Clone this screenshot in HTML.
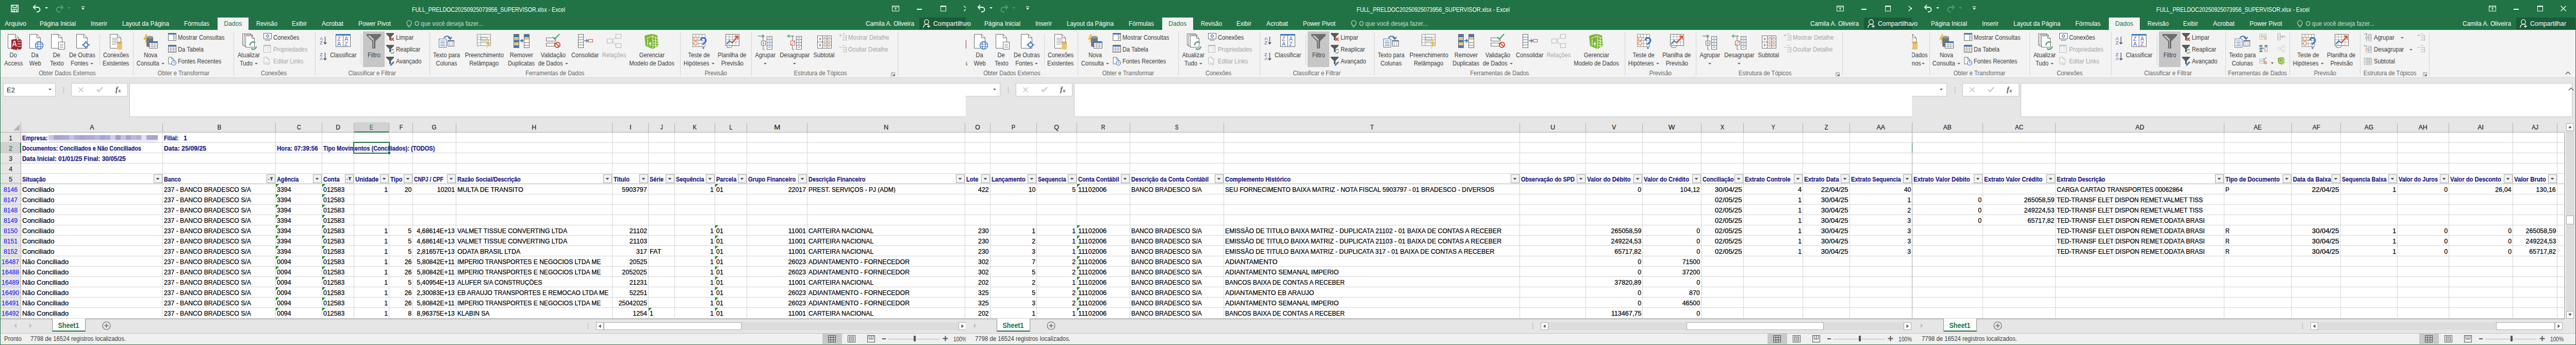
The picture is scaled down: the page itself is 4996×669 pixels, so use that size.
<!DOCTYPE html><html><head><meta charset="utf-8"><title>Excel</title><style>html,body{margin:0;padding:0}
body{width:4996px;height:669px;overflow:hidden;position:relative;background:#e6e6e6;font-family:"Liberation Sans",sans-serif}
.t{position:absolute;white-space:nowrap;line-height:1}
.t span{display:inline-block}
.g span{-webkit-text-stroke:0.25px currentColor}
.r{position:absolute}
.s{position:absolute;overflow:visible}
.clip{position:absolute;overflow:hidden}
</style></head><body><div class="r" style="left:0px;top:237px;width:4974px;height:19px;background:#e6e6e6;"></div><div class="r" style="left:41px;top:257px;width:4933px;height:360px;background:#ffffff;"></div><div class="r" style="left:0px;top:257px;width:40px;height:360px;background:#e6e6e6;"></div><div class="r" style="left:0px;top:277px;width:40px;height:19px;background:#d2d2d2;"></div><div class="r" style="left:687px;top:237px;width:67px;height:19px;background:#d2d2d2;"></div><div class="r" style="left:41px;top:276px;width:4933px;height:1px;background:#d4d4d4;"></div><div class="r" style="left:0px;top:276px;width:40px;height:1px;background:#c6c6c6;"></div><div class="r" style="left:41px;top:296px;width:4933px;height:1px;background:#d4d4d4;"></div><div class="r" style="left:0px;top:296px;width:40px;height:1px;background:#c6c6c6;"></div><div class="r" style="left:41px;top:316px;width:4933px;height:1px;background:#d4d4d4;"></div><div class="r" style="left:0px;top:316px;width:40px;height:1px;background:#c6c6c6;"></div><div class="r" style="left:41px;top:336px;width:4933px;height:1px;background:#d4d4d4;"></div><div class="r" style="left:0px;top:336px;width:40px;height:1px;background:#c6c6c6;"></div><div class="r" style="left:41px;top:356px;width:4933px;height:1px;background:#d4d4d4;"></div><div class="r" style="left:0px;top:356px;width:40px;height:1px;background:#c6c6c6;"></div><div class="r" style="left:41px;top:376px;width:4933px;height:1px;background:#d4d4d4;"></div><div class="r" style="left:0px;top:376px;width:40px;height:1px;background:#c6c6c6;"></div><div class="r" style="left:41px;top:396px;width:4933px;height:1px;background:#d4d4d4;"></div><div class="r" style="left:0px;top:396px;width:40px;height:1px;background:#c6c6c6;"></div><div class="r" style="left:41px;top:416px;width:4933px;height:1px;background:#d4d4d4;"></div><div class="r" style="left:0px;top:416px;width:40px;height:1px;background:#c6c6c6;"></div><div class="r" style="left:41px;top:436px;width:4933px;height:1px;background:#d4d4d4;"></div><div class="r" style="left:0px;top:436px;width:40px;height:1px;background:#c6c6c6;"></div><div class="r" style="left:41px;top:456px;width:4933px;height:1px;background:#d4d4d4;"></div><div class="r" style="left:0px;top:456px;width:40px;height:1px;background:#c6c6c6;"></div><div class="r" style="left:41px;top:476px;width:4933px;height:1px;background:#d4d4d4;"></div><div class="r" style="left:0px;top:476px;width:40px;height:1px;background:#c6c6c6;"></div><div class="r" style="left:41px;top:496px;width:4933px;height:1px;background:#d4d4d4;"></div><div class="r" style="left:0px;top:496px;width:40px;height:1px;background:#c6c6c6;"></div><div class="r" style="left:41px;top:516px;width:4933px;height:1px;background:#d4d4d4;"></div><div class="r" style="left:0px;top:516px;width:40px;height:1px;background:#c6c6c6;"></div><div class="r" style="left:41px;top:536px;width:4933px;height:1px;background:#d4d4d4;"></div><div class="r" style="left:0px;top:536px;width:40px;height:1px;background:#c6c6c6;"></div><div class="r" style="left:41px;top:556px;width:4933px;height:1px;background:#d4d4d4;"></div><div class="r" style="left:0px;top:556px;width:40px;height:1px;background:#c6c6c6;"></div><div class="r" style="left:41px;top:576px;width:4933px;height:1px;background:#d4d4d4;"></div><div class="r" style="left:0px;top:576px;width:40px;height:1px;background:#c6c6c6;"></div><div class="r" style="left:41px;top:596px;width:4933px;height:1px;background:#d4d4d4;"></div><div class="r" style="left:0px;top:596px;width:40px;height:1px;background:#c6c6c6;"></div><div class="r" style="left:0px;top:356px;width:4974px;height:1px;background:#b4b4b4;"></div><div class="r" style="left:0px;top:354px;width:40px;height:1px;background:#c6c6c6;"></div><div class="r" style="left:315px;top:257px;width:1px;height:360px;background:#d4d4d4;"></div><div class="r" style="left:534px;top:257px;width:1px;height:360px;background:#d4d4d4;"></div><div class="r" style="left:624px;top:257px;width:1px;height:360px;background:#d4d4d4;"></div><div class="r" style="left:686px;top:257px;width:1px;height:360px;background:#d4d4d4;"></div><div class="r" style="left:754px;top:257px;width:1px;height:360px;background:#d4d4d4;"></div><div class="r" style="left:800px;top:257px;width:1px;height:360px;background:#d4d4d4;"></div><div class="r" style="left:884px;top:257px;width:1px;height:360px;background:#d4d4d4;"></div><div class="r" style="left:1187px;top:257px;width:1px;height:360px;background:#d4d4d4;"></div><div class="r" style="left:1257px;top:257px;width:1px;height:360px;background:#d4d4d4;"></div><div class="r" style="left:1308px;top:257px;width:1px;height:360px;background:#d4d4d4;"></div><div class="r" style="left:1386px;top:257px;width:1px;height:360px;background:#d4d4d4;"></div><div class="r" style="left:1448px;top:257px;width:1px;height:360px;background:#d4d4d4;"></div><div class="r" style="left:1565px;top:257px;width:1px;height:360px;background:#d4d4d4;"></div><div class="r" style="left:1871px;top:257px;width:1px;height:360px;background:#d4d4d4;"></div><div class="r" style="left:1920px;top:257px;width:1px;height:360px;background:#d4d4d4;"></div><div class="r" style="left:2010px;top:257px;width:1px;height:360px;background:#d4d4d4;"></div><div class="r" style="left:2088px;top:257px;width:1px;height:360px;background:#d4d4d4;"></div><div class="r" style="left:2191px;top:257px;width:1px;height:360px;background:#d4d4d4;"></div><div class="r" style="left:2373px;top:257px;width:1px;height:360px;background:#d4d4d4;"></div><div class="r" style="left:2947px;top:257px;width:1px;height:360px;background:#d4d4d4;"></div><div class="r" style="left:3075px;top:257px;width:1px;height:360px;background:#d4d4d4;"></div><div class="r" style="left:3185px;top:257px;width:1px;height:360px;background:#d4d4d4;"></div><div class="r" style="left:3299px;top:257px;width:1px;height:360px;background:#d4d4d4;"></div><div class="r" style="left:3381px;top:257px;width:1px;height:360px;background:#d4d4d4;"></div><div class="r" style="left:3496px;top:257px;width:1px;height:360px;background:#d4d4d4;"></div><div class="r" style="left:3587px;top:257px;width:1px;height:360px;background:#d4d4d4;"></div><div class="r" style="left:3708px;top:257px;width:1px;height:360px;background:#d4d4d4;"></div><div class="r" style="left:3845px;top:257px;width:1px;height:360px;background:#d4d4d4;"></div><div class="r" style="left:3986px;top:257px;width:1px;height:360px;background:#d4d4d4;"></div><div class="r" style="left:4313px;top:257px;width:1px;height:360px;background:#d4d4d4;"></div><div class="r" style="left:4444px;top:257px;width:1px;height:360px;background:#d4d4d4;"></div><div class="r" style="left:4539px;top:257px;width:1px;height:360px;background:#d4d4d4;"></div><div class="r" style="left:4649px;top:257px;width:1px;height:360px;background:#d4d4d4;"></div><div class="r" style="left:4749px;top:257px;width:1px;height:360px;background:#d4d4d4;"></div><div class="r" style="left:4873px;top:257px;width:1px;height:360px;background:#d4d4d4;"></div><div class="r" style="left:4959px;top:257px;width:1px;height:360px;background:#d4d4d4;"></div><div class="r" style="left:315px;top:239px;width:1px;height:17px;background:#ababab;"></div><div class="r" style="left:534px;top:239px;width:1px;height:17px;background:#ababab;"></div><div class="r" style="left:624px;top:239px;width:1px;height:17px;background:#ababab;"></div><div class="r" style="left:686px;top:239px;width:1px;height:17px;background:#ababab;"></div><div class="r" style="left:754px;top:239px;width:1px;height:17px;background:#ababab;"></div><div class="r" style="left:800px;top:239px;width:1px;height:17px;background:#ababab;"></div><div class="r" style="left:884px;top:239px;width:1px;height:17px;background:#ababab;"></div><div class="r" style="left:1187px;top:239px;width:1px;height:17px;background:#ababab;"></div><div class="r" style="left:1257px;top:239px;width:1px;height:17px;background:#ababab;"></div><div class="r" style="left:1308px;top:239px;width:1px;height:17px;background:#ababab;"></div><div class="r" style="left:1386px;top:239px;width:1px;height:17px;background:#ababab;"></div><div class="r" style="left:1448px;top:239px;width:1px;height:17px;background:#ababab;"></div><div class="r" style="left:1565px;top:239px;width:1px;height:17px;background:#ababab;"></div><div class="r" style="left:1871px;top:239px;width:1px;height:17px;background:#ababab;"></div><div class="r" style="left:1920px;top:239px;width:1px;height:17px;background:#ababab;"></div><div class="r" style="left:2010px;top:239px;width:1px;height:17px;background:#ababab;"></div><div class="r" style="left:2088px;top:239px;width:1px;height:17px;background:#ababab;"></div><div class="r" style="left:2191px;top:239px;width:1px;height:17px;background:#ababab;"></div><div class="r" style="left:2373px;top:239px;width:1px;height:17px;background:#ababab;"></div><div class="r" style="left:2947px;top:239px;width:1px;height:17px;background:#ababab;"></div><div class="r" style="left:3075px;top:239px;width:1px;height:17px;background:#ababab;"></div><div class="r" style="left:3185px;top:239px;width:1px;height:17px;background:#ababab;"></div><div class="r" style="left:3299px;top:239px;width:1px;height:17px;background:#ababab;"></div><div class="r" style="left:3381px;top:239px;width:1px;height:17px;background:#ababab;"></div><div class="r" style="left:3496px;top:239px;width:1px;height:17px;background:#ababab;"></div><div class="r" style="left:3587px;top:239px;width:1px;height:17px;background:#ababab;"></div><div class="r" style="left:3708px;top:239px;width:1px;height:17px;background:#ababab;"></div><div class="r" style="left:3845px;top:239px;width:1px;height:17px;background:#ababab;"></div><div class="r" style="left:3986px;top:239px;width:1px;height:17px;background:#ababab;"></div><div class="r" style="left:4313px;top:239px;width:1px;height:17px;background:#ababab;"></div><div class="r" style="left:4444px;top:239px;width:1px;height:17px;background:#ababab;"></div><div class="r" style="left:4539px;top:239px;width:1px;height:17px;background:#ababab;"></div><div class="r" style="left:4649px;top:239px;width:1px;height:17px;background:#ababab;"></div><div class="r" style="left:4749px;top:239px;width:1px;height:17px;background:#ababab;"></div><div class="r" style="left:4873px;top:239px;width:1px;height:17px;background:#ababab;"></div><div class="r" style="left:4959px;top:239px;width:1px;height:17px;background:#ababab;"></div><div class="r" style="left:0px;top:256px;width:4974px;height:1px;background:#ababab;"></div><div class="r" style="left:40px;top:237px;width:1px;height:380px;background:#ababab;"></div><div class="r" style="left:0px;top:617px;width:4974px;height:1px;background:#d4d4d4;"></div><div class="r" style="left:0px;top:618px;width:4974px;height:1px;background:#a0a0a0;"></div><svg class="s" style="left:26px;top:240px;" width="13" height="14" viewBox="0 0 13 14"><path d="M12 1 L12 13 L0 13 Z" fill="#b4b4b4"/></svg><div class="t g" style="left:-422.0px;width:1200px;text-align:center;top:240.0px;font-size:13px;color:#262626;"><span style="transform:scaleX(0.9509);transform-origin:50% 0">A</span></div><div class="t g" style="left:-175.0px;width:1200px;text-align:center;top:240.0px;font-size:13px;color:#262626;"><span style="transform:scaleX(0.8939);transform-origin:50% 0">B</span></div><div class="t g" style="left:-20.5px;width:1200px;text-align:center;top:240.0px;font-size:13px;color:#262626;"><span style="transform:scaleX(0.8093);transform-origin:50% 0">C</span></div><div class="t g" style="left:55.5px;width:1200px;text-align:center;top:240.0px;font-size:13px;color:#262626;"><span style="transform:scaleX(0.9338);transform-origin:50% 0">D</span></div><div class="t g" style="left:120.5px;width:1200px;text-align:center;top:240.0px;font-size:13px;color:#217346;"><span style="transform:scaleX(0.8024);transform-origin:50% 0">E</span></div><div class="t g" style="left:177.5px;width:1200px;text-align:center;top:240.0px;font-size:13px;color:#262626;"><span style="transform:scaleX(0.8245);transform-origin:50% 0">F</span></div><div class="t g" style="left:242.5px;width:1200px;text-align:center;top:240.0px;font-size:13px;color:#262626;"><span style="transform:scaleX(0.8891);transform-origin:50% 0">G</span></div><div class="t g" style="left:436.0px;width:1200px;text-align:center;top:240.0px;font-size:13px;color:#262626;"><span style="transform:scaleX(0.9457);transform-origin:50% 0">H</span></div><div class="t g" style="left:622.5px;width:1200px;text-align:center;top:240.0px;font-size:13px;color:#262626;"><span style="transform:scaleX(0.9941);transform-origin:50% 0">I</span></div><div class="t g" style="left:683.0px;width:1200px;text-align:center;top:240.0px;font-size:13px;color:#262626;"><span style="transform:scaleX(0.6990);transform-origin:50% 0">J</span></div><div class="t g" style="left:747.5px;width:1200px;text-align:center;top:240.0px;font-size:13px;color:#262626;"><span style="transform:scaleX(0.8538);transform-origin:50% 0">K</span></div><div class="t g" style="left:817.5px;width:1200px;text-align:center;top:240.0px;font-size:13px;color:#262626;"><span style="transform:scaleX(0.8286);transform-origin:50% 0">L</span></div><div class="t g" style="left:907.0px;width:1200px;text-align:center;top:240.0px;font-size:13px;color:#262626;"><span style="transform:scaleX(1.1250);transform-origin:50% 0">M</span></div><div class="t g" style="left:1118.5px;width:1200px;text-align:center;top:240.0px;font-size:13px;color:#262626;"><span style="transform:scaleX(0.9798);transform-origin:50% 0">N</span></div><div class="t g" style="left:1296.0px;width:1200px;text-align:center;top:240.0px;font-size:13px;color:#262626;"><span style="transform:scaleX(0.9331);transform-origin:50% 0">O</span></div><div class="t g" style="left:1365.5px;width:1200px;text-align:center;top:240.0px;font-size:13px;color:#262626;"><span style="transform:scaleX(0.8489);transform-origin:50% 0">P</span></div><div class="t g" style="left:1449.5px;width:1200px;text-align:center;top:240.0px;font-size:13px;color:#262626;"><span style="transform:scaleX(0.9482);transform-origin:50% 0">Q</span></div><div class="t g" style="left:1540.0px;width:1200px;text-align:center;top:240.0px;font-size:13px;color:#262626;"><span style="transform:scaleX(0.8241);transform-origin:50% 0">R</span></div><div class="t g" style="left:1682.5px;width:1200px;text-align:center;top:240.0px;font-size:13px;color:#262626;"><span style="transform:scaleX(0.7551);transform-origin:50% 0">S</span></div><div class="t g" style="left:2060.5px;width:1200px;text-align:center;top:240.0px;font-size:13px;color:#262626;"><span style="transform:scaleX(0.8744);transform-origin:50% 0">T</span></div><div class="t g" style="left:2411.5px;width:1200px;text-align:center;top:240.0px;font-size:13px;color:#262626;"><span style="transform:scaleX(0.9738);transform-origin:50% 0">U</span></div><div class="t g" style="left:2530.5px;width:1200px;text-align:center;top:240.0px;font-size:13px;color:#262626;"><span style="transform:scaleX(0.9324);transform-origin:50% 0">V</span></div><div class="t g" style="left:2642.5px;width:1200px;text-align:center;top:240.0px;font-size:13px;color:#262626;"><span style="transform:scaleX(1.0332);transform-origin:50% 0">W</span></div><div class="t g" style="left:2740.5px;width:1200px;text-align:center;top:240.0px;font-size:13px;color:#262626;"><span style="transform:scaleX(0.8530);transform-origin:50% 0">X</span></div><div class="t g" style="left:2839.0px;width:1200px;text-align:center;top:240.0px;font-size:13px;color:#262626;"><span style="transform:scaleX(0.8008);transform-origin:50% 0">Y</span></div><div class="t g" style="left:2942.0px;width:1200px;text-align:center;top:240.0px;font-size:13px;color:#262626;"><span style="transform:scaleX(0.8403);transform-origin:50% 0">Z</span></div><div class="t g" style="left:3048.0px;width:1200px;text-align:center;top:240.0px;font-size:13px;color:#262626;"><span style="transform:scaleX(0.9509);transform-origin:50% 0">AA</span></div><div class="t g" style="left:3177.0px;width:1200px;text-align:center;top:240.0px;font-size:13px;color:#262626;"><span style="transform:scaleX(0.9224);transform-origin:50% 0">AB</span></div><div class="t g" style="left:3316.0px;width:1200px;text-align:center;top:240.0px;font-size:13px;color:#262626;"><span style="transform:scaleX(0.8773);transform-origin:50% 0">AC</span></div><div class="t g" style="left:3550.0px;width:1200px;text-align:center;top:240.0px;font-size:13px;color:#262626;"><span style="transform:scaleX(0.9420);transform-origin:50% 0">AD</span></div><div class="t g" style="left:3779.0px;width:1200px;text-align:center;top:240.0px;font-size:13px;color:#262626;"><span style="transform:scaleX(0.8766);transform-origin:50% 0">AE</span></div><div class="t g" style="left:3892.0px;width:1200px;text-align:center;top:240.0px;font-size:13px;color:#262626;"><span style="transform:scaleX(0.8905);transform-origin:50% 0">AF</span></div><div class="t g" style="left:3994.5px;width:1200px;text-align:center;top:240.0px;font-size:13px;color:#262626;"><span style="transform:scaleX(0.9176);transform-origin:50% 0">AG</span></div><div class="t g" style="left:4099.5px;width:1200px;text-align:center;top:240.0px;font-size:13px;color:#262626;"><span style="transform:scaleX(0.9482);transform-origin:50% 0">AH</span></div><div class="t g" style="left:4211.5px;width:1200px;text-align:center;top:240.0px;font-size:13px;color:#262626;"><span style="transform:scaleX(0.9636);transform-origin:50% 0">AI</span></div><div class="t g" style="left:4316.5px;width:1200px;text-align:center;top:240.0px;font-size:13px;color:#262626;"><span style="transform:scaleX(0.8430);transform-origin:50% 0">AJ</span></div><div class="r" style="left:3708px;top:237px;width:1px;height:382px;background:#a6a6a6;"></div><div class="r" style="left:3708px;top:277px;width:1px;height:19px;background:#217346;"></div><div class="r" style="left:687px;top:255px;width:67px;height:2px;background:#217346;"></div><div class="t g" style="left:-579.5px;width:1200px;text-align:center;top:261.0px;font-size:13px;color:#262626;"><span style="transform:scaleX(0.9391);transform-origin:50% 0">1</span></div><div class="t g" style="left:-579.5px;width:1200px;text-align:center;top:281.0px;font-size:13px;color:#217346;"><span style="transform:scaleX(0.9391);transform-origin:50% 0">2</span></div><div class="t g" style="left:-579.5px;width:1200px;text-align:center;top:301.0px;font-size:13px;color:#262626;"><span style="transform:scaleX(0.9391);transform-origin:50% 0">3</span></div><div class="t g" style="left:-579.5px;width:1200px;text-align:center;top:321.0px;font-size:13px;color:#262626;"><span style="transform:scaleX(0.9391);transform-origin:50% 0">4</span></div><div class="t g" style="left:-579.5px;width:1200px;text-align:center;top:341.0px;font-size:13px;color:#262626;"><span style="transform:scaleX(0.9391);transform-origin:50% 0">5</span></div><div class="t g" style="left:-579.5px;width:1200px;text-align:center;top:361.0px;font-size:13px;color:#2a2af5;"><span style="transform:scaleX(0.9391);transform-origin:50% 0">8146</span></div><div class="t g" style="left:-579.5px;width:1200px;text-align:center;top:381.0px;font-size:13px;color:#2a2af5;"><span style="transform:scaleX(0.9391);transform-origin:50% 0">8147</span></div><div class="t g" style="left:-579.5px;width:1200px;text-align:center;top:401.0px;font-size:13px;color:#2a2af5;"><span style="transform:scaleX(0.9391);transform-origin:50% 0">8148</span></div><div class="t g" style="left:-579.5px;width:1200px;text-align:center;top:421.0px;font-size:13px;color:#2a2af5;"><span style="transform:scaleX(0.9391);transform-origin:50% 0">8149</span></div><div class="t g" style="left:-579.5px;width:1200px;text-align:center;top:441.0px;font-size:13px;color:#2a2af5;"><span style="transform:scaleX(0.9391);transform-origin:50% 0">8150</span></div><div class="t g" style="left:-579.5px;width:1200px;text-align:center;top:461.0px;font-size:13px;color:#2a2af5;"><span style="transform:scaleX(0.9391);transform-origin:50% 0">8151</span></div><div class="t g" style="left:-579.5px;width:1200px;text-align:center;top:481.0px;font-size:13px;color:#2a2af5;"><span style="transform:scaleX(0.9391);transform-origin:50% 0">8152</span></div><div class="t g" style="left:-579.5px;width:1200px;text-align:center;top:501.0px;font-size:13px;color:#2a2af5;"><span style="transform:scaleX(0.9391);transform-origin:50% 0">16487</span></div><div class="t g" style="left:-579.5px;width:1200px;text-align:center;top:521.0px;font-size:13px;color:#2a2af5;"><span style="transform:scaleX(0.9391);transform-origin:50% 0">16488</span></div><div class="t g" style="left:-579.5px;width:1200px;text-align:center;top:541.0px;font-size:13px;color:#2a2af5;"><span style="transform:scaleX(0.9391);transform-origin:50% 0">16489</span></div><div class="t g" style="left:-579.5px;width:1200px;text-align:center;top:561.0px;font-size:13px;color:#2a2af5;"><span style="transform:scaleX(0.9391);transform-origin:50% 0">16490</span></div><div class="t g" style="left:-579.5px;width:1200px;text-align:center;top:581.0px;font-size:13px;color:#2a2af5;"><span style="transform:scaleX(0.9391);transform-origin:50% 0">16491</span></div><div class="t g" style="left:-579.5px;width:1200px;text-align:center;top:601.0px;font-size:13px;color:#2a2af5;"><span style="transform:scaleX(0.9391);transform-origin:50% 0">16492</span></div><div class="r" style="left:39px;top:277px;width:2px;height:19px;background:#217346;"></div><div class="t g" style="left:43px;top:261.84px;font-size:12px;color:#1f1f8a;font-weight:bold;"><span style="transform:scaleX(0.9020);transform-origin:0 0">Empresa:</span></div><div class="t g" style="left:318px;top:261.84px;font-size:12px;color:#1f1f8a;font-weight:bold;"><span style="transform:scaleX(0.9037);transform-origin:0 0">Filial:</span></div><div class="t g" style="left:356px;top:261.84px;font-size:12px;color:#1f1f8a;font-weight:bold;"><span style="transform:scaleX(1.0069);transform-origin:0 0">1</span></div><div class="t g" style="left:43px;top:281.84px;font-size:12px;color:#1f1f8a;font-weight:bold;"><span style="transform:scaleX(0.9038);transform-origin:0 0">Documentos: Conciliados e Não Conciliados</span></div><div class="t g" style="left:318px;top:281.84px;font-size:12px;color:#1f1f8a;font-weight:bold;"><span style="transform:scaleX(1.0223);transform-origin:0 0">Data: 25/09/25</span></div><div class="t g" style="left:537px;top:281.84px;font-size:12px;color:#1f1f8a;font-weight:bold;"><span style="transform:scaleX(0.9631);transform-origin:0 0">Hora: 07:39:56</span></div><div class="t g" style="left:627px;top:281.84px;font-size:12px;color:#1f1f8a;font-weight:bold;"><span style="transform:scaleX(0.9183);transform-origin:0 0">Tipo Movimentos (Conciliados): (TODOS)</span></div><div class="t g" style="left:43px;top:301.84px;font-size:12px;color:#1f1f8a;font-weight:bold;"><span style="transform:scaleX(0.9908);transform-origin:0 0">Data Inicial: 01/01/25 Final: 30/05/25</span></div><div class="r" style="left:94px;top:262px;width:10px;height:9px;background:#c9c6e4;"></div><div class="r" style="left:94px;top:271px;width:10px;height:5px;background:#ecebf3;"></div><div class="r" style="left:104px;top:262px;width:10px;height:9px;background:#a7a4d0;"></div><div class="r" style="left:104px;top:271px;width:10px;height:5px;background:#ecebf3;"></div><div class="r" style="left:114px;top:262px;width:10px;height:9px;background:#a9a6d1;"></div><div class="r" style="left:114px;top:271px;width:10px;height:5px;background:#ecebf3;"></div><div class="r" style="left:124px;top:262px;width:10px;height:9px;background:#a8abd9;"></div><div class="r" style="left:124px;top:271px;width:10px;height:5px;background:#ecebf3;"></div><div class="r" style="left:134px;top:262px;width:10px;height:9px;background:#c4c2e2;"></div><div class="r" style="left:134px;top:271px;width:10px;height:5px;background:#ecebf3;"></div><div class="r" style="left:144px;top:262px;width:10px;height:9px;background:#b0acd6;"></div><div class="r" style="left:144px;top:271px;width:10px;height:5px;background:#ecebf3;"></div><div class="r" style="left:154px;top:262px;width:10px;height:9px;background:#a6a3cf;"></div><div class="r" style="left:154px;top:271px;width:10px;height:5px;background:#ecebf3;"></div><div class="r" style="left:164px;top:262px;width:10px;height:9px;background:#aeaad4;"></div><div class="r" style="left:164px;top:271px;width:10px;height:5px;background:#ecebf3;"></div><div class="r" style="left:174px;top:262px;width:10px;height:9px;background:#afabd3;"></div><div class="r" style="left:174px;top:271px;width:10px;height:5px;background:#ecebf3;"></div><div class="r" style="left:184px;top:262px;width:10px;height:9px;background:#bcb8da;"></div><div class="r" style="left:184px;top:271px;width:10px;height:5px;background:#ecebf3;"></div><div class="r" style="left:194px;top:262px;width:10px;height:9px;background:#9fa7d6;"></div><div class="r" style="left:194px;top:271px;width:10px;height:5px;background:#ecebf3;"></div><div class="r" style="left:204px;top:262px;width:10px;height:9px;background:#aeaad5;"></div><div class="r" style="left:204px;top:271px;width:10px;height:5px;background:#ecebf3;"></div><div class="r" style="left:214px;top:262px;width:10px;height:9px;background:#cfcfe8;"></div><div class="r" style="left:214px;top:271px;width:10px;height:5px;background:#ecebf3;"></div><div class="r" style="left:224px;top:262px;width:10px;height:9px;background:#a19dcc;"></div><div class="r" style="left:224px;top:271px;width:10px;height:5px;background:#ecebf3;"></div><div class="r" style="left:234px;top:262px;width:10px;height:9px;background:#c3c2e2;"></div><div class="r" style="left:234px;top:271px;width:10px;height:5px;background:#ecebf3;"></div><div class="r" style="left:244px;top:262px;width:10px;height:9px;background:#a7a3d0;"></div><div class="r" style="left:244px;top:271px;width:10px;height:5px;background:#ecebf3;"></div><div class="r" style="left:254px;top:262px;width:10px;height:9px;background:#bbb8dc;"></div><div class="r" style="left:254px;top:271px;width:10px;height:5px;background:#ecebf3;"></div><div class="r" style="left:264px;top:262px;width:10px;height:9px;background:#b2aed6;"></div><div class="r" style="left:264px;top:271px;width:10px;height:5px;background:#ecebf3;"></div><div class="r" style="left:274px;top:262px;width:10px;height:9px;background:#e3e2f0;"></div><div class="r" style="left:274px;top:271px;width:10px;height:5px;background:#ecebf3;"></div><div class="r" style="left:284px;top:262px;width:10px;height:9px;background:#aba8d4;"></div><div class="r" style="left:284px;top:271px;width:10px;height:5px;background:#ecebf3;"></div><div class="r" style="left:294px;top:262px;width:12px;height:9px;background:#a7a3d2;"></div><div class="r" style="left:294px;top:271px;width:12px;height:5px;background:#ecebf3;"></div><div class="t g" style="left:43px;top:341.84px;font-size:12px;color:#1f1f8a;font-weight:bold;"><span style="transform:scaleX(0.9136);transform-origin:0 0">Situação</span></div><svg class="s" style="left:298px;top:338px;" width="17" height="17" viewBox="0 0 17 17"><rect x="0.5" y="0.5" width="16" height="16" fill="#f3f4f6" stroke="#a6a6a6"/><path d="M4.5 7 L11.5 7 L8 11 Z" fill="#555"/></svg><div class="t g" style="left:318px;top:341.84px;font-size:12px;color:#1f1f8a;font-weight:bold;"><span style="transform:scaleX(0.8959);transform-origin:0 0">Banco</span></div><svg class="s" style="left:517px;top:338px;" width="17" height="17" viewBox="0 0 17 17"><rect x="0.5" y="0.5" width="16" height="16" fill="#f3f4f6" stroke="#a6a6a6"/><path d="M6 5.5 L13 5.5 L10.5 8.5 L10.5 12 L8.5 12 L8.5 8.5 Z" fill="#444"/><path d="M2.5 9 L6 9 L4.25 11 Z" fill="#444"/></svg><div class="t g" style="left:537px;top:341.84px;font-size:12px;color:#1f1f8a;font-weight:bold;"><span style="transform:scaleX(0.9068);transform-origin:0 0">Agência</span></div><svg class="s" style="left:607px;top:338px;" width="17" height="17" viewBox="0 0 17 17"><rect x="0.5" y="0.5" width="16" height="16" fill="#f3f4f6" stroke="#a6a6a6"/><path d="M4.5 7 L11.5 7 L8 11 Z" fill="#555"/></svg><div class="t g" style="left:627px;top:341.84px;font-size:12px;color:#1f1f8a;font-weight:bold;"><span style="transform:scaleX(0.9289);transform-origin:0 0">Conta</span></div><svg class="s" style="left:669px;top:338px;" width="17" height="17" viewBox="0 0 17 17"><rect x="0.5" y="0.5" width="16" height="16" fill="#f3f4f6" stroke="#a6a6a6"/><path d="M6 5.5 L13 5.5 L10.5 8.5 L10.5 12 L8.5 12 L8.5 8.5 Z" fill="#444"/><path d="M2.5 9 L6 9 L4.25 11 Z" fill="#444"/></svg><div class="t g" style="left:689px;top:341.84px;font-size:12px;color:#1f1f8a;font-weight:bold;"><span style="transform:scaleX(0.9532);transform-origin:0 0">Unidade</span></div><svg class="s" style="left:737px;top:338px;" width="17" height="17" viewBox="0 0 17 17"><rect x="0.5" y="0.5" width="16" height="16" fill="#f3f4f6" stroke="#a6a6a6"/><path d="M4.5 7 L11.5 7 L8 11 Z" fill="#555"/></svg><div class="t g" style="left:757px;top:341.84px;font-size:12px;color:#1f1f8a;font-weight:bold;"><span style="transform:scaleX(0.9311);transform-origin:0 0">Tipo</span></div><svg class="s" style="left:783px;top:338px;" width="17" height="17" viewBox="0 0 17 17"><rect x="0.5" y="0.5" width="16" height="16" fill="#f3f4f6" stroke="#a6a6a6"/><path d="M4.5 7 L11.5 7 L8 11 Z" fill="#555"/></svg><div class="t g" style="left:803px;top:341.84px;font-size:12px;color:#1f1f8a;font-weight:bold;"><span style="transform:scaleX(0.8605);transform-origin:0 0">CNPJ / CPF</span></div><svg class="s" style="left:867px;top:338px;" width="17" height="17" viewBox="0 0 17 17"><rect x="0.5" y="0.5" width="16" height="16" fill="#f3f4f6" stroke="#a6a6a6"/><path d="M4.5 7 L11.5 7 L8 11 Z" fill="#555"/></svg><div class="t g" style="left:887px;top:341.84px;font-size:12px;color:#1f1f8a;font-weight:bold;"><span style="transform:scaleX(0.9113);transform-origin:0 0">Razão Social/Descrição</span></div><svg class="s" style="left:1170px;top:338px;" width="17" height="17" viewBox="0 0 17 17"><rect x="0.5" y="0.5" width="16" height="16" fill="#f3f4f6" stroke="#a6a6a6"/><path d="M4.5 7 L11.5 7 L8 11 Z" fill="#555"/></svg><div class="t g" style="left:1190px;top:341.84px;font-size:12px;color:#1f1f8a;font-weight:bold;"><span style="transform:scaleX(0.9580);transform-origin:0 0">Titulo</span></div><svg class="s" style="left:1240px;top:338px;" width="17" height="17" viewBox="0 0 17 17"><rect x="0.5" y="0.5" width="16" height="16" fill="#f3f4f6" stroke="#a6a6a6"/><path d="M4.5 7 L11.5 7 L8 11 Z" fill="#555"/></svg><div class="t g" style="left:1260px;top:341.84px;font-size:12px;color:#1f1f8a;font-weight:bold;"><span style="transform:scaleX(0.9125);transform-origin:0 0">Série</span></div><svg class="s" style="left:1291px;top:338px;" width="17" height="17" viewBox="0 0 17 17"><rect x="0.5" y="0.5" width="16" height="16" fill="#f3f4f6" stroke="#a6a6a6"/><path d="M4.5 7 L11.5 7 L8 11 Z" fill="#555"/></svg><div class="t g" style="left:1311px;top:341.84px;font-size:12px;color:#1f1f8a;font-weight:bold;"><span style="transform:scaleX(0.9106);transform-origin:0 0">Sequência</span></div><svg class="s" style="left:1369px;top:338px;" width="17" height="17" viewBox="0 0 17 17"><rect x="0.5" y="0.5" width="16" height="16" fill="#f3f4f6" stroke="#a6a6a6"/><path d="M4.5 7 L11.5 7 L8 11 Z" fill="#555"/></svg><div class="t g" style="left:1389px;top:341.84px;font-size:12px;color:#1f1f8a;font-weight:bold;"><span style="transform:scaleX(0.9203);transform-origin:0 0">Parcela</span></div><svg class="s" style="left:1431px;top:338px;" width="17" height="17" viewBox="0 0 17 17"><rect x="0.5" y="0.5" width="16" height="16" fill="#f3f4f6" stroke="#a6a6a6"/><path d="M4.5 7 L11.5 7 L8 11 Z" fill="#555"/></svg><div class="t g" style="left:1451px;top:341.84px;font-size:12px;color:#1f1f8a;font-weight:bold;"><span style="transform:scaleX(0.9231);transform-origin:0 0">Grupo Financeiro</span></div><svg class="s" style="left:1548px;top:338px;" width="17" height="17" viewBox="0 0 17 17"><rect x="0.5" y="0.5" width="16" height="16" fill="#f3f4f6" stroke="#a6a6a6"/><path d="M4.5 7 L11.5 7 L8 11 Z" fill="#555"/></svg><div class="t g" style="left:1568px;top:341.84px;font-size:12px;color:#1f1f8a;font-weight:bold;"><span style="transform:scaleX(0.9104);transform-origin:0 0">Descrição Financeiro</span></div><svg class="s" style="left:1854px;top:338px;" width="17" height="17" viewBox="0 0 17 17"><rect x="0.5" y="0.5" width="16" height="16" fill="#f3f4f6" stroke="#a6a6a6"/><path d="M4.5 7 L11.5 7 L8 11 Z" fill="#555"/></svg><div class="t g" style="left:1874px;top:341.84px;font-size:12px;color:#1f1f8a;font-weight:bold;"><span style="transform:scaleX(0.9227);transform-origin:0 0">Lote</span></div><svg class="s" style="left:1903px;top:338px;" width="17" height="17" viewBox="0 0 17 17"><rect x="0.5" y="0.5" width="16" height="16" fill="#f3f4f6" stroke="#a6a6a6"/><path d="M4.5 7 L11.5 7 L8 11 Z" fill="#555"/></svg><div class="t g" style="left:1923px;top:341.84px;font-size:12px;color:#1f1f8a;font-weight:bold;"><span style="transform:scaleX(0.9305);transform-origin:0 0">Lançamento</span></div><svg class="s" style="left:1993px;top:338px;" width="17" height="17" viewBox="0 0 17 17"><rect x="0.5" y="0.5" width="16" height="16" fill="#f3f4f6" stroke="#a6a6a6"/><path d="M4.5 7 L11.5 7 L8 11 Z" fill="#555"/></svg><div class="t g" style="left:2013px;top:341.84px;font-size:12px;color:#1f1f8a;font-weight:bold;"><span style="transform:scaleX(0.9106);transform-origin:0 0">Sequencia</span></div><svg class="s" style="left:2071px;top:338px;" width="17" height="17" viewBox="0 0 17 17"><rect x="0.5" y="0.5" width="16" height="16" fill="#f3f4f6" stroke="#a6a6a6"/><path d="M4.5 7 L11.5 7 L8 11 Z" fill="#555"/></svg><div class="t g" style="left:2091px;top:341.84px;font-size:12px;color:#1f1f8a;font-weight:bold;"><span style="transform:scaleX(0.9296);transform-origin:0 0">Conta Contábil</span></div><svg class="s" style="left:2174px;top:338px;" width="17" height="17" viewBox="0 0 17 17"><rect x="0.5" y="0.5" width="16" height="16" fill="#f3f4f6" stroke="#a6a6a6"/><path d="M4.5 7 L11.5 7 L8 11 Z" fill="#555"/></svg><div class="t g" style="left:2194px;top:341.84px;font-size:12px;color:#1f1f8a;font-weight:bold;"><span style="transform:scaleX(0.9190);transform-origin:0 0">Descrição da Conta Contábil</span></div><svg class="s" style="left:2356px;top:338px;" width="17" height="17" viewBox="0 0 17 17"><rect x="0.5" y="0.5" width="16" height="16" fill="#f3f4f6" stroke="#a6a6a6"/><path d="M4.5 7 L11.5 7 L8 11 Z" fill="#555"/></svg><div class="t g" style="left:2376px;top:341.84px;font-size:12px;color:#1f1f8a;font-weight:bold;"><span style="transform:scaleX(0.9387);transform-origin:0 0">Complemento Histórico</span></div><svg class="s" style="left:2930px;top:338px;" width="17" height="17" viewBox="0 0 17 17"><rect x="0.5" y="0.5" width="16" height="16" fill="#f3f4f6" stroke="#a6a6a6"/><path d="M4.5 7 L11.5 7 L8 11 Z" fill="#555"/></svg><div class="t g" style="left:2950px;top:341.84px;font-size:12px;color:#1f1f8a;font-weight:bold;"><span style="transform:scaleX(0.9049);transform-origin:0 0">Observação do SPD</span></div><svg class="s" style="left:3058px;top:338px;" width="17" height="17" viewBox="0 0 17 17"><rect x="0.5" y="0.5" width="16" height="16" fill="#f3f4f6" stroke="#a6a6a6"/><path d="M4.5 7 L11.5 7 L8 11 Z" fill="#555"/></svg><div class="t g" style="left:3078px;top:341.84px;font-size:12px;color:#1f1f8a;font-weight:bold;"><span style="transform:scaleX(0.9607);transform-origin:0 0">Valor do Débito</span></div><svg class="s" style="left:3168px;top:338px;" width="17" height="17" viewBox="0 0 17 17"><rect x="0.5" y="0.5" width="16" height="16" fill="#f3f4f6" stroke="#a6a6a6"/><path d="M4.5 7 L11.5 7 L8 11 Z" fill="#555"/></svg><div class="t g" style="left:3188px;top:341.84px;font-size:12px;color:#1f1f8a;font-weight:bold;"><span style="transform:scaleX(0.9479);transform-origin:0 0">Valor do Crédito</span></div><svg class="s" style="left:3282px;top:338px;" width="17" height="17" viewBox="0 0 17 17"><rect x="0.5" y="0.5" width="16" height="16" fill="#f3f4f6" stroke="#a6a6a6"/><path d="M4.5 7 L11.5 7 L8 11 Z" fill="#555"/></svg><div class="t g" style="left:3302px;top:341.84px;font-size:12px;color:#1f1f8a;font-weight:bold;"><span style="transform:scaleX(0.9015);transform-origin:0 0">Conciliação</span></div><svg class="s" style="left:3364px;top:338px;" width="17" height="17" viewBox="0 0 17 17"><rect x="0.5" y="0.5" width="16" height="16" fill="#f3f4f6" stroke="#a6a6a6"/><path d="M4.5 7 L11.5 7 L8 11 Z" fill="#555"/></svg><div class="t g" style="left:3384px;top:341.84px;font-size:12px;color:#1f1f8a;font-weight:bold;"><span style="transform:scaleX(0.9411);transform-origin:0 0">Extrato Controle</span></div><svg class="s" style="left:3479px;top:338px;" width="17" height="17" viewBox="0 0 17 17"><rect x="0.5" y="0.5" width="16" height="16" fill="#f3f4f6" stroke="#a6a6a6"/><path d="M4.5 7 L11.5 7 L8 11 Z" fill="#555"/></svg><div class="t g" style="left:3499px;top:341.84px;font-size:12px;color:#1f1f8a;font-weight:bold;"><span style="transform:scaleX(0.9549);transform-origin:0 0">Extrato Data</span></div><svg class="s" style="left:3570px;top:338px;" width="17" height="17" viewBox="0 0 17 17"><rect x="0.5" y="0.5" width="16" height="16" fill="#f3f4f6" stroke="#a6a6a6"/><path d="M4.5 7 L11.5 7 L8 11 Z" fill="#555"/></svg><div class="t g" style="left:3590px;top:341.84px;font-size:12px;color:#1f1f8a;font-weight:bold;"><span style="transform:scaleX(0.9238);transform-origin:0 0">Extrato Sequencia</span></div><svg class="s" style="left:3691px;top:338px;" width="17" height="17" viewBox="0 0 17 17"><rect x="0.5" y="0.5" width="16" height="16" fill="#f3f4f6" stroke="#a6a6a6"/><path d="M4.5 7 L11.5 7 L8 11 Z" fill="#555"/></svg><div class="t g" style="left:3711px;top:341.84px;font-size:12px;color:#1f1f8a;font-weight:bold;"><span style="transform:scaleX(0.9580);transform-origin:0 0">Extrato Valor Débito</span></div><svg class="s" style="left:3828px;top:338px;" width="17" height="17" viewBox="0 0 17 17"><rect x="0.5" y="0.5" width="16" height="16" fill="#f3f4f6" stroke="#a6a6a6"/><path d="M4.5 7 L11.5 7 L8 11 Z" fill="#555"/></svg><div class="t g" style="left:3848px;top:341.84px;font-size:12px;color:#1f1f8a;font-weight:bold;"><span style="transform:scaleX(0.9481);transform-origin:0 0">Extrato Valor Crédito</span></div><svg class="s" style="left:3969px;top:338px;" width="17" height="17" viewBox="0 0 17 17"><rect x="0.5" y="0.5" width="16" height="16" fill="#f3f4f6" stroke="#a6a6a6"/><path d="M4.5 7 L11.5 7 L8 11 Z" fill="#555"/></svg><div class="t g" style="left:3989px;top:341.84px;font-size:12px;color:#1f1f8a;font-weight:bold;"><span style="transform:scaleX(0.9188);transform-origin:0 0">Extrato Descrição</span></div><svg class="s" style="left:4296px;top:338px;" width="17" height="17" viewBox="0 0 17 17"><rect x="0.5" y="0.5" width="16" height="16" fill="#f3f4f6" stroke="#a6a6a6"/><path d="M4.5 7 L11.5 7 L8 11 Z" fill="#555"/></svg><div class="t g" style="left:4316px;top:341.84px;font-size:12px;color:#1f1f8a;font-weight:bold;"><span style="transform:scaleX(0.9420);transform-origin:0 0">Tipo de Documento</span></div><svg class="s" style="left:4427px;top:338px;" width="17" height="17" viewBox="0 0 17 17"><rect x="0.5" y="0.5" width="16" height="16" fill="#f3f4f6" stroke="#a6a6a6"/><path d="M4.5 7 L11.5 7 L8 11 Z" fill="#555"/></svg><div class="t g" style="left:4447px;top:341.84px;font-size:12px;color:#1f1f8a;font-weight:bold;"><span style="transform:scaleX(0.9356);transform-origin:0 0">Data da Baixa</span></div><svg class="s" style="left:4522px;top:338px;" width="17" height="17" viewBox="0 0 17 17"><rect x="0.5" y="0.5" width="16" height="16" fill="#f3f4f6" stroke="#a6a6a6"/><path d="M4.5 7 L11.5 7 L8 11 Z" fill="#555"/></svg><div class="t g" style="left:4542px;top:341.84px;font-size:12px;color:#1f1f8a;font-weight:bold;"><span style="transform:scaleX(0.9086);transform-origin:0 0">Sequencia Baixa</span></div><svg class="s" style="left:4632px;top:338px;" width="17" height="17" viewBox="0 0 17 17"><rect x="0.5" y="0.5" width="16" height="16" fill="#f3f4f6" stroke="#a6a6a6"/><path d="M4.5 7 L11.5 7 L8 11 Z" fill="#555"/></svg><div class="t g" style="left:4652px;top:341.84px;font-size:12px;color:#1f1f8a;font-weight:bold;"><span style="transform:scaleX(0.9134);transform-origin:0 0">Valor do Juros</span></div><svg class="s" style="left:4732px;top:338px;" width="17" height="17" viewBox="0 0 17 17"><rect x="0.5" y="0.5" width="16" height="16" fill="#f3f4f6" stroke="#a6a6a6"/><path d="M4.5 7 L11.5 7 L8 11 Z" fill="#555"/></svg><div class="t g" style="left:4752px;top:341.84px;font-size:12px;color:#1f1f8a;font-weight:bold;"><span style="transform:scaleX(0.9383);transform-origin:0 0">Valor do Desconto</span></div><svg class="s" style="left:4856px;top:338px;" width="17" height="17" viewBox="0 0 17 17"><rect x="0.5" y="0.5" width="16" height="16" fill="#f3f4f6" stroke="#a6a6a6"/><path d="M4.5 7 L11.5 7 L8 11 Z" fill="#555"/></svg><div class="t g" style="left:4876px;top:341.84px;font-size:12px;color:#1f1f8a;font-weight:bold;"><span style="transform:scaleX(0.9556);transform-origin:0 0">Valor Bruto</span></div><svg class="s" style="left:4942px;top:338px;" width="17" height="17" viewBox="0 0 17 17"><rect x="0.5" y="0.5" width="16" height="16" fill="#f3f4f6" stroke="#a6a6a6"/><path d="M4.5 7 L11.5 7 L8 11 Z" fill="#555"/></svg><div class="t g" style="left:43px;top:361.0px;font-size:13px;color:#000;width:272px;overflow:hidden;"><span style="transform:scaleX(1.0293);transform-origin:0 0">Conciliado</span></div><div class="t g" style="left:318px;top:361.0px;font-size:13px;color:#000;width:216px;overflow:hidden;"><span style="transform:scaleX(0.9344);transform-origin:0 0">237 - BANCO BRADESCO S/A</span></div><div class="t g" style="left:537px;top:361.0px;font-size:13px;color:#000;width:87px;overflow:hidden;"><span style="transform:scaleX(0.9536);transform-origin:0 0">3394</span></div><svg class="s" style="left:535px;top:357px;" width="6" height="6" viewBox="0 0 6 6"><path d="M0 0 L6 0 L0 6 Z" fill="#1f8a1f"/></svg><div class="t g" style="left:627px;top:361.0px;font-size:13px;color:#000;width:59px;overflow:hidden;"><span style="transform:scaleX(0.9536);transform-origin:0 0">012583</span></div><svg class="s" style="left:625px;top:357px;" width="6" height="6" viewBox="0 0 6 6"><path d="M0 0 L6 0 L0 6 Z" fill="#1f8a1f"/></svg><div class="t g" style="left:-448px;width:1200px;text-align:right;top:361.0px;font-size:13px;color:#000;"><span style="transform:scaleX(0.9536);transform-origin:100% 0">1</span></div><div class="t g" style="left:-402px;width:1200px;text-align:right;top:361.0px;font-size:13px;color:#000;"><span style="transform:scaleX(0.9536);transform-origin:100% 0">20</span></div><div class="t g" style="left:-318px;width:1200px;text-align:right;top:361.0px;font-size:13px;color:#000;"><span style="transform:scaleX(0.9536);transform-origin:100% 0">10201</span></div><div class="t g" style="left:887px;top:361.0px;font-size:13px;color:#000;width:300px;overflow:hidden;"><span style="transform:scaleX(0.9690);transform-origin:0 0">MULTA DE TRANSITO</span></div><div class="t g" style="left:55px;width:1200px;text-align:right;top:361.0px;font-size:13px;color:#000;"><span style="transform:scaleX(0.9536);transform-origin:100% 0">5903797</span></div><div class="t g" style="left:184px;width:1200px;text-align:right;top:361.0px;font-size:13px;color:#000;"><span style="transform:scaleX(0.9536);transform-origin:100% 0">1</span></div><div class="t g" style="left:1389px;top:361.0px;font-size:13px;color:#000;width:59px;overflow:hidden;"><span style="transform:scaleX(0.9536);transform-origin:0 0">01</span></div><svg class="s" style="left:1387px;top:357px;" width="6" height="6" viewBox="0 0 6 6"><path d="M0 0 L6 0 L0 6 Z" fill="#1f8a1f"/></svg><div class="t g" style="left:363px;width:1200px;text-align:right;top:361.0px;font-size:13px;color:#000;"><span style="transform:scaleX(0.9536);transform-origin:100% 0">22017</span></div><div class="t g" style="left:1568px;top:361.0px;font-size:13px;color:#000;width:303px;overflow:hidden;"><span style="transform:scaleX(0.9167);transform-origin:0 0">PREST. SERVIÇOS - PJ (ADM)</span></div><div class="t g" style="left:718px;width:1200px;text-align:right;top:361.0px;font-size:13px;color:#000;"><span style="transform:scaleX(0.9536);transform-origin:100% 0">422</span></div><div class="t g" style="left:808px;width:1200px;text-align:right;top:361.0px;font-size:13px;color:#000;"><span style="transform:scaleX(0.9536);transform-origin:100% 0">10</span></div><div class="t g" style="left:886px;width:1200px;text-align:right;top:361.0px;font-size:13px;color:#000;"><span style="transform:scaleX(0.9536);transform-origin:100% 0">5</span></div><div class="t g" style="left:2091px;top:361.0px;font-size:13px;color:#000;width:100px;overflow:hidden;"><span style="transform:scaleX(0.9865);transform-origin:0 0">11102006</span></div><svg class="s" style="left:2089px;top:357px;" width="6" height="6" viewBox="0 0 6 6"><path d="M0 0 L6 0 L0 6 Z" fill="#1f8a1f"/></svg><div class="t g" style="left:2194px;top:361.0px;font-size:13px;color:#000;width:179px;overflow:hidden;"><span style="transform:scaleX(0.9288);transform-origin:0 0">BANCO BRADESCO S/A</span></div><div class="t g" style="left:2376px;top:361.0px;font-size:13px;color:#000;"><span style="transform:scaleX(0.9360);transform-origin:0 0">SEU FORNECIMENTO BAIXA MATRIZ - NOTA FISCAL 5903797 - 01 BRADESCO - DIVERSOS</span></div><div class="t g" style="left:1983px;width:1200px;text-align:right;top:361.0px;font-size:13px;color:#000;"><span style="transform:scaleX(0.9536);transform-origin:100% 0">0</span></div><div class="t g" style="left:2097px;width:1200px;text-align:right;top:361.0px;font-size:13px;color:#000;"><span style="transform:scaleX(0.9597);transform-origin:100% 0">104,12</span></div><div class="t g" style="left:2179px;width:1200px;text-align:right;top:361.0px;font-size:13px;color:#000;"><span style="transform:scaleX(1.0433);transform-origin:100% 0">30/04/25</span></div><div class="t g" style="left:2294px;width:1200px;text-align:right;top:361.0px;font-size:13px;color:#000;"><span style="transform:scaleX(0.9536);transform-origin:100% 0">4</span></div><div class="t g" style="left:2385px;width:1200px;text-align:right;top:361.0px;font-size:13px;color:#000;"><span style="transform:scaleX(1.0433);transform-origin:100% 0">22/04/25</span></div><div class="t g" style="left:2506px;width:1200px;text-align:right;top:361.0px;font-size:13px;color:#000;"><span style="transform:scaleX(0.9536);transform-origin:100% 0">40</span></div><div class="t g" style="left:3989px;top:361.0px;font-size:13px;color:#000;width:324px;overflow:hidden;"><span style="transform:scaleX(0.9243);transform-origin:0 0">CARGA CARTAO TRANSPORTES 00062864</span></div><div class="t g" style="left:4316px;top:361.0px;font-size:13px;color:#000;width:128px;overflow:hidden;"><span style="transform:scaleX(0.8802);transform-origin:0 0">P</span></div><div class="t g" style="left:3337px;width:1200px;text-align:right;top:361.0px;font-size:13px;color:#000;"><span style="transform:scaleX(1.0433);transform-origin:100% 0">22/04/25</span></div><div class="t g" style="left:3447px;width:1200px;text-align:right;top:361.0px;font-size:13px;color:#000;"><span style="transform:scaleX(0.9536);transform-origin:100% 0">1</span></div><div class="t g" style="left:3547px;width:1200px;text-align:right;top:361.0px;font-size:13px;color:#000;"><span style="transform:scaleX(0.9536);transform-origin:100% 0">0</span></div><div class="t g" style="left:3671px;width:1200px;text-align:right;top:361.0px;font-size:13px;color:#000;"><span style="transform:scaleX(0.9611);transform-origin:100% 0">26,04</span></div><div class="t g" style="left:3757px;width:1200px;text-align:right;top:361.0px;font-size:13px;color:#000;"><span style="transform:scaleX(0.9597);transform-origin:100% 0">130,16</span></div><div class="t g" style="left:43px;top:381.0px;font-size:13px;color:#000;width:272px;overflow:hidden;"><span style="transform:scaleX(1.0293);transform-origin:0 0">Conciliado</span></div><div class="t g" style="left:318px;top:381.0px;font-size:13px;color:#000;width:216px;overflow:hidden;"><span style="transform:scaleX(0.9344);transform-origin:0 0">237 - BANCO BRADESCO S/A</span></div><div class="t g" style="left:537px;top:381.0px;font-size:13px;color:#000;width:87px;overflow:hidden;"><span style="transform:scaleX(0.9536);transform-origin:0 0">3394</span></div><svg class="s" style="left:535px;top:377px;" width="6" height="6" viewBox="0 0 6 6"><path d="M0 0 L6 0 L0 6 Z" fill="#1f8a1f"/></svg><div class="t g" style="left:627px;top:381.0px;font-size:13px;color:#000;"><span style="transform:scaleX(0.9536);transform-origin:0 0">012583</span></div><svg class="s" style="left:625px;top:377px;" width="6" height="6" viewBox="0 0 6 6"><path d="M0 0 L6 0 L0 6 Z" fill="#1f8a1f"/></svg><div class="t g" style="left:2179px;width:1200px;text-align:right;top:381.0px;font-size:13px;color:#000;"><span style="transform:scaleX(1.0433);transform-origin:100% 0">02/05/25</span></div><div class="t g" style="left:2294px;width:1200px;text-align:right;top:381.0px;font-size:13px;color:#000;"><span style="transform:scaleX(0.9536);transform-origin:100% 0">1</span></div><div class="t g" style="left:2385px;width:1200px;text-align:right;top:381.0px;font-size:13px;color:#000;"><span style="transform:scaleX(1.0433);transform-origin:100% 0">30/04/25</span></div><div class="t g" style="left:2506px;width:1200px;text-align:right;top:381.0px;font-size:13px;color:#000;"><span style="transform:scaleX(0.9536);transform-origin:100% 0">1</span></div><div class="t g" style="left:2643px;width:1200px;text-align:right;top:381.0px;font-size:13px;color:#000;"><span style="transform:scaleX(0.9536);transform-origin:100% 0">0</span></div><div class="t g" style="left:2784px;width:1200px;text-align:right;top:381.0px;font-size:13px;color:#000;"><span style="transform:scaleX(0.9576);transform-origin:100% 0">265058,59</span></div><div class="t g" style="left:3989px;top:381.0px;font-size:13px;color:#000;"><span style="transform:scaleX(0.9259);transform-origin:0 0">TED-TRANSF ELET DISPON REMET.VALMET TISS</span></div><div class="t g" style="left:43px;top:401.0px;font-size:13px;color:#000;width:272px;overflow:hidden;"><span style="transform:scaleX(1.0293);transform-origin:0 0">Conciliado</span></div><div class="t g" style="left:318px;top:401.0px;font-size:13px;color:#000;width:216px;overflow:hidden;"><span style="transform:scaleX(0.9344);transform-origin:0 0">237 - BANCO BRADESCO S/A</span></div><div class="t g" style="left:537px;top:401.0px;font-size:13px;color:#000;width:87px;overflow:hidden;"><span style="transform:scaleX(0.9536);transform-origin:0 0">3394</span></div><svg class="s" style="left:535px;top:397px;" width="6" height="6" viewBox="0 0 6 6"><path d="M0 0 L6 0 L0 6 Z" fill="#1f8a1f"/></svg><div class="t g" style="left:627px;top:401.0px;font-size:13px;color:#000;"><span style="transform:scaleX(0.9536);transform-origin:0 0">012583</span></div><svg class="s" style="left:625px;top:397px;" width="6" height="6" viewBox="0 0 6 6"><path d="M0 0 L6 0 L0 6 Z" fill="#1f8a1f"/></svg><div class="t g" style="left:2179px;width:1200px;text-align:right;top:401.0px;font-size:13px;color:#000;"><span style="transform:scaleX(1.0433);transform-origin:100% 0">02/05/25</span></div><div class="t g" style="left:2294px;width:1200px;text-align:right;top:401.0px;font-size:13px;color:#000;"><span style="transform:scaleX(0.9536);transform-origin:100% 0">1</span></div><div class="t g" style="left:2385px;width:1200px;text-align:right;top:401.0px;font-size:13px;color:#000;"><span style="transform:scaleX(1.0433);transform-origin:100% 0">30/04/25</span></div><div class="t g" style="left:2506px;width:1200px;text-align:right;top:401.0px;font-size:13px;color:#000;"><span style="transform:scaleX(0.9536);transform-origin:100% 0">2</span></div><div class="t g" style="left:2643px;width:1200px;text-align:right;top:401.0px;font-size:13px;color:#000;"><span style="transform:scaleX(0.9536);transform-origin:100% 0">0</span></div><div class="t g" style="left:2784px;width:1200px;text-align:right;top:401.0px;font-size:13px;color:#000;"><span style="transform:scaleX(0.9576);transform-origin:100% 0">249224,53</span></div><div class="t g" style="left:3989px;top:401.0px;font-size:13px;color:#000;"><span style="transform:scaleX(0.9259);transform-origin:0 0">TED-TRANSF ELET DISPON REMET.VALMET TISS</span></div><div class="t g" style="left:43px;top:421.0px;font-size:13px;color:#000;width:272px;overflow:hidden;"><span style="transform:scaleX(1.0293);transform-origin:0 0">Conciliado</span></div><div class="t g" style="left:318px;top:421.0px;font-size:13px;color:#000;width:216px;overflow:hidden;"><span style="transform:scaleX(0.9344);transform-origin:0 0">237 - BANCO BRADESCO S/A</span></div><div class="t g" style="left:537px;top:421.0px;font-size:13px;color:#000;width:87px;overflow:hidden;"><span style="transform:scaleX(0.9536);transform-origin:0 0">3394</span></div><svg class="s" style="left:535px;top:417px;" width="6" height="6" viewBox="0 0 6 6"><path d="M0 0 L6 0 L0 6 Z" fill="#1f8a1f"/></svg><div class="t g" style="left:627px;top:421.0px;font-size:13px;color:#000;"><span style="transform:scaleX(0.9536);transform-origin:0 0">012583</span></div><svg class="s" style="left:625px;top:417px;" width="6" height="6" viewBox="0 0 6 6"><path d="M0 0 L6 0 L0 6 Z" fill="#1f8a1f"/></svg><div class="t g" style="left:2179px;width:1200px;text-align:right;top:421.0px;font-size:13px;color:#000;"><span style="transform:scaleX(1.0433);transform-origin:100% 0">02/05/25</span></div><div class="t g" style="left:2294px;width:1200px;text-align:right;top:421.0px;font-size:13px;color:#000;"><span style="transform:scaleX(0.9536);transform-origin:100% 0">1</span></div><div class="t g" style="left:2385px;width:1200px;text-align:right;top:421.0px;font-size:13px;color:#000;"><span style="transform:scaleX(1.0433);transform-origin:100% 0">30/04/25</span></div><div class="t g" style="left:2506px;width:1200px;text-align:right;top:421.0px;font-size:13px;color:#000;"><span style="transform:scaleX(0.9536);transform-origin:100% 0">3</span></div><div class="t g" style="left:2643px;width:1200px;text-align:right;top:421.0px;font-size:13px;color:#000;"><span style="transform:scaleX(0.9536);transform-origin:100% 0">0</span></div><div class="t g" style="left:2784px;width:1200px;text-align:right;top:421.0px;font-size:13px;color:#000;"><span style="transform:scaleX(0.9581);transform-origin:100% 0">65717,82</span></div><div class="t g" style="left:3989px;top:421.0px;font-size:13px;color:#000;"><span style="transform:scaleX(0.9326);transform-origin:0 0">TED-TRANSF ELET DISPON REMET.ODATA BRASI</span></div><div class="t g" style="left:43px;top:441.0px;font-size:13px;color:#000;width:272px;overflow:hidden;"><span style="transform:scaleX(1.0293);transform-origin:0 0">Conciliado</span></div><div class="t g" style="left:318px;top:441.0px;font-size:13px;color:#000;width:216px;overflow:hidden;"><span style="transform:scaleX(0.9344);transform-origin:0 0">237 - BANCO BRADESCO S/A</span></div><div class="t g" style="left:537px;top:441.0px;font-size:13px;color:#000;width:87px;overflow:hidden;"><span style="transform:scaleX(0.9536);transform-origin:0 0">3394</span></div><svg class="s" style="left:535px;top:437px;" width="6" height="6" viewBox="0 0 6 6"><path d="M0 0 L6 0 L0 6 Z" fill="#1f8a1f"/></svg><div class="t g" style="left:627px;top:441.0px;font-size:13px;color:#000;width:59px;overflow:hidden;"><span style="transform:scaleX(0.9536);transform-origin:0 0">012583</span></div><svg class="s" style="left:625px;top:437px;" width="6" height="6" viewBox="0 0 6 6"><path d="M0 0 L6 0 L0 6 Z" fill="#1f8a1f"/></svg><div class="t g" style="left:-448px;width:1200px;text-align:right;top:441.0px;font-size:13px;color:#000;"><span style="transform:scaleX(0.9536);transform-origin:100% 0">1</span></div><div class="t g" style="left:-402px;width:1200px;text-align:right;top:441.0px;font-size:13px;color:#000;"><span style="transform:scaleX(0.9536);transform-origin:100% 0">5</span></div><div class="t g" style="left:-318px;width:1200px;text-align:right;top:441.0px;font-size:13px;color:#000;"><span style="transform:scaleX(0.9442);transform-origin:100% 0">4,68614E+13</span></div><div class="t g" style="left:887px;top:441.0px;font-size:13px;color:#000;width:300px;overflow:hidden;"><span style="transform:scaleX(0.9383);transform-origin:0 0">VALMET TISSUE CONVERTING LTDA</span></div><div class="t g" style="left:55px;width:1200px;text-align:right;top:441.0px;font-size:13px;color:#000;"><span style="transform:scaleX(0.9798);transform-origin:100% 0">21102</span></div><div class="t g" style="left:184px;width:1200px;text-align:right;top:441.0px;font-size:13px;color:#000;"><span style="transform:scaleX(0.9536);transform-origin:100% 0">1</span></div><div class="t g" style="left:1389px;top:441.0px;font-size:13px;color:#000;width:59px;overflow:hidden;"><span style="transform:scaleX(0.9536);transform-origin:0 0">01</span></div><svg class="s" style="left:1387px;top:437px;" width="6" height="6" viewBox="0 0 6 6"><path d="M0 0 L6 0 L0 6 Z" fill="#1f8a1f"/></svg><div class="t g" style="left:363px;width:1200px;text-align:right;top:441.0px;font-size:13px;color:#000;"><span style="transform:scaleX(0.9798);transform-origin:100% 0">11001</span></div><div class="t g" style="left:1568px;top:441.0px;font-size:13px;color:#000;width:303px;overflow:hidden;"><span style="transform:scaleX(0.9363);transform-origin:0 0">CARTEIRA NACIONAL</span></div><div class="t g" style="left:718px;width:1200px;text-align:right;top:441.0px;font-size:13px;color:#000;"><span style="transform:scaleX(0.9536);transform-origin:100% 0">230</span></div><div class="t g" style="left:808px;width:1200px;text-align:right;top:441.0px;font-size:13px;color:#000;"><span style="transform:scaleX(0.9536);transform-origin:100% 0">1</span></div><div class="t g" style="left:886px;width:1200px;text-align:right;top:441.0px;font-size:13px;color:#000;"><span style="transform:scaleX(0.9536);transform-origin:100% 0">1</span></div><div class="t g" style="left:2091px;top:441.0px;font-size:13px;color:#000;width:100px;overflow:hidden;"><span style="transform:scaleX(0.9865);transform-origin:0 0">11102006</span></div><svg class="s" style="left:2089px;top:437px;" width="6" height="6" viewBox="0 0 6 6"><path d="M0 0 L6 0 L0 6 Z" fill="#1f8a1f"/></svg><div class="t g" style="left:2194px;top:441.0px;font-size:13px;color:#000;width:179px;overflow:hidden;"><span style="transform:scaleX(0.9288);transform-origin:0 0">BANCO BRADESCO S/A</span></div><div class="t g" style="left:2376px;top:441.0px;font-size:13px;color:#000;"><span style="transform:scaleX(0.9464);transform-origin:0 0">EMISSÃO DE TITULO BAIXA MATRIZ - DUPLICATA 21102 - 01 BAIXA DE CONTAS A RECEBER</span></div><div class="t g" style="left:1983px;width:1200px;text-align:right;top:441.0px;font-size:13px;color:#000;"><span style="transform:scaleX(0.9576);transform-origin:100% 0">265058,59</span></div><div class="t g" style="left:2097px;width:1200px;text-align:right;top:441.0px;font-size:13px;color:#000;"><span style="transform:scaleX(0.9536);transform-origin:100% 0">0</span></div><div class="t g" style="left:2179px;width:1200px;text-align:right;top:441.0px;font-size:13px;color:#000;"><span style="transform:scaleX(1.0433);transform-origin:100% 0">02/05/25</span></div><div class="t g" style="left:2294px;width:1200px;text-align:right;top:441.0px;font-size:13px;color:#000;"><span style="transform:scaleX(0.9536);transform-origin:100% 0">1</span></div><div class="t g" style="left:2385px;width:1200px;text-align:right;top:441.0px;font-size:13px;color:#000;"><span style="transform:scaleX(1.0433);transform-origin:100% 0">30/04/25</span></div><div class="t g" style="left:2506px;width:1200px;text-align:right;top:441.0px;font-size:13px;color:#000;"><span style="transform:scaleX(0.9536);transform-origin:100% 0">3</span></div><div class="t g" style="left:3989px;top:441.0px;font-size:13px;color:#000;width:324px;overflow:hidden;"><span style="transform:scaleX(0.9326);transform-origin:0 0">TED-TRANSF ELET DISPON REMET.ODATA BRASI</span></div><div class="t g" style="left:4316px;top:441.0px;font-size:13px;color:#000;width:128px;overflow:hidden;"><span style="transform:scaleX(0.8545);transform-origin:0 0">R</span></div><div class="t g" style="left:3337px;width:1200px;text-align:right;top:441.0px;font-size:13px;color:#000;"><span style="transform:scaleX(1.0433);transform-origin:100% 0">30/04/25</span></div><div class="t g" style="left:3447px;width:1200px;text-align:right;top:441.0px;font-size:13px;color:#000;"><span style="transform:scaleX(0.9536);transform-origin:100% 0">1</span></div><div class="t g" style="left:3547px;width:1200px;text-align:right;top:441.0px;font-size:13px;color:#000;"><span style="transform:scaleX(0.9536);transform-origin:100% 0">0</span></div><div class="t g" style="left:3671px;width:1200px;text-align:right;top:441.0px;font-size:13px;color:#000;"><span style="transform:scaleX(0.9536);transform-origin:100% 0">0</span></div><div class="t g" style="left:3757px;width:1200px;text-align:right;top:441.0px;font-size:13px;color:#000;"><span style="transform:scaleX(0.9576);transform-origin:100% 0">265058,59</span></div><div class="t g" style="left:43px;top:461.0px;font-size:13px;color:#000;width:272px;overflow:hidden;"><span style="transform:scaleX(1.0293);transform-origin:0 0">Conciliado</span></div><div class="t g" style="left:318px;top:461.0px;font-size:13px;color:#000;width:216px;overflow:hidden;"><span style="transform:scaleX(0.9344);transform-origin:0 0">237 - BANCO BRADESCO S/A</span></div><div class="t g" style="left:537px;top:461.0px;font-size:13px;color:#000;width:87px;overflow:hidden;"><span style="transform:scaleX(0.9536);transform-origin:0 0">3394</span></div><svg class="s" style="left:535px;top:457px;" width="6" height="6" viewBox="0 0 6 6"><path d="M0 0 L6 0 L0 6 Z" fill="#1f8a1f"/></svg><div class="t g" style="left:627px;top:461.0px;font-size:13px;color:#000;width:59px;overflow:hidden;"><span style="transform:scaleX(0.9536);transform-origin:0 0">012583</span></div><svg class="s" style="left:625px;top:457px;" width="6" height="6" viewBox="0 0 6 6"><path d="M0 0 L6 0 L0 6 Z" fill="#1f8a1f"/></svg><div class="t g" style="left:-448px;width:1200px;text-align:right;top:461.0px;font-size:13px;color:#000;"><span style="transform:scaleX(0.9536);transform-origin:100% 0">1</span></div><div class="t g" style="left:-402px;width:1200px;text-align:right;top:461.0px;font-size:13px;color:#000;"><span style="transform:scaleX(0.9536);transform-origin:100% 0">5</span></div><div class="t g" style="left:-318px;width:1200px;text-align:right;top:461.0px;font-size:13px;color:#000;"><span style="transform:scaleX(0.9442);transform-origin:100% 0">4,68614E+13</span></div><div class="t g" style="left:887px;top:461.0px;font-size:13px;color:#000;width:300px;overflow:hidden;"><span style="transform:scaleX(0.9383);transform-origin:0 0">VALMET TISSUE CONVERTING LTDA</span></div><div class="t g" style="left:55px;width:1200px;text-align:right;top:461.0px;font-size:13px;color:#000;"><span style="transform:scaleX(0.9798);transform-origin:100% 0">21103</span></div><div class="t g" style="left:184px;width:1200px;text-align:right;top:461.0px;font-size:13px;color:#000;"><span style="transform:scaleX(0.9536);transform-origin:100% 0">1</span></div><div class="t g" style="left:1389px;top:461.0px;font-size:13px;color:#000;width:59px;overflow:hidden;"><span style="transform:scaleX(0.9536);transform-origin:0 0">01</span></div><svg class="s" style="left:1387px;top:457px;" width="6" height="6" viewBox="0 0 6 6"><path d="M0 0 L6 0 L0 6 Z" fill="#1f8a1f"/></svg><div class="t g" style="left:363px;width:1200px;text-align:right;top:461.0px;font-size:13px;color:#000;"><span style="transform:scaleX(0.9798);transform-origin:100% 0">11001</span></div><div class="t g" style="left:1568px;top:461.0px;font-size:13px;color:#000;width:303px;overflow:hidden;"><span style="transform:scaleX(0.9363);transform-origin:0 0">CARTEIRA NACIONAL</span></div><div class="t g" style="left:718px;width:1200px;text-align:right;top:461.0px;font-size:13px;color:#000;"><span style="transform:scaleX(0.9536);transform-origin:100% 0">230</span></div><div class="t g" style="left:808px;width:1200px;text-align:right;top:461.0px;font-size:13px;color:#000;"><span style="transform:scaleX(0.9536);transform-origin:100% 0">2</span></div><div class="t g" style="left:886px;width:1200px;text-align:right;top:461.0px;font-size:13px;color:#000;"><span style="transform:scaleX(0.9536);transform-origin:100% 0">1</span></div><div class="t g" style="left:2091px;top:461.0px;font-size:13px;color:#000;width:100px;overflow:hidden;"><span style="transform:scaleX(0.9865);transform-origin:0 0">11102006</span></div><svg class="s" style="left:2089px;top:457px;" width="6" height="6" viewBox="0 0 6 6"><path d="M0 0 L6 0 L0 6 Z" fill="#1f8a1f"/></svg><div class="t g" style="left:2194px;top:461.0px;font-size:13px;color:#000;width:179px;overflow:hidden;"><span style="transform:scaleX(0.9288);transform-origin:0 0">BANCO BRADESCO S/A</span></div><div class="t g" style="left:2376px;top:461.0px;font-size:13px;color:#000;"><span style="transform:scaleX(0.9464);transform-origin:0 0">EMISSÃO DE TITULO BAIXA MATRIZ - DUPLICATA 21103 - 01 BAIXA DE CONTAS A RECEBER</span></div><div class="t g" style="left:1983px;width:1200px;text-align:right;top:461.0px;font-size:13px;color:#000;"><span style="transform:scaleX(0.9576);transform-origin:100% 0">249224,53</span></div><div class="t g" style="left:2097px;width:1200px;text-align:right;top:461.0px;font-size:13px;color:#000;"><span style="transform:scaleX(0.9536);transform-origin:100% 0">0</span></div><div class="t g" style="left:2179px;width:1200px;text-align:right;top:461.0px;font-size:13px;color:#000;"><span style="transform:scaleX(1.0433);transform-origin:100% 0">02/05/25</span></div><div class="t g" style="left:2294px;width:1200px;text-align:right;top:461.0px;font-size:13px;color:#000;"><span style="transform:scaleX(0.9536);transform-origin:100% 0">1</span></div><div class="t g" style="left:2385px;width:1200px;text-align:right;top:461.0px;font-size:13px;color:#000;"><span style="transform:scaleX(1.0433);transform-origin:100% 0">30/04/25</span></div><div class="t g" style="left:2506px;width:1200px;text-align:right;top:461.0px;font-size:13px;color:#000;"><span style="transform:scaleX(0.9536);transform-origin:100% 0">3</span></div><div class="t g" style="left:3989px;top:461.0px;font-size:13px;color:#000;width:324px;overflow:hidden;"><span style="transform:scaleX(0.9326);transform-origin:0 0">TED-TRANSF ELET DISPON REMET.ODATA BRASI</span></div><div class="t g" style="left:4316px;top:461.0px;font-size:13px;color:#000;width:128px;overflow:hidden;"><span style="transform:scaleX(0.8545);transform-origin:0 0">R</span></div><div class="t g" style="left:3337px;width:1200px;text-align:right;top:461.0px;font-size:13px;color:#000;"><span style="transform:scaleX(1.0433);transform-origin:100% 0">30/04/25</span></div><div class="t g" style="left:3447px;width:1200px;text-align:right;top:461.0px;font-size:13px;color:#000;"><span style="transform:scaleX(0.9536);transform-origin:100% 0">1</span></div><div class="t g" style="left:3547px;width:1200px;text-align:right;top:461.0px;font-size:13px;color:#000;"><span style="transform:scaleX(0.9536);transform-origin:100% 0">0</span></div><div class="t g" style="left:3671px;width:1200px;text-align:right;top:461.0px;font-size:13px;color:#000;"><span style="transform:scaleX(0.9536);transform-origin:100% 0">0</span></div><div class="t g" style="left:3757px;width:1200px;text-align:right;top:461.0px;font-size:13px;color:#000;"><span style="transform:scaleX(0.9576);transform-origin:100% 0">249224,53</span></div><div class="t g" style="left:43px;top:481.0px;font-size:13px;color:#000;width:272px;overflow:hidden;"><span style="transform:scaleX(1.0293);transform-origin:0 0">Conciliado</span></div><div class="t g" style="left:318px;top:481.0px;font-size:13px;color:#000;width:216px;overflow:hidden;"><span style="transform:scaleX(0.9344);transform-origin:0 0">237 - BANCO BRADESCO S/A</span></div><div class="t g" style="left:537px;top:481.0px;font-size:13px;color:#000;width:87px;overflow:hidden;"><span style="transform:scaleX(0.9536);transform-origin:0 0">3394</span></div><svg class="s" style="left:535px;top:477px;" width="6" height="6" viewBox="0 0 6 6"><path d="M0 0 L6 0 L0 6 Z" fill="#1f8a1f"/></svg><div class="t g" style="left:627px;top:481.0px;font-size:13px;color:#000;width:59px;overflow:hidden;"><span style="transform:scaleX(0.9536);transform-origin:0 0">012583</span></div><svg class="s" style="left:625px;top:477px;" width="6" height="6" viewBox="0 0 6 6"><path d="M0 0 L6 0 L0 6 Z" fill="#1f8a1f"/></svg><div class="t g" style="left:-448px;width:1200px;text-align:right;top:481.0px;font-size:13px;color:#000;"><span style="transform:scaleX(0.9536);transform-origin:100% 0">1</span></div><div class="t g" style="left:-402px;width:1200px;text-align:right;top:481.0px;font-size:13px;color:#000;"><span style="transform:scaleX(0.9536);transform-origin:100% 0">5</span></div><div class="t g" style="left:-318px;width:1200px;text-align:right;top:481.0px;font-size:13px;color:#000;"><span style="transform:scaleX(0.9442);transform-origin:100% 0">2,81657E+13</span></div><div class="t g" style="left:887px;top:481.0px;font-size:13px;color:#000;width:300px;overflow:hidden;"><span style="transform:scaleX(0.9595);transform-origin:0 0">ODATA BRASIL LTDA</span></div><div class="t g" style="left:55px;width:1200px;text-align:right;top:481.0px;font-size:13px;color:#000;"><span style="transform:scaleX(0.9536);transform-origin:100% 0">317</span></div><div class="t g" style="left:1260px;top:481.0px;font-size:13px;color:#000;width:48px;overflow:hidden;"><span style="transform:scaleX(0.9854);transform-origin:0 0">FAT</span></div><div class="t g" style="left:184px;width:1200px;text-align:right;top:481.0px;font-size:13px;color:#000;"><span style="transform:scaleX(0.9536);transform-origin:100% 0">1</span></div><div class="t g" style="left:1389px;top:481.0px;font-size:13px;color:#000;width:59px;overflow:hidden;"><span style="transform:scaleX(0.9536);transform-origin:0 0">01</span></div><svg class="s" style="left:1387px;top:477px;" width="6" height="6" viewBox="0 0 6 6"><path d="M0 0 L6 0 L0 6 Z" fill="#1f8a1f"/></svg><div class="t g" style="left:363px;width:1200px;text-align:right;top:481.0px;font-size:13px;color:#000;"><span style="transform:scaleX(0.9798);transform-origin:100% 0">11001</span></div><div class="t g" style="left:1568px;top:481.0px;font-size:13px;color:#000;width:303px;overflow:hidden;"><span style="transform:scaleX(0.9363);transform-origin:0 0">CARTEIRA NACIONAL</span></div><div class="t g" style="left:718px;width:1200px;text-align:right;top:481.0px;font-size:13px;color:#000;"><span style="transform:scaleX(0.9536);transform-origin:100% 0">230</span></div><div class="t g" style="left:808px;width:1200px;text-align:right;top:481.0px;font-size:13px;color:#000;"><span style="transform:scaleX(0.9536);transform-origin:100% 0">3</span></div><div class="t g" style="left:886px;width:1200px;text-align:right;top:481.0px;font-size:13px;color:#000;"><span style="transform:scaleX(0.9536);transform-origin:100% 0">1</span></div><div class="t g" style="left:2091px;top:481.0px;font-size:13px;color:#000;width:100px;overflow:hidden;"><span style="transform:scaleX(0.9865);transform-origin:0 0">11102006</span></div><svg class="s" style="left:2089px;top:477px;" width="6" height="6" viewBox="0 0 6 6"><path d="M0 0 L6 0 L0 6 Z" fill="#1f8a1f"/></svg><div class="t g" style="left:2194px;top:481.0px;font-size:13px;color:#000;width:179px;overflow:hidden;"><span style="transform:scaleX(0.9288);transform-origin:0 0">BANCO BRADESCO S/A</span></div><div class="t g" style="left:2376px;top:481.0px;font-size:13px;color:#000;"><span style="transform:scaleX(0.9446);transform-origin:0 0">EMISSÃO DE TITULO BAIXA MATRIZ - DUPLICATA 317 - 01 BAIXA DE CONTAS A RECEBER</span></div><div class="t g" style="left:1983px;width:1200px;text-align:right;top:481.0px;font-size:13px;color:#000;"><span style="transform:scaleX(0.9581);transform-origin:100% 0">65717,82</span></div><div class="t g" style="left:2097px;width:1200px;text-align:right;top:481.0px;font-size:13px;color:#000;"><span style="transform:scaleX(0.9536);transform-origin:100% 0">0</span></div><div class="t g" style="left:2179px;width:1200px;text-align:right;top:481.0px;font-size:13px;color:#000;"><span style="transform:scaleX(1.0433);transform-origin:100% 0">02/05/25</span></div><div class="t g" style="left:2294px;width:1200px;text-align:right;top:481.0px;font-size:13px;color:#000;"><span style="transform:scaleX(0.9536);transform-origin:100% 0">1</span></div><div class="t g" style="left:2385px;width:1200px;text-align:right;top:481.0px;font-size:13px;color:#000;"><span style="transform:scaleX(1.0433);transform-origin:100% 0">30/04/25</span></div><div class="t g" style="left:2506px;width:1200px;text-align:right;top:481.0px;font-size:13px;color:#000;"><span style="transform:scaleX(0.9536);transform-origin:100% 0">3</span></div><div class="t g" style="left:3989px;top:481.0px;font-size:13px;color:#000;width:324px;overflow:hidden;"><span style="transform:scaleX(0.9326);transform-origin:0 0">TED-TRANSF ELET DISPON REMET.ODATA BRASI</span></div><div class="t g" style="left:4316px;top:481.0px;font-size:13px;color:#000;width:128px;overflow:hidden;"><span style="transform:scaleX(0.8545);transform-origin:0 0">R</span></div><div class="t g" style="left:3337px;width:1200px;text-align:right;top:481.0px;font-size:13px;color:#000;"><span style="transform:scaleX(1.0433);transform-origin:100% 0">30/04/25</span></div><div class="t g" style="left:3447px;width:1200px;text-align:right;top:481.0px;font-size:13px;color:#000;"><span style="transform:scaleX(0.9536);transform-origin:100% 0">1</span></div><div class="t g" style="left:3547px;width:1200px;text-align:right;top:481.0px;font-size:13px;color:#000;"><span style="transform:scaleX(0.9536);transform-origin:100% 0">0</span></div><div class="t g" style="left:3671px;width:1200px;text-align:right;top:481.0px;font-size:13px;color:#000;"><span style="transform:scaleX(0.9536);transform-origin:100% 0">0</span></div><div class="t g" style="left:3757px;width:1200px;text-align:right;top:481.0px;font-size:13px;color:#000;"><span style="transform:scaleX(0.9581);transform-origin:100% 0">65717,82</span></div><div class="t g" style="left:43px;top:501.0px;font-size:13px;color:#000;width:272px;overflow:hidden;"><span style="transform:scaleX(1.0234);transform-origin:0 0">Não Conciliado</span></div><div class="t g" style="left:318px;top:501.0px;font-size:13px;color:#000;width:216px;overflow:hidden;"><span style="transform:scaleX(0.9344);transform-origin:0 0">237 - BANCO BRADESCO S/A</span></div><div class="t g" style="left:537px;top:501.0px;font-size:13px;color:#000;width:87px;overflow:hidden;"><span style="transform:scaleX(0.9536);transform-origin:0 0">0094</span></div><svg class="s" style="left:535px;top:497px;" width="6" height="6" viewBox="0 0 6 6"><path d="M0 0 L6 0 L0 6 Z" fill="#1f8a1f"/></svg><div class="t g" style="left:627px;top:501.0px;font-size:13px;color:#000;width:59px;overflow:hidden;"><span style="transform:scaleX(0.9536);transform-origin:0 0">012583</span></div><svg class="s" style="left:625px;top:497px;" width="6" height="6" viewBox="0 0 6 6"><path d="M0 0 L6 0 L0 6 Z" fill="#1f8a1f"/></svg><div class="t g" style="left:-448px;width:1200px;text-align:right;top:501.0px;font-size:13px;color:#000;"><span style="transform:scaleX(0.9536);transform-origin:100% 0">1</span></div><div class="t g" style="left:-402px;width:1200px;text-align:right;top:501.0px;font-size:13px;color:#000;"><span style="transform:scaleX(0.9536);transform-origin:100% 0">26</span></div><div class="t g" style="left:-318px;width:1200px;text-align:right;top:501.0px;font-size:13px;color:#000;"><span style="transform:scaleX(0.9560);transform-origin:100% 0">5,80842E+11</span></div><div class="t g" style="left:887px;top:501.0px;font-size:13px;color:#000;width:300px;overflow:hidden;"><span style="transform:scaleX(0.9283);transform-origin:0 0">IMPERIO TRANSPORTES E NEGOCIOS LTDA ME</span></div><div class="t g" style="left:55px;width:1200px;text-align:right;top:501.0px;font-size:13px;color:#000;"><span style="transform:scaleX(0.9536);transform-origin:100% 0">20525</span></div><div class="t g" style="left:184px;width:1200px;text-align:right;top:501.0px;font-size:13px;color:#000;"><span style="transform:scaleX(0.9536);transform-origin:100% 0">1</span></div><div class="t g" style="left:1389px;top:501.0px;font-size:13px;color:#000;width:59px;overflow:hidden;"><span style="transform:scaleX(0.9536);transform-origin:0 0">01</span></div><svg class="s" style="left:1387px;top:497px;" width="6" height="6" viewBox="0 0 6 6"><path d="M0 0 L6 0 L0 6 Z" fill="#1f8a1f"/></svg><div class="t g" style="left:363px;width:1200px;text-align:right;top:501.0px;font-size:13px;color:#000;"><span style="transform:scaleX(0.9536);transform-origin:100% 0">26023</span></div><div class="t g" style="left:1568px;top:501.0px;font-size:13px;color:#000;width:303px;overflow:hidden;"><span style="transform:scaleX(0.9515);transform-origin:0 0">ADIANTAMENTO - FORNECEDOR</span></div><div class="t g" style="left:718px;width:1200px;text-align:right;top:501.0px;font-size:13px;color:#000;"><span style="transform:scaleX(0.9536);transform-origin:100% 0">302</span></div><div class="t g" style="left:808px;width:1200px;text-align:right;top:501.0px;font-size:13px;color:#000;"><span style="transform:scaleX(0.9536);transform-origin:100% 0">7</span></div><div class="t g" style="left:886px;width:1200px;text-align:right;top:501.0px;font-size:13px;color:#000;"><span style="transform:scaleX(0.9536);transform-origin:100% 0">2</span></div><div class="t g" style="left:2091px;top:501.0px;font-size:13px;color:#000;width:100px;overflow:hidden;"><span style="transform:scaleX(0.9865);transform-origin:0 0">11102006</span></div><svg class="s" style="left:2089px;top:497px;" width="6" height="6" viewBox="0 0 6 6"><path d="M0 0 L6 0 L0 6 Z" fill="#1f8a1f"/></svg><div class="t g" style="left:2194px;top:501.0px;font-size:13px;color:#000;width:179px;overflow:hidden;"><span style="transform:scaleX(0.9288);transform-origin:0 0">BANCO BRADESCO S/A</span></div><div class="t g" style="left:2376px;top:501.0px;font-size:13px;color:#000;"><span style="transform:scaleX(0.9949);transform-origin:0 0">ADIANTAMENTO</span></div><div class="t g" style="left:1983px;width:1200px;text-align:right;top:501.0px;font-size:13px;color:#000;"><span style="transform:scaleX(0.9536);transform-origin:100% 0">0</span></div><div class="t g" style="left:2097px;width:1200px;text-align:right;top:501.0px;font-size:13px;color:#000;"><span style="transform:scaleX(0.9536);transform-origin:100% 0">71500</span></div><div class="t g" style="left:43px;top:521.0px;font-size:13px;color:#000;width:272px;overflow:hidden;"><span style="transform:scaleX(1.0234);transform-origin:0 0">Não Conciliado</span></div><div class="t g" style="left:318px;top:521.0px;font-size:13px;color:#000;width:216px;overflow:hidden;"><span style="transform:scaleX(0.9344);transform-origin:0 0">237 - BANCO BRADESCO S/A</span></div><div class="t g" style="left:537px;top:521.0px;font-size:13px;color:#000;width:87px;overflow:hidden;"><span style="transform:scaleX(0.9536);transform-origin:0 0">0094</span></div><svg class="s" style="left:535px;top:517px;" width="6" height="6" viewBox="0 0 6 6"><path d="M0 0 L6 0 L0 6 Z" fill="#1f8a1f"/></svg><div class="t g" style="left:627px;top:521.0px;font-size:13px;color:#000;width:59px;overflow:hidden;"><span style="transform:scaleX(0.9536);transform-origin:0 0">012583</span></div><svg class="s" style="left:625px;top:517px;" width="6" height="6" viewBox="0 0 6 6"><path d="M0 0 L6 0 L0 6 Z" fill="#1f8a1f"/></svg><div class="t g" style="left:-448px;width:1200px;text-align:right;top:521.0px;font-size:13px;color:#000;"><span style="transform:scaleX(0.9536);transform-origin:100% 0">1</span></div><div class="t g" style="left:-402px;width:1200px;text-align:right;top:521.0px;font-size:13px;color:#000;"><span style="transform:scaleX(0.9536);transform-origin:100% 0">26</span></div><div class="t g" style="left:-318px;width:1200px;text-align:right;top:521.0px;font-size:13px;color:#000;"><span style="transform:scaleX(0.9560);transform-origin:100% 0">5,80842E+11</span></div><div class="t g" style="left:887px;top:521.0px;font-size:13px;color:#000;width:300px;overflow:hidden;"><span style="transform:scaleX(0.9283);transform-origin:0 0">IMPERIO TRANSPORTES E NEGOCIOS LTDA ME</span></div><div class="t g" style="left:55px;width:1200px;text-align:right;top:521.0px;font-size:13px;color:#000;"><span style="transform:scaleX(0.9536);transform-origin:100% 0">2052025</span></div><div class="t g" style="left:184px;width:1200px;text-align:right;top:521.0px;font-size:13px;color:#000;"><span style="transform:scaleX(0.9536);transform-origin:100% 0">1</span></div><div class="t g" style="left:1389px;top:521.0px;font-size:13px;color:#000;width:59px;overflow:hidden;"><span style="transform:scaleX(0.9536);transform-origin:0 0">01</span></div><svg class="s" style="left:1387px;top:517px;" width="6" height="6" viewBox="0 0 6 6"><path d="M0 0 L6 0 L0 6 Z" fill="#1f8a1f"/></svg><div class="t g" style="left:363px;width:1200px;text-align:right;top:521.0px;font-size:13px;color:#000;"><span style="transform:scaleX(0.9536);transform-origin:100% 0">26023</span></div><div class="t g" style="left:1568px;top:521.0px;font-size:13px;color:#000;width:303px;overflow:hidden;"><span style="transform:scaleX(0.9515);transform-origin:0 0">ADIANTAMENTO - FORNECEDOR</span></div><div class="t g" style="left:718px;width:1200px;text-align:right;top:521.0px;font-size:13px;color:#000;"><span style="transform:scaleX(0.9536);transform-origin:100% 0">302</span></div><div class="t g" style="left:808px;width:1200px;text-align:right;top:521.0px;font-size:13px;color:#000;"><span style="transform:scaleX(0.9536);transform-origin:100% 0">5</span></div><div class="t g" style="left:886px;width:1200px;text-align:right;top:521.0px;font-size:13px;color:#000;"><span style="transform:scaleX(0.9536);transform-origin:100% 0">2</span></div><div class="t g" style="left:2091px;top:521.0px;font-size:13px;color:#000;width:100px;overflow:hidden;"><span style="transform:scaleX(0.9865);transform-origin:0 0">11102006</span></div><svg class="s" style="left:2089px;top:517px;" width="6" height="6" viewBox="0 0 6 6"><path d="M0 0 L6 0 L0 6 Z" fill="#1f8a1f"/></svg><div class="t g" style="left:2194px;top:521.0px;font-size:13px;color:#000;width:179px;overflow:hidden;"><span style="transform:scaleX(0.9288);transform-origin:0 0">BANCO BRADESCO S/A</span></div><div class="t g" style="left:2376px;top:521.0px;font-size:13px;color:#000;"><span style="transform:scaleX(0.9761);transform-origin:0 0">ADIANTAMENTO SEMANAL IMPERIO</span></div><div class="t g" style="left:1983px;width:1200px;text-align:right;top:521.0px;font-size:13px;color:#000;"><span style="transform:scaleX(0.9536);transform-origin:100% 0">0</span></div><div class="t g" style="left:2097px;width:1200px;text-align:right;top:521.0px;font-size:13px;color:#000;"><span style="transform:scaleX(0.9536);transform-origin:100% 0">37200</span></div><div class="t g" style="left:43px;top:541.0px;font-size:13px;color:#000;width:272px;overflow:hidden;"><span style="transform:scaleX(1.0234);transform-origin:0 0">Não Conciliado</span></div><div class="t g" style="left:318px;top:541.0px;font-size:13px;color:#000;width:216px;overflow:hidden;"><span style="transform:scaleX(0.9344);transform-origin:0 0">237 - BANCO BRADESCO S/A</span></div><div class="t g" style="left:537px;top:541.0px;font-size:13px;color:#000;width:87px;overflow:hidden;"><span style="transform:scaleX(0.9536);transform-origin:0 0">0094</span></div><svg class="s" style="left:535px;top:537px;" width="6" height="6" viewBox="0 0 6 6"><path d="M0 0 L6 0 L0 6 Z" fill="#1f8a1f"/></svg><div class="t g" style="left:627px;top:541.0px;font-size:13px;color:#000;width:59px;overflow:hidden;"><span style="transform:scaleX(0.9536);transform-origin:0 0">012583</span></div><svg class="s" style="left:625px;top:537px;" width="6" height="6" viewBox="0 0 6 6"><path d="M0 0 L6 0 L0 6 Z" fill="#1f8a1f"/></svg><div class="t g" style="left:-448px;width:1200px;text-align:right;top:541.0px;font-size:13px;color:#000;"><span style="transform:scaleX(0.9536);transform-origin:100% 0">1</span></div><div class="t g" style="left:-402px;width:1200px;text-align:right;top:541.0px;font-size:13px;color:#000;"><span style="transform:scaleX(0.9536);transform-origin:100% 0">5</span></div><div class="t g" style="left:-318px;width:1200px;text-align:right;top:541.0px;font-size:13px;color:#000;"><span style="transform:scaleX(0.9442);transform-origin:100% 0">5,40954E+13</span></div><div class="t g" style="left:887px;top:541.0px;font-size:13px;color:#000;width:300px;overflow:hidden;"><span style="transform:scaleX(0.9137);transform-origin:0 0">ALUFER S/A CONSTRUÇÕES</span></div><div class="t g" style="left:55px;width:1200px;text-align:right;top:541.0px;font-size:13px;color:#000;"><span style="transform:scaleX(0.9536);transform-origin:100% 0">21231</span></div><div class="t g" style="left:184px;width:1200px;text-align:right;top:541.0px;font-size:13px;color:#000;"><span style="transform:scaleX(0.9536);transform-origin:100% 0">1</span></div><div class="t g" style="left:1389px;top:541.0px;font-size:13px;color:#000;width:59px;overflow:hidden;"><span style="transform:scaleX(0.9536);transform-origin:0 0">01</span></div><svg class="s" style="left:1387px;top:537px;" width="6" height="6" viewBox="0 0 6 6"><path d="M0 0 L6 0 L0 6 Z" fill="#1f8a1f"/></svg><div class="t g" style="left:363px;width:1200px;text-align:right;top:541.0px;font-size:13px;color:#000;"><span style="transform:scaleX(0.9798);transform-origin:100% 0">11001</span></div><div class="t g" style="left:1568px;top:541.0px;font-size:13px;color:#000;width:303px;overflow:hidden;"><span style="transform:scaleX(0.9363);transform-origin:0 0">CARTEIRA NACIONAL</span></div><div class="t g" style="left:718px;width:1200px;text-align:right;top:541.0px;font-size:13px;color:#000;"><span style="transform:scaleX(0.9536);transform-origin:100% 0">202</span></div><div class="t g" style="left:808px;width:1200px;text-align:right;top:541.0px;font-size:13px;color:#000;"><span style="transform:scaleX(0.9536);transform-origin:100% 0">2</span></div><div class="t g" style="left:886px;width:1200px;text-align:right;top:541.0px;font-size:13px;color:#000;"><span style="transform:scaleX(0.9536);transform-origin:100% 0">1</span></div><div class="t g" style="left:2091px;top:541.0px;font-size:13px;color:#000;width:100px;overflow:hidden;"><span style="transform:scaleX(0.9865);transform-origin:0 0">11102006</span></div><svg class="s" style="left:2089px;top:537px;" width="6" height="6" viewBox="0 0 6 6"><path d="M0 0 L6 0 L0 6 Z" fill="#1f8a1f"/></svg><div class="t g" style="left:2194px;top:541.0px;font-size:13px;color:#000;width:179px;overflow:hidden;"><span style="transform:scaleX(0.9288);transform-origin:0 0">BANCO BRADESCO S/A</span></div><div class="t g" style="left:2376px;top:541.0px;font-size:13px;color:#000;"><span style="transform:scaleX(0.9210);transform-origin:0 0">BANCOS BAIXA DE CONTAS A RECEBER</span></div><div class="t g" style="left:1983px;width:1200px;text-align:right;top:541.0px;font-size:13px;color:#000;"><span style="transform:scaleX(0.9581);transform-origin:100% 0">37820,89</span></div><div class="t g" style="left:2097px;width:1200px;text-align:right;top:541.0px;font-size:13px;color:#000;"><span style="transform:scaleX(0.9536);transform-origin:100% 0">0</span></div><div class="t g" style="left:43px;top:561.0px;font-size:13px;color:#000;width:272px;overflow:hidden;"><span style="transform:scaleX(1.0234);transform-origin:0 0">Não Conciliado</span></div><div class="t g" style="left:318px;top:561.0px;font-size:13px;color:#000;width:216px;overflow:hidden;"><span style="transform:scaleX(0.9344);transform-origin:0 0">237 - BANCO BRADESCO S/A</span></div><div class="t g" style="left:537px;top:561.0px;font-size:13px;color:#000;width:87px;overflow:hidden;"><span style="transform:scaleX(0.9536);transform-origin:0 0">0094</span></div><svg class="s" style="left:535px;top:557px;" width="6" height="6" viewBox="0 0 6 6"><path d="M0 0 L6 0 L0 6 Z" fill="#1f8a1f"/></svg><div class="t g" style="left:627px;top:561.0px;font-size:13px;color:#000;width:59px;overflow:hidden;"><span style="transform:scaleX(0.9536);transform-origin:0 0">012583</span></div><svg class="s" style="left:625px;top:557px;" width="6" height="6" viewBox="0 0 6 6"><path d="M0 0 L6 0 L0 6 Z" fill="#1f8a1f"/></svg><div class="t g" style="left:-448px;width:1200px;text-align:right;top:561.0px;font-size:13px;color:#000;"><span style="transform:scaleX(0.9536);transform-origin:100% 0">1</span></div><div class="t g" style="left:-402px;width:1200px;text-align:right;top:561.0px;font-size:13px;color:#000;"><span style="transform:scaleX(0.9536);transform-origin:100% 0">26</span></div><div class="t g" style="left:-318px;width:1200px;text-align:right;top:561.0px;font-size:13px;color:#000;"><span style="transform:scaleX(0.9442);transform-origin:100% 0">2,30083E+13</span></div><div class="t g" style="left:887px;top:561.0px;font-size:13px;color:#000;width:300px;overflow:hidden;"><span style="transform:scaleX(0.9306);transform-origin:0 0">EB ARAUJO TRANSPORTES E REMOCAO LTDA ME</span></div><div class="t g" style="left:55px;width:1200px;text-align:right;top:561.0px;font-size:13px;color:#000;"><span style="transform:scaleX(0.9536);transform-origin:100% 0">52251</span></div><div class="t g" style="left:184px;width:1200px;text-align:right;top:561.0px;font-size:13px;color:#000;"><span style="transform:scaleX(0.9536);transform-origin:100% 0">1</span></div><div class="t g" style="left:1389px;top:561.0px;font-size:13px;color:#000;width:59px;overflow:hidden;"><span style="transform:scaleX(0.9536);transform-origin:0 0">01</span></div><svg class="s" style="left:1387px;top:557px;" width="6" height="6" viewBox="0 0 6 6"><path d="M0 0 L6 0 L0 6 Z" fill="#1f8a1f"/></svg><div class="t g" style="left:363px;width:1200px;text-align:right;top:561.0px;font-size:13px;color:#000;"><span style="transform:scaleX(0.9536);transform-origin:100% 0">26023</span></div><div class="t g" style="left:1568px;top:561.0px;font-size:13px;color:#000;width:303px;overflow:hidden;"><span style="transform:scaleX(0.9515);transform-origin:0 0">ADIANTAMENTO - FORNECEDOR</span></div><div class="t g" style="left:718px;width:1200px;text-align:right;top:561.0px;font-size:13px;color:#000;"><span style="transform:scaleX(0.9536);transform-origin:100% 0">325</span></div><div class="t g" style="left:808px;width:1200px;text-align:right;top:561.0px;font-size:13px;color:#000;"><span style="transform:scaleX(0.9536);transform-origin:100% 0">5</span></div><div class="t g" style="left:886px;width:1200px;text-align:right;top:561.0px;font-size:13px;color:#000;"><span style="transform:scaleX(0.9536);transform-origin:100% 0">2</span></div><div class="t g" style="left:2091px;top:561.0px;font-size:13px;color:#000;width:100px;overflow:hidden;"><span style="transform:scaleX(0.9865);transform-origin:0 0">11102006</span></div><svg class="s" style="left:2089px;top:557px;" width="6" height="6" viewBox="0 0 6 6"><path d="M0 0 L6 0 L0 6 Z" fill="#1f8a1f"/></svg><div class="t g" style="left:2194px;top:561.0px;font-size:13px;color:#000;width:179px;overflow:hidden;"><span style="transform:scaleX(0.9288);transform-origin:0 0">BANCO BRADESCO S/A</span></div><div class="t g" style="left:2376px;top:561.0px;font-size:13px;color:#000;"><span style="transform:scaleX(0.9660);transform-origin:0 0">ADIANTAMENTO EB ARAUJO</span></div><div class="t g" style="left:1983px;width:1200px;text-align:right;top:561.0px;font-size:13px;color:#000;"><span style="transform:scaleX(0.9536);transform-origin:100% 0">0</span></div><div class="t g" style="left:2097px;width:1200px;text-align:right;top:561.0px;font-size:13px;color:#000;"><span style="transform:scaleX(0.9536);transform-origin:100% 0">870</span></div><div class="t g" style="left:43px;top:581.0px;font-size:13px;color:#000;width:272px;overflow:hidden;"><span style="transform:scaleX(1.0234);transform-origin:0 0">Não Conciliado</span></div><div class="t g" style="left:318px;top:581.0px;font-size:13px;color:#000;width:216px;overflow:hidden;"><span style="transform:scaleX(0.9344);transform-origin:0 0">237 - BANCO BRADESCO S/A</span></div><div class="t g" style="left:537px;top:581.0px;font-size:13px;color:#000;width:87px;overflow:hidden;"><span style="transform:scaleX(0.9536);transform-origin:0 0">0094</span></div><svg class="s" style="left:535px;top:577px;" width="6" height="6" viewBox="0 0 6 6"><path d="M0 0 L6 0 L0 6 Z" fill="#1f8a1f"/></svg><div class="t g" style="left:627px;top:581.0px;font-size:13px;color:#000;width:59px;overflow:hidden;"><span style="transform:scaleX(0.9536);transform-origin:0 0">012583</span></div><svg class="s" style="left:625px;top:577px;" width="6" height="6" viewBox="0 0 6 6"><path d="M0 0 L6 0 L0 6 Z" fill="#1f8a1f"/></svg><div class="t g" style="left:-448px;width:1200px;text-align:right;top:581.0px;font-size:13px;color:#000;"><span style="transform:scaleX(0.9536);transform-origin:100% 0">1</span></div><div class="t g" style="left:-402px;width:1200px;text-align:right;top:581.0px;font-size:13px;color:#000;"><span style="transform:scaleX(0.9536);transform-origin:100% 0">26</span></div><div class="t g" style="left:-318px;width:1200px;text-align:right;top:581.0px;font-size:13px;color:#000;"><span style="transform:scaleX(0.9560);transform-origin:100% 0">5,80842E+11</span></div><div class="t g" style="left:887px;top:581.0px;font-size:13px;color:#000;width:300px;overflow:hidden;"><span style="transform:scaleX(0.9283);transform-origin:0 0">IMPERIO TRANSPORTES E NEGOCIOS LTDA ME</span></div><div class="t g" style="left:55px;width:1200px;text-align:right;top:581.0px;font-size:13px;color:#000;"><span style="transform:scaleX(0.9536);transform-origin:100% 0">25042025</span></div><div class="t g" style="left:184px;width:1200px;text-align:right;top:581.0px;font-size:13px;color:#000;"><span style="transform:scaleX(0.9536);transform-origin:100% 0">1</span></div><div class="t g" style="left:1389px;top:581.0px;font-size:13px;color:#000;width:59px;overflow:hidden;"><span style="transform:scaleX(0.9536);transform-origin:0 0">01</span></div><svg class="s" style="left:1387px;top:577px;" width="6" height="6" viewBox="0 0 6 6"><path d="M0 0 L6 0 L0 6 Z" fill="#1f8a1f"/></svg><div class="t g" style="left:363px;width:1200px;text-align:right;top:581.0px;font-size:13px;color:#000;"><span style="transform:scaleX(0.9536);transform-origin:100% 0">26023</span></div><div class="t g" style="left:1568px;top:581.0px;font-size:13px;color:#000;width:303px;overflow:hidden;"><span style="transform:scaleX(0.9515);transform-origin:0 0">ADIANTAMENTO - FORNECEDOR</span></div><div class="t g" style="left:718px;width:1200px;text-align:right;top:581.0px;font-size:13px;color:#000;"><span style="transform:scaleX(0.9536);transform-origin:100% 0">325</span></div><div class="t g" style="left:808px;width:1200px;text-align:right;top:581.0px;font-size:13px;color:#000;"><span style="transform:scaleX(0.9536);transform-origin:100% 0">3</span></div><div class="t g" style="left:886px;width:1200px;text-align:right;top:581.0px;font-size:13px;color:#000;"><span style="transform:scaleX(0.9536);transform-origin:100% 0">2</span></div><div class="t g" style="left:2091px;top:581.0px;font-size:13px;color:#000;width:100px;overflow:hidden;"><span style="transform:scaleX(0.9865);transform-origin:0 0">11102006</span></div><svg class="s" style="left:2089px;top:577px;" width="6" height="6" viewBox="0 0 6 6"><path d="M0 0 L6 0 L0 6 Z" fill="#1f8a1f"/></svg><div class="t g" style="left:2194px;top:581.0px;font-size:13px;color:#000;width:179px;overflow:hidden;"><span style="transform:scaleX(0.9288);transform-origin:0 0">BANCO BRADESCO S/A</span></div><div class="t g" style="left:2376px;top:581.0px;font-size:13px;color:#000;"><span style="transform:scaleX(0.9761);transform-origin:0 0">ADIANTAMENTO SEMANAL IMPERIO</span></div><div class="t g" style="left:1983px;width:1200px;text-align:right;top:581.0px;font-size:13px;color:#000;"><span style="transform:scaleX(0.9536);transform-origin:100% 0">0</span></div><div class="t g" style="left:2097px;width:1200px;text-align:right;top:581.0px;font-size:13px;color:#000;"><span style="transform:scaleX(0.9536);transform-origin:100% 0">46500</span></div><div class="t g" style="left:43px;top:601.0px;font-size:13px;color:#000;width:272px;overflow:hidden;"><span style="transform:scaleX(1.0234);transform-origin:0 0">Não Conciliado</span></div><div class="t g" style="left:318px;top:601.0px;font-size:13px;color:#000;width:216px;overflow:hidden;"><span style="transform:scaleX(0.9344);transform-origin:0 0">237 - BANCO BRADESCO S/A</span></div><div class="t g" style="left:537px;top:601.0px;font-size:13px;color:#000;width:87px;overflow:hidden;"><span style="transform:scaleX(0.9536);transform-origin:0 0">0094</span></div><svg class="s" style="left:535px;top:597px;" width="6" height="6" viewBox="0 0 6 6"><path d="M0 0 L6 0 L0 6 Z" fill="#1f8a1f"/></svg><div class="t g" style="left:627px;top:601.0px;font-size:13px;color:#000;width:59px;overflow:hidden;"><span style="transform:scaleX(0.9536);transform-origin:0 0">012583</span></div><svg class="s" style="left:625px;top:597px;" width="6" height="6" viewBox="0 0 6 6"><path d="M0 0 L6 0 L0 6 Z" fill="#1f8a1f"/></svg><div class="t g" style="left:-448px;width:1200px;text-align:right;top:601.0px;font-size:13px;color:#000;"><span style="transform:scaleX(0.9536);transform-origin:100% 0">1</span></div><div class="t g" style="left:-402px;width:1200px;text-align:right;top:601.0px;font-size:13px;color:#000;"><span style="transform:scaleX(0.9536);transform-origin:100% 0">8</span></div><div class="t g" style="left:-318px;width:1200px;text-align:right;top:601.0px;font-size:13px;color:#000;"><span style="transform:scaleX(0.9442);transform-origin:100% 0">8,96375E+13</span></div><div class="t g" style="left:887px;top:601.0px;font-size:13px;color:#000;width:300px;overflow:hidden;"><span style="transform:scaleX(0.9288);transform-origin:0 0">KLABIN SA</span></div><div class="t g" style="left:55px;width:1200px;text-align:right;top:601.0px;font-size:13px;color:#000;"><span style="transform:scaleX(0.9536);transform-origin:100% 0">1254</span></div><div class="t g" style="left:1260px;top:601.0px;font-size:13px;color:#000;width:48px;overflow:hidden;"><span style="transform:scaleX(0.9536);transform-origin:0 0">1</span></div><svg class="s" style="left:1258px;top:597px;" width="6" height="6" viewBox="0 0 6 6"><path d="M0 0 L6 0 L0 6 Z" fill="#1f8a1f"/></svg><div class="t g" style="left:184px;width:1200px;text-align:right;top:601.0px;font-size:13px;color:#000;"><span style="transform:scaleX(0.9536);transform-origin:100% 0">1</span></div><div class="t g" style="left:1389px;top:601.0px;font-size:13px;color:#000;width:59px;overflow:hidden;"><span style="transform:scaleX(0.9536);transform-origin:0 0">01</span></div><svg class="s" style="left:1387px;top:597px;" width="6" height="6" viewBox="0 0 6 6"><path d="M0 0 L6 0 L0 6 Z" fill="#1f8a1f"/></svg><div class="t g" style="left:363px;width:1200px;text-align:right;top:601.0px;font-size:13px;color:#000;"><span style="transform:scaleX(0.9798);transform-origin:100% 0">11001</span></div><div class="t g" style="left:1568px;top:601.0px;font-size:13px;color:#000;width:303px;overflow:hidden;"><span style="transform:scaleX(0.9363);transform-origin:0 0">CARTEIRA NACIONAL</span></div><div class="t g" style="left:718px;width:1200px;text-align:right;top:601.0px;font-size:13px;color:#000;"><span style="transform:scaleX(0.9536);transform-origin:100% 0">202</span></div><div class="t g" style="left:808px;width:1200px;text-align:right;top:601.0px;font-size:13px;color:#000;"><span style="transform:scaleX(0.9536);transform-origin:100% 0">1</span></div><div class="t g" style="left:886px;width:1200px;text-align:right;top:601.0px;font-size:13px;color:#000;"><span style="transform:scaleX(0.9536);transform-origin:100% 0">1</span></div><div class="t g" style="left:2091px;top:601.0px;font-size:13px;color:#000;width:100px;overflow:hidden;"><span style="transform:scaleX(0.9865);transform-origin:0 0">11102006</span></div><svg class="s" style="left:2089px;top:597px;" width="6" height="6" viewBox="0 0 6 6"><path d="M0 0 L6 0 L0 6 Z" fill="#1f8a1f"/></svg><div class="t g" style="left:2194px;top:601.0px;font-size:13px;color:#000;width:179px;overflow:hidden;"><span style="transform:scaleX(0.9288);transform-origin:0 0">BANCO BRADESCO S/A</span></div><div class="t g" style="left:2376px;top:601.0px;font-size:13px;color:#000;"><span style="transform:scaleX(0.9210);transform-origin:0 0">BANCOS BAIXA DE CONTAS A RECEBER</span></div><div class="t g" style="left:1983px;width:1200px;text-align:right;top:601.0px;font-size:13px;color:#000;"><span style="transform:scaleX(0.9729);transform-origin:100% 0">113467,75</span></div><div class="t g" style="left:2097px;width:1200px;text-align:right;top:601.0px;font-size:13px;color:#000;"><span style="transform:scaleX(0.9536);transform-origin:100% 0">0</span></div><div class="r" style="left:685px;top:275px;width:71px;height:23px;background:transparent;box-sizing:border-box;border:2px solid #217346"></div><div class="r" style="left:751px;top:293px;width:5px;height:5px;background:#217346;border:1px solid #fff"></div><div class="clip" style="left:0px;top:0;width:1873px;height:669px"><div style="position:absolute;left:0px;top:0"><div style="position:absolute;left:0px;top:0;width:0;height:0"><div class="r" style="left:0px;top:0px;width:1920px;height:58px;background:#217346;"></div><svg class="s" style="left:21px;top:9px;" width="15" height="15" viewBox="0 0 15 15"><path d="M1 1 H14 V14 H1 Z" fill="none" stroke="#fff" stroke-width="1.6"/><path d="M4 1.5 V5.5 H11 V1.5" fill="none" stroke="#fff" stroke-width="1.4"/><path d="M4 14 V9 H11 V14" fill="none" stroke="#fff" stroke-width="1.4"/><rect x="6" y="11" width="2" height="3" fill="#fff"/></svg><svg class="s" style="left:63px;top:8px;" width="17" height="16" viewBox="0 0 17 16"><path d="M2 6 H10 a4.5 4.5 0 0 1 0 9 H8" fill="none" stroke="#fff" stroke-width="1.8"/><path d="M6 1.5 L1.8 6 L6 10.5" fill="none" stroke="#fff" stroke-width="1.8"/></svg><svg class="s" style="left:87px;top:14px;" width="6" height="4" viewBox="0 0 6 4"><path d="M0 0 L6 0 L3 3 Z" fill="#fff"/></svg><svg class="s" style="left:107px;top:8px;" width="17" height="16" viewBox="0 0 17 16"><path d="M15 6 H7 a4.5 4.5 0 0 0 0 9 H9" fill="none" stroke="#5a9e78" stroke-width="1.8"/><path d="M11 1.5 L15.2 6 L11 10.5" fill="none" stroke="#5a9e78" stroke-width="1.8"/></svg><svg class="s" style="left:131px;top:14px;" width="6" height="4" viewBox="0 0 6 4"><path d="M0 0 L6 0 L3 3 Z" fill="#5a9e78"/></svg><svg class="s" style="left:157px;top:12px;" width="8" height="9" viewBox="0 0 8 9"><path d="M1 1 H7" stroke="#fff" stroke-width="1.2"/><path d="M1 3.5 H7 L4 7 Z" fill="#fff"/></svg><div class="t" style="left:799px;top:12.84px;font-size:12px;color:#fff;"><span style="transform:scaleX(0.8823);transform-origin:0 0">FULL_PRELDOC20250925073956_SUPERVISOR.xlsx - Excel</span></div><svg class="s" style="left:1730px;top:11px;" width="14" height="11" viewBox="0 0 14 11"><rect x="0.5" y="0.5" width="13" height="10" fill="none" stroke="#fff"/><path d="M0.5 2.5 H13.5" stroke="#fff"/><path d="M7 9 V4.5 M4.8 6.5 L7 4.2 L9.2 6.5" stroke="#fff" fill="none"/></svg><div class="r" style="left:1778px;top:17px;width:10px;height:2px;background:#fff;"></div><svg class="s" style="left:1824px;top:11px;" width="11" height="11" viewBox="0 0 11 11"><rect x="0.5" y="0.5" width="10" height="10" fill="none" stroke="#fff"/><path d="M0.5 1.5 H10.5" stroke="#fff" stroke-width="1.5"/></svg><svg class="s" style="left:1869px;top:11px;" width="11" height="11" viewBox="0 0 11 11"><path d="M0.5 0.5 L10.5 10.5 M10.5 0.5 L0.5 10.5" stroke="#fff" stroke-width="1.3"/></svg><div class="t" style="left:9px;top:39.0px;font-size:13px;color:#ffffff;"><span style="transform:scaleX(0.9528);transform-origin:0 0">Arquivo</span></div><div class="t" style="left:77px;top:39.0px;font-size:13px;color:#ffffff;"><span style="transform:scaleX(0.9052);transform-origin:0 0">Página Inicial</span></div><div class="t" style="left:176px;top:39.0px;font-size:13px;color:#ffffff;"><span style="transform:scaleX(0.8859);transform-origin:0 0">Inserir</span></div><div class="t" style="left:237px;top:39.0px;font-size:13px;color:#ffffff;"><span style="transform:scaleX(0.8992);transform-origin:0 0">Layout da Página</span></div><div class="t" style="left:357px;top:39.0px;font-size:13px;color:#ffffff;"><span style="transform:scaleX(0.9044);transform-origin:0 0">Fórmulas</span></div><div class="t" style="left:497px;top:39.0px;font-size:13px;color:#ffffff;"><span style="transform:scaleX(0.8729);transform-origin:0 0">Revisão</span></div><div class="t" style="left:566px;top:39.0px;font-size:13px;color:#ffffff;"><span style="transform:scaleX(0.8921);transform-origin:0 0">Exibir</span></div><div class="t" style="left:624px;top:39.0px;font-size:13px;color:#ffffff;"><span style="transform:scaleX(0.9374);transform-origin:0 0">Acrobat</span></div><div class="t" style="left:695px;top:39.0px;font-size:13px;color:#ffffff;"><span style="transform:scaleX(0.9083);transform-origin:0 0">Power Pivot</span></div><div class="r" style="left:422px;top:34px;width:60px;height:24px;background:#f3f3f3;"></div><div class="t" style="left:-148.0px;width:1200px;text-align:center;top:39.0px;font-size:13px;color:#217346;"><span style="transform:scaleX(0.9314);transform-origin:50% 0">Dados</span></div><svg class="s" style="left:788px;top:39px;" width="11" height="15" viewBox="0 0 11 15"><path d="M5.5 1 a4.5 4.5 0 0 1 2.5 8.3 V11 H3 V9.3 A4.5 4.5 0 0 1 5.5 1 Z" fill="none" stroke="#c5dccf" stroke-width="1.1"/><path d="M3.5 13 H7.5" stroke="#c5dccf"/></svg><div class="t" style="left:804px;top:39.0px;font-size:13px;color:#c5dccf;"><span style="transform:scaleX(0.8806);transform-origin:0 0">O que você deseja fazer...</span></div><div class="t" style="left:1679px;top:39.0px;font-size:13px;color:#fff;"><span style="transform:scaleX(0.9099);transform-origin:0 0">Camila A. Oliveira</span></div><div class="r" style="left:1783px;top:34px;width:137px;height:23px;background:#1a5c37;"></div><svg class="s" style="left:1790px;top:37px;" width="15" height="18" viewBox="0 0 15 18"><circle cx="7" cy="5.5" r="4.3" fill="none" stroke="#fff" stroke-width="1.3"/><path d="M1 17 a6.5 6.5 0 0 1 10 -6" fill="none" stroke="#fff" stroke-width="1.3"/><path d="M11 11 v6 M8 14 h6" stroke="#fff" stroke-width="1.3"/></svg><div class="t" style="left:1810px;top:39.0px;font-size:13px;color:#fff;"><span style="transform:scaleX(0.9406);transform-origin:0 0">Compartilhar</span></div><div class="r" style="left:0px;top:58px;width:1920px;height:92px;background:#f3f3f3;"></div><div class="r" style="left:0px;top:150px;width:1920px;height:1px;background:#d4d4d4;"></div><svg class="s" style="left:14px;top:66px;" width="32" height="32" viewBox="0 0 32 32"><path d="M1.5 0.5 L15.5 0.5 L22.5 7.5 L22.5 27.5 L1.5 27.5 Z" fill="#fff" stroke="#6d6d6d"/><path d="M15.5 0.5 L15.5 7.5 L22.5 7.5" fill="none" stroke="#6d6d6d"/><path d="M8 11 L19 9 L19 31 L8 29 Z" fill="#a4262c"/><rect x="19" y="10" width="9" height="20" rx="4" fill="#a4262c"/><path d="M20 14 h7 M20 19 h7 M20 24 h7" stroke="#fff" stroke-width="1.2"/><path d="M10.5 24 L13.2 14 L14.8 14 L17.5 24 M11.8 20.5 h4.4" stroke="#fff" stroke-width="1.6" fill="none"/></svg><div class="t" style="left:-574px;width:1200px;text-align:center;top:100.84px;font-size:12px;color:#3c3c3c;"><span style="transform:scaleX(0.9300);transform-origin:50% 0">Do</span></div><div class="t" style="left:-574px;width:1200px;text-align:center;top:116.84px;font-size:12px;color:#3c3c3c;"><span style="transform:scaleX(0.9300);transform-origin:50% 0">Access</span></div><svg class="s" style="left:56px;top:66px;" width="32" height="32" viewBox="0 0 32 32"><path d="M1.5 0.5 L15.5 0.5 L22.5 7.5 L22.5 27.5 L1.5 27.5 Z" fill="#fff" stroke="#6d6d6d"/><path d="M15.5 0.5 L15.5 7.5 L22.5 7.5" fill="none" stroke="#6d6d6d"/><circle cx="20" cy="22" r="7.5" fill="#fff" stroke="#3b77bf" stroke-width="1.4"/><ellipse cx="20" cy="22" rx="3.2" ry="7.5" fill="none" stroke="#3b77bf" stroke-width="1.2"/><path d="M12.5 19.5 h15 M12.5 24.5 h15" stroke="#3b77bf" stroke-width="1.2"/></svg><div class="t" style="left:-532px;width:1200px;text-align:center;top:100.84px;font-size:12px;color:#3c3c3c;"><span style="transform:scaleX(0.9300);transform-origin:50% 0">Da</span></div><div class="t" style="left:-532px;width:1200px;text-align:center;top:116.84px;font-size:12px;color:#3c3c3c;"><span style="transform:scaleX(0.9300);transform-origin:50% 0">Web</span></div><svg class="s" style="left:98px;top:66px;" width="32" height="32" viewBox="0 0 32 32"><path d="M1.5 0.5 L15.5 0.5 L22.5 7.5 L22.5 27.5 L1.5 27.5 Z" fill="#fff" stroke="#6d6d6d"/><path d="M15.5 0.5 L15.5 7.5 L22.5 7.5" fill="none" stroke="#6d6d6d"/><rect x="15.5" y="15.5" width="12" height="14" fill="#fff" stroke="#6d6d6d"/><path d="M18 20 h7 M18 23 h7 M18 26 h7" stroke="#8a8a8a"/></svg><div class="t" style="left:-490px;width:1200px;text-align:center;top:100.84px;font-size:12px;color:#3c3c3c;"><span style="transform:scaleX(0.9300);transform-origin:50% 0">De</span></div><div class="t" style="left:-490px;width:1200px;text-align:center;top:116.84px;font-size:12px;color:#3c3c3c;"><span style="transform:scaleX(0.9300);transform-origin:50% 0">Texto</span></div><svg class="s" style="left:147px;top:66px;" width="32" height="32" viewBox="0 0 32 32"><path d="M1.5 0.5 L15.5 0.5 L22.5 7.5 L22.5 27.5 L1.5 27.5 Z" fill="#fff" stroke="#6d6d6d"/><path d="M15.5 0.5 L15.5 7.5 L22.5 7.5" fill="none" stroke="#6d6d6d"/><circle cx="19.5" cy="21" r="4" fill="#fff" stroke="#3b77bf" stroke-width="2"/><path d="M19.5 13.5 v3 M19.5 25.5 v3 M12 21 h3 M24 21 h3" stroke="#3b77bf" stroke-width="2"/></svg><div class="t" style="left:-441px;width:1200px;text-align:center;top:100.84px;font-size:12px;color:#3c3c3c;"><span style="transform:scaleX(0.9300);transform-origin:50% 0">De Outras</span></div><div class="t" style="left:-446px;width:1200px;text-align:center;top:116.84px;font-size:12px;color:#3c3c3c;"><span style="transform:scaleX(0.9300);transform-origin:50% 0">Fontes</span></div><svg class="s" style="left:175.05910625px;top:122px;" width="6" height="4" viewBox="0 0 6 4"><path d="M0 0 L6 0 L3 3 Z" fill="#666"/></svg><div class="r" style="left:193px;top:66px;width:1px;height:60px;background:#d4d4d4;"></div><svg class="s" style="left:210px;top:66px;" width="32" height="32" viewBox="0 0 32 32"><path d="M3.5 0.5 L17.5 0.5 L24.5 7.5 L24.5 27.5 L3.5 27.5 Z" fill="#fff" stroke="#6d6d6d"/><path d="M17.5 0.5 L17.5 7.5 L24.5 7.5" fill="none" stroke="#6d6d6d"/><path d="M7 8 h10 M7 11 h12 M7 14 h12 M7 17 h10 M7 20 h8" stroke="#8a8a8a"/><rect x="17" y="16" width="10" height="14" rx="2" fill="#e8c27a"/><ellipse cx="22" cy="16.5" rx="5" ry="2" fill="#d4a84e"/></svg><div class="t" style="left:-375px;width:1200px;text-align:center;top:100.84px;font-size:12px;color:#3c3c3c;"><span style="transform:scaleX(0.9300);transform-origin:50% 0">Conexões</span></div><div class="t" style="left:-375px;width:1200px;text-align:center;top:116.84px;font-size:12px;color:#3c3c3c;"><span style="transform:scaleX(0.9300);transform-origin:50% 0">Existentes</span></div><div class="t" style="left:-470px;width:1200px;text-align:center;top:135.84px;font-size:12px;color:#666666;"><span style="transform:scaleX(0.9300);transform-origin:50% 0">Obter Dados Externos</span></div><div class="r" style="left:258px;top:62px;width:1px;height:84px;background:#d4d4d4;"></div><svg class="s" style="left:275px;top:64px;" width="32" height="32" viewBox="0 0 32 32"><path d="M8 2 L3 13 L8 13 L5 22 L13 9 L8 9 L11 2 Z" fill="#f0b54a"/><rect x="9" y="7" width="13" height="20" rx="3" fill="#777"/><ellipse cx="15.5" cy="8" rx="6.5" ry="2.5" fill="#999"/><rect x="14.5" y="16.5" width="16" height="13" fill="#fff" stroke="#6d6d6d"/><rect x="14.5" y="16.5" width="16" height="3" fill="#3b77bf"/><path d="M14.5 23 h16 M14.5 26 h16 M20 19.5 v10 M25 19.5 v10" stroke="#8a8a8a" stroke-width="0.8"/></svg><div class="t" style="left:-308px;width:1200px;text-align:center;top:100.84px;font-size:12px;color:#3c3c3c;"><span style="transform:scaleX(0.9300);transform-origin:50% 0">Nova</span></div><div class="t" style="left:-313px;width:1200px;text-align:center;top:116.84px;font-size:12px;color:#3c3c3c;"><span style="transform:scaleX(0.9300);transform-origin:50% 0">Consulta</span></div><svg class="s" style="left:313.0235625px;top:122px;" width="6" height="4" viewBox="0 0 6 4"><path d="M0 0 L6 0 L3 3 Z" fill="#666"/></svg><svg class="s" style="left:326px;top:64px;" width="16" height="16" viewBox="0 0 16 16"><rect x="0.5" y="0.5" width="15" height="14" fill="#fff" stroke="#6d6d6d"/><rect x="1" y="1" width="14" height="2" fill="#3b77bf"/><path d="M11 3 v11" stroke="#6d6d6d"/><path d="M12.5 6 h1.5 M12.5 8.5 h1.5 M12.5 11 h1.5" stroke="#6d6d6d"/></svg><div class="t" style="left:345px;top:66.84px;font-size:12px;color:#3c3c3c;"><span style="transform:scaleX(0.9300);transform-origin:0 0">Mostrar Consultas</span></div><svg class="s" style="left:326px;top:87px;" width="16" height="16" viewBox="0 0 16 16"><rect x="0.5" y="0.5" width="15" height="14" fill="#fff" stroke="#6d6d6d"/><rect x="1" y="1" width="14" height="2.5" fill="#3b77bf"/><path d="M1 6.5 h14 M1 9.5 h14 M1 12.5 h14 M5.5 3.5 v11 M10.5 3.5 v11" stroke="#8a8a8a" stroke-width="0.8"/></svg><div class="t" style="left:345px;top:89.84px;font-size:12px;color:#3c3c3c;"><span style="transform:scaleX(0.9300);transform-origin:0 0">Da Tabela</span></div><svg class="s" style="left:326px;top:110px;" width="16" height="16" viewBox="0 0 16 16"><path d="M1.0 1.0 L7.0 1.0 L11.0 5.0 L11.0 14.0 L1.0 14.0 Z" fill="#fff" stroke="#6d6d6d"/><path d="M7.0 1.0 L7.0 5.0 L11.0 5.0" fill="none" stroke="#6d6d6d"/><circle cx="11" cy="12" r="4.3" fill="#fff" stroke="#3b77bf" stroke-width="1.2"/><path d="M11 9.5 v2.8 h2" stroke="#3b77bf" fill="none"/></svg><div class="t" style="left:345px;top:112.84px;font-size:12px;color:#3c3c3c;"><span style="transform:scaleX(0.9300);transform-origin:0 0">Fontes Recentes</span></div><div class="t" style="left:-244px;width:1200px;text-align:center;top:135.84px;font-size:12px;color:#666666;"><span style="transform:scaleX(0.9300);transform-origin:50% 0">Obter e Transformar</span></div><div class="r" style="left:453px;top:62px;width:1px;height:84px;background:#d4d4d4;"></div><svg class="s" style="left:468px;top:64px;" width="32" height="32" viewBox="0 0 32 32"><rect x="2.5" y="1.5" width="16" height="22" fill="#fff" stroke="#6d6d6d"/><rect x="5.5" y="3.5" width="16" height="22" fill="#fff" stroke="#6d6d6d"/><path d="M8.5 5.5 L20.5 5.5 L25.5 10.5 L25.5 27.5 L8.5 27.5 Z" fill="#fff" stroke="#6d6d6d"/><path d="M20.5 5.5 L20.5 10.5 L25.5 10.5" fill="none" stroke="#6d6d6d"/><path d="M17 24 a6 6 0 0 1 10 -5" stroke="#5fa37a" stroke-width="2.6" fill="none"/><path d="M29 26 a6 6 0 0 1 -10 4" stroke="#5fa37a" stroke-width="2.6" fill="none"/></svg><div class="t" style="left:-118px;width:1200px;text-align:center;top:100.84px;font-size:12px;color:#3c3c3c;"><span style="transform:scaleX(0.9300);transform-origin:50% 0">Atualizar</span></div><div class="t" style="left:-123px;width:1200px;text-align:center;top:116.84px;font-size:12px;color:#3c3c3c;"><span style="transform:scaleX(0.9300);transform-origin:50% 0">Tudo</span></div><svg class="s" style="left:493.5118421875px;top:122px;" width="6" height="4" viewBox="0 0 6 4"><path d="M0 0 L6 0 L3 3 Z" fill="#666"/></svg><svg class="s" style="left:511px;top:64px;" width="16" height="16" viewBox="0 0 16 16"><rect x="0.5" y="0.5" width="15" height="11" fill="#fff" stroke="#6d6d6d"/><path d="M3 14 h10" stroke="#6d6d6d"/><path d="M8 3 L11 6 L8 9 L5 6 Z" fill="none" stroke="#3b77bf" stroke-width="1.2"/></svg><div class="t" style="left:530px;top:66.84px;font-size:12px;color:#3c3c3c;"><span style="transform:scaleX(0.9300);transform-origin:0 0">Conexões</span></div><svg class="s" style="left:511px;top:87px;" width="16" height="16" viewBox="0 0 16 16"><rect x="0.5" y="0.5" width="13" height="14" fill="#fafafa" stroke="#b5b5b5"/><rect x="1" y="1" width="12" height="2" fill="#c8c8c8"/><path d="M3 6 h2 M3 10 h2 M7 6 h4 M7 10 h4" stroke="#b5b5b5"/></svg><div class="t" style="left:530px;top:89.84px;font-size:12px;color:#a6a6a6;"><span style="transform:scaleX(0.9300);transform-origin:0 0">Propriedades</span></div><svg class="s" style="left:511px;top:110px;" width="16" height="16" viewBox="0 0 16 16"><path d="M1.0 1.0 L7.0 1.0 L11.0 5.0 L11.0 14.0 L1.0 14.0 Z" fill="#fafafa" stroke="#b5b5b5"/><path d="M7.0 1.0 L7.0 5.0 L11.0 5.0" fill="none" stroke="#b5b5b5"/><path d="M4 12 a2 2 0 0 1 4 0 M7 13 a2 2 0 0 0 4 0" stroke="#b5b5b5" fill="none"/></svg><div class="t" style="left:530px;top:112.84px;font-size:12px;color:#a6a6a6;"><span style="transform:scaleX(0.9300);transform-origin:0 0">Editar Links</span></div><div class="t" style="left:-69px;width:1200px;text-align:center;top:135.84px;font-size:12px;color:#666666;"><span style="transform:scaleX(0.9300);transform-origin:50% 0">Conexões</span></div><div class="r" style="left:611px;top:62px;width:1px;height:84px;background:#d4d4d4;"></div><svg class="s" style="left:620px;top:70px;" width="15" height="16" viewBox="0 0 15 16"><text x="0" y="8" font-size="9.5" font-family="Liberation Sans" fill="#3b77bf">A</text><text x="0" y="16" font-size="9.5" font-family="Liberation Sans" fill="#7a4fb5">Z</text><path d="M10.5 1 v14 M7.8 12 L10.5 15.2 L13.2 12" stroke="#444" stroke-width="1.2" fill="none"/></svg><svg class="s" style="left:620px;top:101px;" width="15" height="16" viewBox="0 0 15 16"><text x="0" y="8" font-size="9.5" font-family="Liberation Sans" fill="#7a4fb5">Z</text><text x="0" y="16" font-size="9.5" font-family="Liberation Sans" fill="#3b77bf">A</text><path d="M10.5 1 v14 M7.8 12 L10.5 15.2 L13.2 12" stroke="#444" stroke-width="1.2" fill="none"/></svg><svg class="s" style="left:651px;top:64px;" width="30" height="28" viewBox="0 0 30 28"><rect x="0.5" y="2.5" width="28" height="24" fill="#fff" stroke="#6d6d6d"/><rect x="0" y="2" width="29" height="3" fill="#3b77bf"/><path d="M14.5 5 v21" stroke="#6d6d6d"/><text x="3" y="15" font-size="11" font-family="Liberation Sans" fill="#7a4fb5">Z</text><text x="3" y="25" font-size="11" font-family="Liberation Sans" fill="#3b77bf">A</text><text x="17" y="15" font-size="11" font-family="Liberation Sans" fill="#3b77bf">A</text><text x="17" y="25" font-size="11" font-family="Liberation Sans" fill="#7a4fb5">Z</text></svg><div class="t" style="left:66px;width:1200px;text-align:center;top:100.84px;font-size:12px;color:#3c3c3c;"><span style="transform:scaleX(0.9300);transform-origin:50% 0">Classificar</span></div><div class="r" style="left:700px;top:66px;width:1px;height:60px;background:#d4d4d4;"></div><div class="r" style="left:704px;top:61px;width:42px;height:69px;background:#c6c6c6;"></div><svg class="s" style="left:710px;top:65px;" width="30" height="31" viewBox="0 0 30 31"><path d="M1 1 L29 1 L29 4 L18 15 L18 29 L12 29 L12 15 L1 4 Z" fill="#6d6d6d"/><path d="M3.5 4 L8 4 L15 11 L15 28 L14 28 L14 14 Z" fill="#f0f0f0" opacity="0.7"/></svg><div class="t" style="left:125px;width:1200px;text-align:center;top:100.84px;font-size:12px;color:#3c3c3c;"><span style="transform:scaleX(0.9300);transform-origin:50% 0">Filtro</span></div><svg class="s" style="left:749px;top:64px;" width="16" height="16" viewBox="0 0 16 16"><path d="M0 0 L15 0 L15 2 L9 8 L9 14 L6 14 L6 8 L0 2 Z" fill="#5a5a5a"/><path d="M9 9 L15 15 M15 9 L9 15" stroke="#d24726" stroke-width="1.8"/></svg><div class="t" style="left:768px;top:66.84px;font-size:12px;color:#3c3c3c;"><span style="transform:scaleX(0.9300);transform-origin:0 0">Limpar</span></div><svg class="s" style="left:749px;top:87px;" width="16" height="16" viewBox="0 0 16 16"><path d="M0 0 L15 0 L15 2 L9 8 L9 14 L6 14 L6 8 L0 2 Z" fill="#5a5a5a"/><path d="M9 12 a3.5 3.5 0 0 1 6 -2 M15 13 a3.5 3.5 0 0 1 -6 2" stroke="#3a9e6a" stroke-width="1.5" fill="none"/></svg><div class="t" style="left:768px;top:89.84px;font-size:12px;color:#3c3c3c;"><span style="transform:scaleX(0.9300);transform-origin:0 0">Reaplicar</span></div><svg class="s" style="left:749px;top:110px;" width="16" height="16" viewBox="0 0 16 16"><path d="M0 0 L15 0 L15 2 L9 8 L9 14 L6 14 L6 8 L0 2 Z" fill="#5a5a5a"/><path d="M7 16 L14 9 L16 11 L9 18 Z" fill="#3b77bf"/></svg><div class="t" style="left:768px;top:112.84px;font-size:12px;color:#3c3c3c;"><span style="transform:scaleX(0.9300);transform-origin:0 0">Avançado</span></div><div class="t" style="left:122px;width:1200px;text-align:center;top:135.84px;font-size:12px;color:#666666;"><span style="transform:scaleX(0.9300);transform-origin:50% 0">Classificar e Filtrar</span></div><div class="r" style="left:833px;top:62px;width:1px;height:84px;background:#d4d4d4;"></div><svg class="s" style="left:851px;top:64px;" width="32" height="32" viewBox="0 0 32 32"><path d="M10 10 a6.5 6 0 0 1 12 0" stroke="#3b77bf" stroke-width="2" fill="none"/><path d="M18.5 8 L22 12 L25.5 8" stroke="#3b77bf" stroke-width="2" fill="none"/><rect x="0.5" y="11.5" width="14" height="16" fill="#fff" stroke="#6d6d6d"/><path d="M3 15.5 h9 M3 18.5 h9 M3 21.5 h9 M3 24.5 h9" stroke="#3b77bf"/><rect x="17.5" y="14.5" width="12" height="11" fill="#fff" stroke="#6d6d6d"/><rect x="17.5" y="14.5" width="12" height="2" fill="#6d6d6d"/><path d="M19.5 19.5 h3 M24.5 19.5 h3 M19.5 23 h3 M24.5 23 h3" stroke="#3b77bf"/></svg><div class="t" style="left:266px;width:1200px;text-align:center;top:100.84px;font-size:12px;color:#3c3c3c;"><span style="transform:scaleX(0.9300);transform-origin:50% 0">Texto para</span></div><div class="t" style="left:266px;width:1200px;text-align:center;top:116.84px;font-size:12px;color:#3c3c3c;"><span style="transform:scaleX(0.9300);transform-origin:50% 0">Colunas</span></div><svg class="s" style="left:924px;top:64px;" width="32" height="32" viewBox="0 0 32 32"><rect x="1.5" y="2.5" width="26" height="22" fill="#fff" stroke="#8a8a8a"/><path d="M1.5 8 h26 M1.5 13 h26 M1.5 19 h26 M8 2.5 v22" stroke="#8a8a8a" stroke-width="0.8"/><rect x="9" y="9" width="12" height="4" fill="#fff" stroke="#5fa37a"/><rect x="9" y="14" width="12" height="4" fill="#d9d9d9"/><path d="M24 12 L18 22 L22 22 L19 31 L27 19 L23 19 L26 12 Z" fill="#f0b54a"/></svg><div class="t" style="left:339px;width:1200px;text-align:center;top:100.84px;font-size:12px;color:#3c3c3c;"><span style="transform:scaleX(0.9300);transform-origin:50% 0">Preenchimento</span></div><div class="t" style="left:339px;width:1200px;text-align:center;top:116.84px;font-size:12px;color:#3c3c3c;"><span style="transform:scaleX(0.9300);transform-origin:50% 0">Relâmpago</span></div><svg class="s" style="left:996px;top:65px;" width="32" height="32" viewBox="0 0 32 32"><rect x="0.5" y="1.5" width="10" height="26" fill="#fff" stroke="#6d6d6d"/><rect x="1" y="2.0" width="9" height="5" fill="#3b77bf"/><rect x="1" y="7.2" width="9" height="5" fill="#f0c36a"/><rect x="1" y="12.4" width="9" height="5" fill="#3b77bf"/><rect x="1" y="17.6" width="9" height="5" fill="#f0c36a"/><rect x="1" y="22.8" width="9" height="5" fill="#3b77bf"/><rect x="20.5" y="1.5" width="10" height="26" fill="#fff" stroke="#6d6d6d"/><rect x="21" y="2.0" width="9" height="5" fill="#3b77bf"/><rect x="21" y="7.2" width="9" height="5" fill="#f0c36a"/><path d="M21 17.5 h9 M21 22.5 h9" stroke="#6d6d6d"/><path d="M12 14 h6 M15.5 11 L18.5 14 L15.5 17" stroke="#3b77bf" stroke-width="1.8" fill="none"/></svg><div class="t" style="left:411px;width:1200px;text-align:center;top:100.84px;font-size:12px;color:#3c3c3c;"><span style="transform:scaleX(0.9300);transform-origin:50% 0">Remover</span></div><div class="t" style="left:411px;width:1200px;text-align:center;top:116.84px;font-size:12px;color:#3c3c3c;"><span style="transform:scaleX(0.9300);transform-origin:50% 0">Duplicatas</span></div><svg class="s" style="left:1058px;top:64px;" width="32" height="32" viewBox="0 0 32 32"><rect x="1.5" y="9.5" width="18" height="6" fill="#fff" stroke="#6d6d6d"/><rect x="1.5" y="19.5" width="16" height="6" fill="#fff" stroke="#6d6d6d"/><path d="M14 8 L18 12 L27 2" stroke="#5fa37a" stroke-width="2.4" fill="none"/><circle cx="23" cy="23" r="5" fill="#fff" stroke="#d24726" stroke-width="2"/><path d="M19.5 19.5 L26.5 26.5" stroke="#d24726" stroke-width="2"/></svg><div class="t" style="left:473px;width:1200px;text-align:center;top:100.84px;font-size:12px;color:#3c3c3c;"><span style="transform:scaleX(0.9300);transform-origin:50% 0">Validação</span></div><div class="t" style="left:468px;width:1200px;text-align:center;top:116.84px;font-size:12px;color:#3c3c3c;"><span style="transform:scaleX(0.9300);transform-origin:50% 0">de Dados</span></div><svg class="s" style="left:1095.8871953125px;top:122px;" width="6" height="4" viewBox="0 0 6 4"><path d="M0 0 L6 0 L3 3 Z" fill="#666"/></svg><svg class="s" style="left:1120px;top:65px;" width="32" height="32" viewBox="0 0 32 32"><rect x="1.5" y="1.5" width="10" height="26" fill="#fff" stroke="#6d6d6d"/><path d="M1.5 7 h10 M1.5 12 h10 M1.5 17 h10 M1.5 22 h10" stroke="#6d6d6d"/><path d="M13 14 h7 M17 11 L20 14 L17 17" stroke="#3b77bf" stroke-width="1.6" fill="none"/><rect x="21.5" y="11.5" width="8" height="5" fill="#fff" stroke="#d24726"/></svg><div class="t" style="left:535px;width:1200px;text-align:center;top:100.84px;font-size:12px;color:#3c3c3c;"><span style="transform:scaleX(0.9300);transform-origin:50% 0">Consolidar</span></div><svg class="s" style="left:1176px;top:65px;" width="32" height="32" viewBox="0 0 32 32"><rect x="1.5" y="10.5" width="10" height="8" fill="#f4f4f4" stroke="#b5b5b5"/><rect x="18.5" y="1.5" width="10" height="8" fill="#f4f4f4" stroke="#b5b5b5"/><rect x="18.5" y="19.5" width="10" height="8" fill="#f4f4f4" stroke="#b5b5b5"/><path d="M11.5 14 L18.5 6 M11.5 14 L18.5 23" stroke="#b5b5b5"/></svg><div class="t" style="left:591px;width:1200px;text-align:center;top:100.84px;font-size:12px;color:#a6a6a6;"><span style="transform:scaleX(0.9300);transform-origin:50% 0">Relações</span></div><svg class="s" style="left:1249px;top:64px;" width="32" height="32" viewBox="0 0 32 32"><path d="M1 6 Q14 -1 26 5 L28 25 L17 31 L3 25 Z" fill="#7cb82f"/><path d="M5 10 L17 6 L28 11" stroke="#fff" stroke-width="1" fill="none"/><path d="M17 6 V30" stroke="#fff"/><path d="M18 14 L28 16 M18 19 L28 20.5 M18 24 L28 25 M22.5 9 V28" stroke="#fff" stroke-width="1"/><path d="M7 13 V24 M7 11 V12 M10 22 L12 18 L14 22 M12 18 V26" stroke="#fff" stroke-width="1.2" fill="none"/></svg><div class="t" style="left:664px;width:1200px;text-align:center;top:100.84px;font-size:12px;color:#3c3c3c;"><span style="transform:scaleX(0.9300);transform-origin:50% 0">Gerenciar</span></div><div class="t" style="left:664px;width:1200px;text-align:center;top:116.84px;font-size:12px;color:#3c3c3c;"><span style="transform:scaleX(0.9300);transform-origin:50% 0">Modelo de Dados</span></div><div class="t" style="left:476px;width:1200px;text-align:center;top:135.84px;font-size:12px;color:#666666;"><span style="transform:scaleX(0.9300);transform-origin:50% 0">Ferramentas de Dados</span></div><div class="r" style="left:1319px;top:62px;width:1px;height:84px;background:#d4d4d4;"></div><svg class="s" style="left:1342px;top:65px;" width="32" height="32" viewBox="0 0 32 32"><rect x="1.5" y="1.5" width="24" height="24" fill="#fff" stroke="#8a8a8a"/><path d="M1.5 7.5 h24 M1.5 13.5 h24 M1.5 19.5 h24 M7.5 1.5 v24 M13.5 1.5 v24 M19.5 1.5 v24" stroke="#8a8a8a" stroke-width="0.8"/><rect x="4" y="7" width="6" height="6" fill="#fff" stroke="#e07b39" stroke-width="1.2"/><rect x="4" y="16" width="6" height="6" fill="#fff" stroke="#e07b39" stroke-width="1.2"/><path d="M17 13 a5 5 0 1 1 7 5 q-2 1 -2 4" stroke="#3b77bf" stroke-width="3" fill="none"/><circle cx="22" cy="28" r="1.8" fill="#3b77bf"/></svg><div class="t" style="left:756px;width:1200px;text-align:center;top:100.84px;font-size:12px;color:#3c3c3c;"><span style="transform:scaleX(0.9300);transform-origin:50% 0">Teste de</span></div><div class="t" style="left:751px;width:1200px;text-align:center;top:116.84px;font-size:12px;color:#3c3c3c;"><span style="transform:scaleX(0.9300);transform-origin:50% 0">Hipóteses</span></div><svg class="s" style="left:1379.8135625px;top:122px;" width="6" height="4" viewBox="0 0 6 4"><path d="M0 0 L6 0 L3 3 Z" fill="#666"/></svg><svg class="s" style="left:1406px;top:65px;" width="32" height="32" viewBox="0 0 32 32"><rect x="1.5" y="1.5" width="26" height="22" fill="#fff" stroke="#6d6d6d"/><path d="M1.5 6.5 h26 M1.5 11.5 h26 M1.5 16.5 h26 M8 1.5 v22 M14.5 1.5 v22 M21 1.5 v22" stroke="#9a9a9a" stroke-width="0.8"/><path d="M3 21 L9 14 L14 18 L24 6" stroke="#3b77bf" stroke-width="2" fill="none"/><path d="M14 18 L24 6" stroke="#e0502b" stroke-width="2"/><path d="M19 5 L25 5 L25 11" stroke="#e0502b" stroke-width="2" fill="none"/><path d="M4 24 v3 h8 l2 -3" stroke="#6d6d6d" fill="#fff"/></svg><div class="t" style="left:820px;width:1200px;text-align:center;top:100.84px;font-size:12px;color:#3c3c3c;"><span style="transform:scaleX(0.9300);transform-origin:50% 0">Planilha de</span></div><div class="t" style="left:820px;width:1200px;text-align:center;top:116.84px;font-size:12px;color:#3c3c3c;"><span style="transform:scaleX(0.9300);transform-origin:50% 0">Previsão</span></div><div class="t" style="left:788px;width:1200px;text-align:center;top:135.84px;font-size:12px;color:#666666;"><span style="transform:scaleX(0.9300);transform-origin:50% 0">Previsão</span></div><div class="r" style="left:1457px;top:62px;width:1px;height:84px;background:#d4d4d4;"></div><svg class="s" style="left:1469px;top:66px;" width="32" height="32" viewBox="0 0 32 32"><path d="M1 4 H12 M9 1 L12.5 4 L9 7" stroke="#5fa37a" stroke-width="1.6" fill="none"/><path d="M14 4 h-3 v26 h3" stroke="#6d6d6d" fill="none"/><rect x="7.5" y="13.5" width="8" height="8" fill="#fff" stroke="#6d6d6d"/><path d="M9.5 17.5 h4 M11.5 15.5 v4" stroke="#6d6d6d"/><rect x="18.5" y="4.5" width="10" height="25" fill="#fff" stroke="#6d6d6d"/><path d="M18.5 10.5 h10 M18.5 16.5 h10 M18.5 22.5 h10" stroke="#6d6d6d"/><path d="M21 7.5 h5 M21 13.5 h5 M21 19.5 h5 M21 25.5 h5" stroke="#3b77bf"/></svg><div class="t" style="left:884px;width:1200px;text-align:center;top:100.84px;font-size:12px;color:#3c3c3c;"><span style="transform:scaleX(0.9300);transform-origin:50% 0">Agrupar</span></div><svg class="s" style="left:1481px;top:122px;" width="6" height="4" viewBox="0 0 6 4"><path d="M0 0 L6 0 L3 3 Z" fill="#666"/></svg><svg class="s" style="left:1526px;top:66px;" width="32" height="32" viewBox="0 0 32 32"><path d="M13 4 H2 M5 1 L1.5 4 L5 7" stroke="#5fa37a" stroke-width="1.6" fill="none"/><path d="M14 4 h-3 v26 h3" stroke="#6d6d6d" fill="none"/><rect x="7.5" y="13.5" width="8" height="8" fill="#fff" stroke="#e0502b"/><path d="M8 21 L15 14" stroke="#e0502b"/><rect x="18.5" y="4.5" width="10" height="25" fill="#fff" stroke="#6d6d6d"/><path d="M18.5 10.5 h10 M18.5 16.5 h10 M18.5 22.5 h10" stroke="#6d6d6d"/><path d="M21 7.5 h5 M21 13.5 h5 M21 19.5 h5 M21 25.5 h5" stroke="#3b77bf"/></svg><div class="t" style="left:941px;width:1200px;text-align:center;top:100.84px;font-size:12px;color:#3c3c3c;"><span style="transform:scaleX(0.9300);transform-origin:50% 0">Desagrupar</span></div><svg class="s" style="left:1538px;top:122px;" width="6" height="4" viewBox="0 0 6 4"><path d="M0 0 L6 0 L3 3 Z" fill="#666"/></svg><svg class="s" style="left:1583px;top:65px;" width="32" height="32" viewBox="0 0 32 32"><rect x="2.5" y="4.5" width="10" height="24" fill="#fff" stroke="#6d6d6d"/><path d="M2.5 16.5 h10" stroke="#6d6d6d"/><path d="M5 10.5 h5 M7.5 8 v5 M5 22.5 h5 M7.5 20 v5" stroke="#6d6d6d"/><rect x="12.5" y="4.5" width="17" height="24" fill="#fff" stroke="#6d6d6d"/><path d="M12.5 10.5 h17 M12.5 16.5 h17 M12.5 22.5 h17 M21 4.5 v24" stroke="#6d6d6d"/><path d="M15 7.5 h4 M23 7.5 h4 M15 19.5 h4 M23 19.5 h4" stroke="#3b77bf"/><path d="M15 13.5 h4 M23 13.5 h4 M15 25.5 h4 M23 25.5 h4" stroke="#e07b39"/></svg><div class="t" style="left:998px;width:1200px;text-align:center;top:100.84px;font-size:12px;color:#3c3c3c;"><span style="transform:scaleX(0.9300);transform-origin:50% 0">Subtotal</span></div><svg class="s" style="left:1627px;top:64px;" width="16" height="16" viewBox="0 0 16 16"><path d="M0.5 4.5 h5 M3 2 v5" stroke="#b5b5b5"/><path d="M7 1.5 h5 M7 5.5 h8 M7 9.5 h8 M7 13.5 h8 M14.5 4 v11" stroke="#b5b5b5" fill="none"/></svg><div class="t" style="left:1645px;top:66.84px;font-size:12px;color:#a6a6a6;"><span style="transform:scaleX(0.9300);transform-origin:0 0">Mostrar Detalhe</span></div><svg class="s" style="left:1627px;top:87px;" width="16" height="16" viewBox="0 0 16 16"><path d="M0.5 4.5 h5" stroke="#b5b5b5"/><path d="M7 1.5 h5 M7 5.5 h8 M7 9.5 h8 M7 13.5 h8 M14.5 4 v11" stroke="#b5b5b5" fill="none"/></svg><div class="t" style="left:1645px;top:89.84px;font-size:12px;color:#a6a6a6;"><span style="transform:scaleX(0.9300);transform-origin:0 0">Ocultar Detalhe</span></div><div class="t" style="left:991px;width:1200px;text-align:center;top:135.84px;font-size:12px;color:#666666;"><span style="transform:scaleX(0.9300);transform-origin:50% 0">Estrutura de Tópicos</span></div><svg class="s" style="left:1728px;top:140px;" width="8" height="8" viewBox="0 0 8 8"><path d="M0.5 0.5 H7.5 V7.5 H0.5 Z" fill="none" stroke="#888" stroke-width="0.8"/><path d="M2 2 L6.5 6.5 M6.5 3.5 V6.5 H3.5" stroke="#666" fill="none"/></svg><div class="r" style="left:1741px;top:62px;width:1px;height:84px;background:#d4d4d4;"></div><div class="r" style="left:0px;top:151px;width:1920px;height:86px;background:#e6e6e6;"></div><div class="r" style="left:6px;top:161px;width:102px;height:26px;background:#fff;box-sizing:border-box;border:1px solid #c6c6c6"></div><div class="t" style="left:13px;top:168.0px;font-size:13px;color:#262626;"><span style="transform:scaleX(1.0062);transform-origin:0 0">E2</span></div><svg class="s" style="left:94px;top:172px;" width="6" height="4" viewBox="0 0 6 4"><path d="M0 0 L6 0 L3 3 Z" fill="#555"/></svg><svg class="s" style="left:122px;top:169px;" width="3" height="11" viewBox="0 0 3 11"><circle cx="1.5" cy="1.5" r="1" fill="#a0a0a0"/><circle cx="1.5" cy="5.5" r="1" fill="#a0a0a0"/><circle cx="1.5" cy="9.5" r="1" fill="#a0a0a0"/></svg><div class="r" style="left:138px;top:161px;width:110px;height:26px;background:#fff;box-sizing:border-box;border:1px solid #c6c6c6"></div><svg class="s" style="left:152px;top:169px;" width="10" height="10" viewBox="0 0 10 10"><path d="M0.5 0.5 L9.5 9.5 M9.5 0.5 L0.5 9.5" stroke="#bdbdbd" stroke-width="1.3"/></svg><svg class="s" style="left:187px;top:168px;" width="13" height="11" viewBox="0 0 13 11"><path d="M1 5.5 L4.5 9.5 L12 1" stroke="#c8c8c8" stroke-width="2.4" fill="none"/></svg><div class="t" style="left:224px;top:167.15px;font-size:14px;color:#555;font-weight:bold;font-family:'Liberation Serif';font-style:italic;"><span style="transform-origin:0 0">f</span></div><div class="t" style="left:229px;top:169.69px;font-size:11px;color:#555;font-weight:bold;font-family:'Liberation Serif';font-style:italic;"><span style="transform-origin:0 0">x</span></div><div class="r" style="left:251px;top:161px;width:1669px;height:66px;background:#fff;box-sizing:border-box;border:1px solid #c6c6c6"></div><div class="r" style="left:0px;top:619px;width:1920px;height:27px;background:#e6e6e6;"></div><div class="r" style="left:0px;top:646px;width:1920px;height:1px;background:#c6c6c6;"></div><div class="r" style="left:0px;top:647px;width:1920px;height:21px;background:#f0f0f0;"></div><div class="r" style="left:0px;top:668px;width:1920px;height:1px;background:#217346;"></div><svg class="s" style="left:27px;top:627px;" width="6" height="9" viewBox="0 0 6 9"><path d="M5 0 L0.5 4.5 L5 9 Z" fill="#bdbdbd"/></svg><svg class="s" style="left:56px;top:627px;" width="6" height="9" viewBox="0 0 6 9"><path d="M1 0 L5.5 4.5 L1 9 Z" fill="#bdbdbd"/></svg><div class="r" style="left:101px;top:618px;width:65px;height:25px;background:#fff;"></div><div class="r" style="left:101px;top:641px;width:65px;height:2px;background:#217346;"></div><div class="r" style="left:101px;top:618px;width:1px;height:25px;background:#8f8f8f;"></div><div class="r" style="left:165px;top:618px;width:1px;height:25px;background:#8f8f8f;"></div><div class="t" style="left:-467px;width:1200px;text-align:center;top:624.15px;font-size:14px;color:#217346;font-weight:bold;"><span style="transform:scaleX(0.8930);transform-origin:50% 0">Sheet1</span></div><svg class="s" style="left:198px;top:623px;" width="17" height="17" viewBox="0 0 17 17"><circle cx="8.5" cy="8.5" r="7.5" fill="none" stroke="#6d6d6d" stroke-width="1.2"/><path d="M8.5 4.5 v8 M4.5 8.5 h8" stroke="#6d6d6d" stroke-width="1.6"/></svg><div class="t" style="left:59px;top:650.84px;font-size:12px;color:#3c3c3c;"><span style="transform:scaleX(0.9464);transform-origin:0 0">7798 de 16524 registros localizados.</span></div><svg class="s" style="left:1139px;top:627px;" width="3" height="11" viewBox="0 0 3 11"><circle cx="1.5" cy="1.5" r="1" fill="#a0a0a0"/><circle cx="1.5" cy="5.5" r="1" fill="#a0a0a0"/><circle cx="1.5" cy="9.5" r="1" fill="#a0a0a0"/></svg><div class="r" style="left:1156px;top:625px;width:717px;height:15px;background:#dcdcdc;"></div><div class="r" style="left:1156px;top:625px;width:15px;height:15px;background:#fff;box-sizing:border-box;border:1px solid #ababab"></div><svg class="s" style="left:1161px;top:629px;" width="5" height="7" viewBox="0 0 5 7"><path d="M4.5 0 L0 3.5 L4.5 7 Z" fill="#555"/></svg><div class="r" style="left:1171px;top:625px;width:267px;height:15px;background:#fff;box-sizing:border-box;border:1px solid #ababab"></div><div class="r" style="left:1859px;top:625px;width:15px;height:15px;background:#fff;box-sizing:border-box;border:1px solid #ababab"></div><svg class="s" style="left:1864px;top:629px;" width="5" height="7" viewBox="0 0 5 7"><path d="M0.5 0 L5 3.5 L0.5 7 Z" fill="#555"/></svg><div class="r" style="left:1595px;top:647px;width:38px;height:20px;background:#c8c8c8;"></div><svg class="s" style="left:1606px;top:650px;" width="15" height="14" viewBox="0 0 15 14"><rect x="0.5" y="0.5" width="14" height="13" fill="none" stroke="#555"/><path d="M0.5 4.5 h14 M0.5 9 h14 M5 0.5 v13 M10 0.5 v13" stroke="#555"/></svg><svg class="s" style="left:1644px;top:650px;" width="15" height="14" viewBox="0 0 15 14"><rect x="0.5" y="0.5" width="14" height="13" fill="none" stroke="#555"/><rect x="3.5" y="3" width="8" height="8" fill="none" stroke="#555"/><path d="M5 5.5 h5 M5 8 h5" stroke="#555"/></svg><svg class="s" style="left:1682px;top:650px;" width="15" height="14" viewBox="0 0 15 14"><rect x="0.5" y="0.5" width="14" height="13" fill="none" stroke="#555"/><path d="M7.5 0.5 v7 M3.5 7.5 h8 M3.5 0.5 v7 M11.5 0.5 v7" stroke="#555"/></svg><div class="r" style="left:1711px;top:656px;width:7px;height:2px;background:#555;"></div><div class="r" style="left:1723px;top:657px;width:100px;height:1px;background:#b5b5b5;"></div><div class="r" style="left:1772px;top:651px;width:4px;height:11px;background:#555;"></div><svg class="s" style="left:1828px;top:651px;" width="11" height="11" viewBox="0 0 11 11"><path d="M5.5 0.5 v10 M0.5 5.5 h10" stroke="#555" stroke-width="2"/></svg><div class="t" style="left:1849px;top:651.84px;font-size:12px;color:#3c3c3c;"><span style="transform:scaleX(0.8471);transform-origin:0 0">100%</span></div><div class="t" style="left:8px;top:650.84px;font-size:12px;color:#3c3c3c;"><span style="transform:scaleX(0.9616);transform-origin:0 0">Pronto</span></div><div class="r" style="left:0px;top:0px;width:1px;height:669px;background:#217346;"></div></div></div></div><div class="clip" style="left:1873px;top:0;width:1835px;height:669px"><div style="position:absolute;left:-1873px;top:0"><div style="position:absolute;left:1832px;top:0;width:0;height:0"><div class="r" style="left:0px;top:0px;width:1920px;height:58px;background:#217346;"></div><svg class="s" style="left:21px;top:9px;" width="15" height="15" viewBox="0 0 15 15"><path d="M1 1 H14 V14 H1 Z" fill="none" stroke="#fff" stroke-width="1.6"/><path d="M4 1.5 V5.5 H11 V1.5" fill="none" stroke="#fff" stroke-width="1.4"/><path d="M4 14 V9 H11 V14" fill="none" stroke="#fff" stroke-width="1.4"/><rect x="6" y="11" width="2" height="3" fill="#fff"/></svg><svg class="s" style="left:63px;top:8px;" width="17" height="16" viewBox="0 0 17 16"><path d="M2 6 H10 a4.5 4.5 0 0 1 0 9 H8" fill="none" stroke="#fff" stroke-width="1.8"/><path d="M6 1.5 L1.8 6 L6 10.5" fill="none" stroke="#fff" stroke-width="1.8"/></svg><svg class="s" style="left:87px;top:14px;" width="6" height="4" viewBox="0 0 6 4"><path d="M0 0 L6 0 L3 3 Z" fill="#fff"/></svg><svg class="s" style="left:107px;top:8px;" width="17" height="16" viewBox="0 0 17 16"><path d="M15 6 H7 a4.5 4.5 0 0 0 0 9 H9" fill="none" stroke="#5a9e78" stroke-width="1.8"/><path d="M11 1.5 L15.2 6 L11 10.5" fill="none" stroke="#5a9e78" stroke-width="1.8"/></svg><svg class="s" style="left:131px;top:14px;" width="6" height="4" viewBox="0 0 6 4"><path d="M0 0 L6 0 L3 3 Z" fill="#5a9e78"/></svg><svg class="s" style="left:157px;top:12px;" width="8" height="9" viewBox="0 0 8 9"><path d="M1 1 H7" stroke="#fff" stroke-width="1.2"/><path d="M1 3.5 H7 L4 7 Z" fill="#fff"/></svg><div class="t" style="left:799px;top:12.84px;font-size:12px;color:#fff;"><span style="transform:scaleX(0.8823);transform-origin:0 0">FULL_PRELDOC20250925073956_SUPERVISOR.xlsx - Excel</span></div><svg class="s" style="left:1730px;top:11px;" width="14" height="11" viewBox="0 0 14 11"><rect x="0.5" y="0.5" width="13" height="10" fill="none" stroke="#fff"/><path d="M0.5 2.5 H13.5" stroke="#fff"/><path d="M7 9 V4.5 M4.8 6.5 L7 4.2 L9.2 6.5" stroke="#fff" fill="none"/></svg><div class="r" style="left:1778px;top:17px;width:10px;height:2px;background:#fff;"></div><svg class="s" style="left:1824px;top:11px;" width="11" height="11" viewBox="0 0 11 11"><rect x="0.5" y="0.5" width="10" height="10" fill="none" stroke="#fff"/><path d="M0.5 1.5 H10.5" stroke="#fff" stroke-width="1.5"/></svg><svg class="s" style="left:1869px;top:11px;" width="11" height="11" viewBox="0 0 11 11"><path d="M0.5 0.5 L10.5 10.5 M10.5 0.5 L0.5 10.5" stroke="#fff" stroke-width="1.3"/></svg><div class="t" style="left:9px;top:39.0px;font-size:13px;color:#ffffff;"><span style="transform:scaleX(0.9528);transform-origin:0 0">Arquivo</span></div><div class="t" style="left:77px;top:39.0px;font-size:13px;color:#ffffff;"><span style="transform:scaleX(0.9052);transform-origin:0 0">Página Inicial</span></div><div class="t" style="left:176px;top:39.0px;font-size:13px;color:#ffffff;"><span style="transform:scaleX(0.8859);transform-origin:0 0">Inserir</span></div><div class="t" style="left:237px;top:39.0px;font-size:13px;color:#ffffff;"><span style="transform:scaleX(0.8992);transform-origin:0 0">Layout da Página</span></div><div class="t" style="left:357px;top:39.0px;font-size:13px;color:#ffffff;"><span style="transform:scaleX(0.9044);transform-origin:0 0">Fórmulas</span></div><div class="t" style="left:497px;top:39.0px;font-size:13px;color:#ffffff;"><span style="transform:scaleX(0.8729);transform-origin:0 0">Revisão</span></div><div class="t" style="left:566px;top:39.0px;font-size:13px;color:#ffffff;"><span style="transform:scaleX(0.8921);transform-origin:0 0">Exibir</span></div><div class="t" style="left:624px;top:39.0px;font-size:13px;color:#ffffff;"><span style="transform:scaleX(0.9374);transform-origin:0 0">Acrobat</span></div><div class="t" style="left:695px;top:39.0px;font-size:13px;color:#ffffff;"><span style="transform:scaleX(0.9083);transform-origin:0 0">Power Pivot</span></div><div class="r" style="left:422px;top:34px;width:60px;height:24px;background:#f3f3f3;"></div><div class="t" style="left:-148.0px;width:1200px;text-align:center;top:39.0px;font-size:13px;color:#217346;"><span style="transform:scaleX(0.9314);transform-origin:50% 0">Dados</span></div><svg class="s" style="left:788px;top:39px;" width="11" height="15" viewBox="0 0 11 15"><path d="M5.5 1 a4.5 4.5 0 0 1 2.5 8.3 V11 H3 V9.3 A4.5 4.5 0 0 1 5.5 1 Z" fill="none" stroke="#c5dccf" stroke-width="1.1"/><path d="M3.5 13 H7.5" stroke="#c5dccf"/></svg><div class="t" style="left:804px;top:39.0px;font-size:13px;color:#c5dccf;"><span style="transform:scaleX(0.8806);transform-origin:0 0">O que você deseja fazer...</span></div><div class="t" style="left:1679px;top:39.0px;font-size:13px;color:#fff;"><span style="transform:scaleX(0.9099);transform-origin:0 0">Camila A. Oliveira</span></div><div class="r" style="left:1783px;top:34px;width:137px;height:23px;background:#1a5c37;"></div><svg class="s" style="left:1790px;top:37px;" width="15" height="18" viewBox="0 0 15 18"><circle cx="7" cy="5.5" r="4.3" fill="none" stroke="#fff" stroke-width="1.3"/><path d="M1 17 a6.5 6.5 0 0 1 10 -6" fill="none" stroke="#fff" stroke-width="1.3"/><path d="M11 11 v6 M8 14 h6" stroke="#fff" stroke-width="1.3"/></svg><div class="t" style="left:1810px;top:39.0px;font-size:13px;color:#fff;"><span style="transform:scaleX(0.9406);transform-origin:0 0">Compartilhar</span></div><div class="r" style="left:0px;top:58px;width:1920px;height:92px;background:#f3f3f3;"></div><div class="r" style="left:0px;top:150px;width:1920px;height:1px;background:#d4d4d4;"></div><svg class="s" style="left:14px;top:66px;" width="32" height="32" viewBox="0 0 32 32"><path d="M1.5 0.5 L15.5 0.5 L22.5 7.5 L22.5 27.5 L1.5 27.5 Z" fill="#fff" stroke="#6d6d6d"/><path d="M15.5 0.5 L15.5 7.5 L22.5 7.5" fill="none" stroke="#6d6d6d"/><path d="M8 11 L19 9 L19 31 L8 29 Z" fill="#a4262c"/><rect x="19" y="10" width="9" height="20" rx="4" fill="#a4262c"/><path d="M20 14 h7 M20 19 h7 M20 24 h7" stroke="#fff" stroke-width="1.2"/><path d="M10.5 24 L13.2 14 L14.8 14 L17.5 24 M11.8 20.5 h4.4" stroke="#fff" stroke-width="1.6" fill="none"/></svg><div class="t" style="left:-574px;width:1200px;text-align:center;top:100.84px;font-size:12px;color:#3c3c3c;"><span style="transform:scaleX(0.9300);transform-origin:50% 0">Do</span></div><div class="t" style="left:-574px;width:1200px;text-align:center;top:116.84px;font-size:12px;color:#3c3c3c;"><span style="transform:scaleX(0.9300);transform-origin:50% 0">Access</span></div><svg class="s" style="left:56px;top:66px;" width="32" height="32" viewBox="0 0 32 32"><path d="M1.5 0.5 L15.5 0.5 L22.5 7.5 L22.5 27.5 L1.5 27.5 Z" fill="#fff" stroke="#6d6d6d"/><path d="M15.5 0.5 L15.5 7.5 L22.5 7.5" fill="none" stroke="#6d6d6d"/><circle cx="20" cy="22" r="7.5" fill="#fff" stroke="#3b77bf" stroke-width="1.4"/><ellipse cx="20" cy="22" rx="3.2" ry="7.5" fill="none" stroke="#3b77bf" stroke-width="1.2"/><path d="M12.5 19.5 h15 M12.5 24.5 h15" stroke="#3b77bf" stroke-width="1.2"/></svg><div class="t" style="left:-532px;width:1200px;text-align:center;top:100.84px;font-size:12px;color:#3c3c3c;"><span style="transform:scaleX(0.9300);transform-origin:50% 0">Da</span></div><div class="t" style="left:-532px;width:1200px;text-align:center;top:116.84px;font-size:12px;color:#3c3c3c;"><span style="transform:scaleX(0.9300);transform-origin:50% 0">Web</span></div><svg class="s" style="left:98px;top:66px;" width="32" height="32" viewBox="0 0 32 32"><path d="M1.5 0.5 L15.5 0.5 L22.5 7.5 L22.5 27.5 L1.5 27.5 Z" fill="#fff" stroke="#6d6d6d"/><path d="M15.5 0.5 L15.5 7.5 L22.5 7.5" fill="none" stroke="#6d6d6d"/><rect x="15.5" y="15.5" width="12" height="14" fill="#fff" stroke="#6d6d6d"/><path d="M18 20 h7 M18 23 h7 M18 26 h7" stroke="#8a8a8a"/></svg><div class="t" style="left:-490px;width:1200px;text-align:center;top:100.84px;font-size:12px;color:#3c3c3c;"><span style="transform:scaleX(0.9300);transform-origin:50% 0">De</span></div><div class="t" style="left:-490px;width:1200px;text-align:center;top:116.84px;font-size:12px;color:#3c3c3c;"><span style="transform:scaleX(0.9300);transform-origin:50% 0">Texto</span></div><svg class="s" style="left:147px;top:66px;" width="32" height="32" viewBox="0 0 32 32"><path d="M1.5 0.5 L15.5 0.5 L22.5 7.5 L22.5 27.5 L1.5 27.5 Z" fill="#fff" stroke="#6d6d6d"/><path d="M15.5 0.5 L15.5 7.5 L22.5 7.5" fill="none" stroke="#6d6d6d"/><circle cx="19.5" cy="21" r="4" fill="#fff" stroke="#3b77bf" stroke-width="2"/><path d="M19.5 13.5 v3 M19.5 25.5 v3 M12 21 h3 M24 21 h3" stroke="#3b77bf" stroke-width="2"/></svg><div class="t" style="left:-441px;width:1200px;text-align:center;top:100.84px;font-size:12px;color:#3c3c3c;"><span style="transform:scaleX(0.9300);transform-origin:50% 0">De Outras</span></div><div class="t" style="left:-446px;width:1200px;text-align:center;top:116.84px;font-size:12px;color:#3c3c3c;"><span style="transform:scaleX(0.9300);transform-origin:50% 0">Fontes</span></div><svg class="s" style="left:175.05910625px;top:122px;" width="6" height="4" viewBox="0 0 6 4"><path d="M0 0 L6 0 L3 3 Z" fill="#666"/></svg><div class="r" style="left:193px;top:66px;width:1px;height:60px;background:#d4d4d4;"></div><svg class="s" style="left:210px;top:66px;" width="32" height="32" viewBox="0 0 32 32"><path d="M3.5 0.5 L17.5 0.5 L24.5 7.5 L24.5 27.5 L3.5 27.5 Z" fill="#fff" stroke="#6d6d6d"/><path d="M17.5 0.5 L17.5 7.5 L24.5 7.5" fill="none" stroke="#6d6d6d"/><path d="M7 8 h10 M7 11 h12 M7 14 h12 M7 17 h10 M7 20 h8" stroke="#8a8a8a"/><rect x="17" y="16" width="10" height="14" rx="2" fill="#e8c27a"/><ellipse cx="22" cy="16.5" rx="5" ry="2" fill="#d4a84e"/></svg><div class="t" style="left:-375px;width:1200px;text-align:center;top:100.84px;font-size:12px;color:#3c3c3c;"><span style="transform:scaleX(0.9300);transform-origin:50% 0">Conexões</span></div><div class="t" style="left:-375px;width:1200px;text-align:center;top:116.84px;font-size:12px;color:#3c3c3c;"><span style="transform:scaleX(0.9300);transform-origin:50% 0">Existentes</span></div><div class="t" style="left:-470px;width:1200px;text-align:center;top:135.84px;font-size:12px;color:#666666;"><span style="transform:scaleX(0.9300);transform-origin:50% 0">Obter Dados Externos</span></div><div class="r" style="left:258px;top:62px;width:1px;height:84px;background:#d4d4d4;"></div><svg class="s" style="left:275px;top:64px;" width="32" height="32" viewBox="0 0 32 32"><path d="M8 2 L3 13 L8 13 L5 22 L13 9 L8 9 L11 2 Z" fill="#f0b54a"/><rect x="9" y="7" width="13" height="20" rx="3" fill="#777"/><ellipse cx="15.5" cy="8" rx="6.5" ry="2.5" fill="#999"/><rect x="14.5" y="16.5" width="16" height="13" fill="#fff" stroke="#6d6d6d"/><rect x="14.5" y="16.5" width="16" height="3" fill="#3b77bf"/><path d="M14.5 23 h16 M14.5 26 h16 M20 19.5 v10 M25 19.5 v10" stroke="#8a8a8a" stroke-width="0.8"/></svg><div class="t" style="left:-308px;width:1200px;text-align:center;top:100.84px;font-size:12px;color:#3c3c3c;"><span style="transform:scaleX(0.9300);transform-origin:50% 0">Nova</span></div><div class="t" style="left:-313px;width:1200px;text-align:center;top:116.84px;font-size:12px;color:#3c3c3c;"><span style="transform:scaleX(0.9300);transform-origin:50% 0">Consulta</span></div><svg class="s" style="left:313.0235625px;top:122px;" width="6" height="4" viewBox="0 0 6 4"><path d="M0 0 L6 0 L3 3 Z" fill="#666"/></svg><svg class="s" style="left:326px;top:64px;" width="16" height="16" viewBox="0 0 16 16"><rect x="0.5" y="0.5" width="15" height="14" fill="#fff" stroke="#6d6d6d"/><rect x="1" y="1" width="14" height="2" fill="#3b77bf"/><path d="M11 3 v11" stroke="#6d6d6d"/><path d="M12.5 6 h1.5 M12.5 8.5 h1.5 M12.5 11 h1.5" stroke="#6d6d6d"/></svg><div class="t" style="left:345px;top:66.84px;font-size:12px;color:#3c3c3c;"><span style="transform:scaleX(0.9300);transform-origin:0 0">Mostrar Consultas</span></div><svg class="s" style="left:326px;top:87px;" width="16" height="16" viewBox="0 0 16 16"><rect x="0.5" y="0.5" width="15" height="14" fill="#fff" stroke="#6d6d6d"/><rect x="1" y="1" width="14" height="2.5" fill="#3b77bf"/><path d="M1 6.5 h14 M1 9.5 h14 M1 12.5 h14 M5.5 3.5 v11 M10.5 3.5 v11" stroke="#8a8a8a" stroke-width="0.8"/></svg><div class="t" style="left:345px;top:89.84px;font-size:12px;color:#3c3c3c;"><span style="transform:scaleX(0.9300);transform-origin:0 0">Da Tabela</span></div><svg class="s" style="left:326px;top:110px;" width="16" height="16" viewBox="0 0 16 16"><path d="M1.0 1.0 L7.0 1.0 L11.0 5.0 L11.0 14.0 L1.0 14.0 Z" fill="#fff" stroke="#6d6d6d"/><path d="M7.0 1.0 L7.0 5.0 L11.0 5.0" fill="none" stroke="#6d6d6d"/><circle cx="11" cy="12" r="4.3" fill="#fff" stroke="#3b77bf" stroke-width="1.2"/><path d="M11 9.5 v2.8 h2" stroke="#3b77bf" fill="none"/></svg><div class="t" style="left:345px;top:112.84px;font-size:12px;color:#3c3c3c;"><span style="transform:scaleX(0.9300);transform-origin:0 0">Fontes Recentes</span></div><div class="t" style="left:-244px;width:1200px;text-align:center;top:135.84px;font-size:12px;color:#666666;"><span style="transform:scaleX(0.9300);transform-origin:50% 0">Obter e Transformar</span></div><div class="r" style="left:453px;top:62px;width:1px;height:84px;background:#d4d4d4;"></div><svg class="s" style="left:468px;top:64px;" width="32" height="32" viewBox="0 0 32 32"><rect x="2.5" y="1.5" width="16" height="22" fill="#fff" stroke="#6d6d6d"/><rect x="5.5" y="3.5" width="16" height="22" fill="#fff" stroke="#6d6d6d"/><path d="M8.5 5.5 L20.5 5.5 L25.5 10.5 L25.5 27.5 L8.5 27.5 Z" fill="#fff" stroke="#6d6d6d"/><path d="M20.5 5.5 L20.5 10.5 L25.5 10.5" fill="none" stroke="#6d6d6d"/><path d="M17 24 a6 6 0 0 1 10 -5" stroke="#5fa37a" stroke-width="2.6" fill="none"/><path d="M29 26 a6 6 0 0 1 -10 4" stroke="#5fa37a" stroke-width="2.6" fill="none"/></svg><div class="t" style="left:-118px;width:1200px;text-align:center;top:100.84px;font-size:12px;color:#3c3c3c;"><span style="transform:scaleX(0.9300);transform-origin:50% 0">Atualizar</span></div><div class="t" style="left:-123px;width:1200px;text-align:center;top:116.84px;font-size:12px;color:#3c3c3c;"><span style="transform:scaleX(0.9300);transform-origin:50% 0">Tudo</span></div><svg class="s" style="left:493.5118421875px;top:122px;" width="6" height="4" viewBox="0 0 6 4"><path d="M0 0 L6 0 L3 3 Z" fill="#666"/></svg><svg class="s" style="left:511px;top:64px;" width="16" height="16" viewBox="0 0 16 16"><rect x="0.5" y="0.5" width="15" height="11" fill="#fff" stroke="#6d6d6d"/><path d="M3 14 h10" stroke="#6d6d6d"/><path d="M8 3 L11 6 L8 9 L5 6 Z" fill="none" stroke="#3b77bf" stroke-width="1.2"/></svg><div class="t" style="left:530px;top:66.84px;font-size:12px;color:#3c3c3c;"><span style="transform:scaleX(0.9300);transform-origin:0 0">Conexões</span></div><svg class="s" style="left:511px;top:87px;" width="16" height="16" viewBox="0 0 16 16"><rect x="0.5" y="0.5" width="13" height="14" fill="#fafafa" stroke="#b5b5b5"/><rect x="1" y="1" width="12" height="2" fill="#c8c8c8"/><path d="M3 6 h2 M3 10 h2 M7 6 h4 M7 10 h4" stroke="#b5b5b5"/></svg><div class="t" style="left:530px;top:89.84px;font-size:12px;color:#a6a6a6;"><span style="transform:scaleX(0.9300);transform-origin:0 0">Propriedades</span></div><svg class="s" style="left:511px;top:110px;" width="16" height="16" viewBox="0 0 16 16"><path d="M1.0 1.0 L7.0 1.0 L11.0 5.0 L11.0 14.0 L1.0 14.0 Z" fill="#fafafa" stroke="#b5b5b5"/><path d="M7.0 1.0 L7.0 5.0 L11.0 5.0" fill="none" stroke="#b5b5b5"/><path d="M4 12 a2 2 0 0 1 4 0 M7 13 a2 2 0 0 0 4 0" stroke="#b5b5b5" fill="none"/></svg><div class="t" style="left:530px;top:112.84px;font-size:12px;color:#a6a6a6;"><span style="transform:scaleX(0.9300);transform-origin:0 0">Editar Links</span></div><div class="t" style="left:-69px;width:1200px;text-align:center;top:135.84px;font-size:12px;color:#666666;"><span style="transform:scaleX(0.9300);transform-origin:50% 0">Conexões</span></div><div class="r" style="left:611px;top:62px;width:1px;height:84px;background:#d4d4d4;"></div><svg class="s" style="left:620px;top:70px;" width="15" height="16" viewBox="0 0 15 16"><text x="0" y="8" font-size="9.5" font-family="Liberation Sans" fill="#3b77bf">A</text><text x="0" y="16" font-size="9.5" font-family="Liberation Sans" fill="#7a4fb5">Z</text><path d="M10.5 1 v14 M7.8 12 L10.5 15.2 L13.2 12" stroke="#444" stroke-width="1.2" fill="none"/></svg><svg class="s" style="left:620px;top:101px;" width="15" height="16" viewBox="0 0 15 16"><text x="0" y="8" font-size="9.5" font-family="Liberation Sans" fill="#7a4fb5">Z</text><text x="0" y="16" font-size="9.5" font-family="Liberation Sans" fill="#3b77bf">A</text><path d="M10.5 1 v14 M7.8 12 L10.5 15.2 L13.2 12" stroke="#444" stroke-width="1.2" fill="none"/></svg><svg class="s" style="left:651px;top:64px;" width="30" height="28" viewBox="0 0 30 28"><rect x="0.5" y="2.5" width="28" height="24" fill="#fff" stroke="#6d6d6d"/><rect x="0" y="2" width="29" height="3" fill="#3b77bf"/><path d="M14.5 5 v21" stroke="#6d6d6d"/><text x="3" y="15" font-size="11" font-family="Liberation Sans" fill="#7a4fb5">Z</text><text x="3" y="25" font-size="11" font-family="Liberation Sans" fill="#3b77bf">A</text><text x="17" y="15" font-size="11" font-family="Liberation Sans" fill="#3b77bf">A</text><text x="17" y="25" font-size="11" font-family="Liberation Sans" fill="#7a4fb5">Z</text></svg><div class="t" style="left:66px;width:1200px;text-align:center;top:100.84px;font-size:12px;color:#3c3c3c;"><span style="transform:scaleX(0.9300);transform-origin:50% 0">Classificar</span></div><div class="r" style="left:700px;top:66px;width:1px;height:60px;background:#d4d4d4;"></div><div class="r" style="left:704px;top:61px;width:42px;height:69px;background:#c6c6c6;"></div><svg class="s" style="left:710px;top:65px;" width="30" height="31" viewBox="0 0 30 31"><path d="M1 1 L29 1 L29 4 L18 15 L18 29 L12 29 L12 15 L1 4 Z" fill="#6d6d6d"/><path d="M3.5 4 L8 4 L15 11 L15 28 L14 28 L14 14 Z" fill="#f0f0f0" opacity="0.7"/></svg><div class="t" style="left:125px;width:1200px;text-align:center;top:100.84px;font-size:12px;color:#3c3c3c;"><span style="transform:scaleX(0.9300);transform-origin:50% 0">Filtro</span></div><svg class="s" style="left:749px;top:64px;" width="16" height="16" viewBox="0 0 16 16"><path d="M0 0 L15 0 L15 2 L9 8 L9 14 L6 14 L6 8 L0 2 Z" fill="#5a5a5a"/><path d="M9 9 L15 15 M15 9 L9 15" stroke="#d24726" stroke-width="1.8"/></svg><div class="t" style="left:768px;top:66.84px;font-size:12px;color:#3c3c3c;"><span style="transform:scaleX(0.9300);transform-origin:0 0">Limpar</span></div><svg class="s" style="left:749px;top:87px;" width="16" height="16" viewBox="0 0 16 16"><path d="M0 0 L15 0 L15 2 L9 8 L9 14 L6 14 L6 8 L0 2 Z" fill="#5a5a5a"/><path d="M9 12 a3.5 3.5 0 0 1 6 -2 M15 13 a3.5 3.5 0 0 1 -6 2" stroke="#3a9e6a" stroke-width="1.5" fill="none"/></svg><div class="t" style="left:768px;top:89.84px;font-size:12px;color:#3c3c3c;"><span style="transform:scaleX(0.9300);transform-origin:0 0">Reaplicar</span></div><svg class="s" style="left:749px;top:110px;" width="16" height="16" viewBox="0 0 16 16"><path d="M0 0 L15 0 L15 2 L9 8 L9 14 L6 14 L6 8 L0 2 Z" fill="#5a5a5a"/><path d="M7 16 L14 9 L16 11 L9 18 Z" fill="#3b77bf"/></svg><div class="t" style="left:768px;top:112.84px;font-size:12px;color:#3c3c3c;"><span style="transform:scaleX(0.9300);transform-origin:0 0">Avançado</span></div><div class="t" style="left:122px;width:1200px;text-align:center;top:135.84px;font-size:12px;color:#666666;"><span style="transform:scaleX(0.9300);transform-origin:50% 0">Classificar e Filtrar</span></div><div class="r" style="left:833px;top:62px;width:1px;height:84px;background:#d4d4d4;"></div><svg class="s" style="left:851px;top:64px;" width="32" height="32" viewBox="0 0 32 32"><path d="M10 10 a6.5 6 0 0 1 12 0" stroke="#3b77bf" stroke-width="2" fill="none"/><path d="M18.5 8 L22 12 L25.5 8" stroke="#3b77bf" stroke-width="2" fill="none"/><rect x="0.5" y="11.5" width="14" height="16" fill="#fff" stroke="#6d6d6d"/><path d="M3 15.5 h9 M3 18.5 h9 M3 21.5 h9 M3 24.5 h9" stroke="#3b77bf"/><rect x="17.5" y="14.5" width="12" height="11" fill="#fff" stroke="#6d6d6d"/><rect x="17.5" y="14.5" width="12" height="2" fill="#6d6d6d"/><path d="M19.5 19.5 h3 M24.5 19.5 h3 M19.5 23 h3 M24.5 23 h3" stroke="#3b77bf"/></svg><div class="t" style="left:266px;width:1200px;text-align:center;top:100.84px;font-size:12px;color:#3c3c3c;"><span style="transform:scaleX(0.9300);transform-origin:50% 0">Texto para</span></div><div class="t" style="left:266px;width:1200px;text-align:center;top:116.84px;font-size:12px;color:#3c3c3c;"><span style="transform:scaleX(0.9300);transform-origin:50% 0">Colunas</span></div><svg class="s" style="left:924px;top:64px;" width="32" height="32" viewBox="0 0 32 32"><rect x="1.5" y="2.5" width="26" height="22" fill="#fff" stroke="#8a8a8a"/><path d="M1.5 8 h26 M1.5 13 h26 M1.5 19 h26 M8 2.5 v22" stroke="#8a8a8a" stroke-width="0.8"/><rect x="9" y="9" width="12" height="4" fill="#fff" stroke="#5fa37a"/><rect x="9" y="14" width="12" height="4" fill="#d9d9d9"/><path d="M24 12 L18 22 L22 22 L19 31 L27 19 L23 19 L26 12 Z" fill="#f0b54a"/></svg><div class="t" style="left:339px;width:1200px;text-align:center;top:100.84px;font-size:12px;color:#3c3c3c;"><span style="transform:scaleX(0.9300);transform-origin:50% 0">Preenchimento</span></div><div class="t" style="left:339px;width:1200px;text-align:center;top:116.84px;font-size:12px;color:#3c3c3c;"><span style="transform:scaleX(0.9300);transform-origin:50% 0">Relâmpago</span></div><svg class="s" style="left:996px;top:65px;" width="32" height="32" viewBox="0 0 32 32"><rect x="0.5" y="1.5" width="10" height="26" fill="#fff" stroke="#6d6d6d"/><rect x="1" y="2.0" width="9" height="5" fill="#3b77bf"/><rect x="1" y="7.2" width="9" height="5" fill="#f0c36a"/><rect x="1" y="12.4" width="9" height="5" fill="#3b77bf"/><rect x="1" y="17.6" width="9" height="5" fill="#f0c36a"/><rect x="1" y="22.8" width="9" height="5" fill="#3b77bf"/><rect x="20.5" y="1.5" width="10" height="26" fill="#fff" stroke="#6d6d6d"/><rect x="21" y="2.0" width="9" height="5" fill="#3b77bf"/><rect x="21" y="7.2" width="9" height="5" fill="#f0c36a"/><path d="M21 17.5 h9 M21 22.5 h9" stroke="#6d6d6d"/><path d="M12 14 h6 M15.5 11 L18.5 14 L15.5 17" stroke="#3b77bf" stroke-width="1.8" fill="none"/></svg><div class="t" style="left:411px;width:1200px;text-align:center;top:100.84px;font-size:12px;color:#3c3c3c;"><span style="transform:scaleX(0.9300);transform-origin:50% 0">Remover</span></div><div class="t" style="left:411px;width:1200px;text-align:center;top:116.84px;font-size:12px;color:#3c3c3c;"><span style="transform:scaleX(0.9300);transform-origin:50% 0">Duplicatas</span></div><svg class="s" style="left:1058px;top:64px;" width="32" height="32" viewBox="0 0 32 32"><rect x="1.5" y="9.5" width="18" height="6" fill="#fff" stroke="#6d6d6d"/><rect x="1.5" y="19.5" width="16" height="6" fill="#fff" stroke="#6d6d6d"/><path d="M14 8 L18 12 L27 2" stroke="#5fa37a" stroke-width="2.4" fill="none"/><circle cx="23" cy="23" r="5" fill="#fff" stroke="#d24726" stroke-width="2"/><path d="M19.5 19.5 L26.5 26.5" stroke="#d24726" stroke-width="2"/></svg><div class="t" style="left:473px;width:1200px;text-align:center;top:100.84px;font-size:12px;color:#3c3c3c;"><span style="transform:scaleX(0.9300);transform-origin:50% 0">Validação</span></div><div class="t" style="left:468px;width:1200px;text-align:center;top:116.84px;font-size:12px;color:#3c3c3c;"><span style="transform:scaleX(0.9300);transform-origin:50% 0">de Dados</span></div><svg class="s" style="left:1095.8871953125px;top:122px;" width="6" height="4" viewBox="0 0 6 4"><path d="M0 0 L6 0 L3 3 Z" fill="#666"/></svg><svg class="s" style="left:1120px;top:65px;" width="32" height="32" viewBox="0 0 32 32"><rect x="1.5" y="1.5" width="10" height="26" fill="#fff" stroke="#6d6d6d"/><path d="M1.5 7 h10 M1.5 12 h10 M1.5 17 h10 M1.5 22 h10" stroke="#6d6d6d"/><path d="M13 14 h7 M17 11 L20 14 L17 17" stroke="#3b77bf" stroke-width="1.6" fill="none"/><rect x="21.5" y="11.5" width="8" height="5" fill="#fff" stroke="#d24726"/></svg><div class="t" style="left:535px;width:1200px;text-align:center;top:100.84px;font-size:12px;color:#3c3c3c;"><span style="transform:scaleX(0.9300);transform-origin:50% 0">Consolidar</span></div><svg class="s" style="left:1176px;top:65px;" width="32" height="32" viewBox="0 0 32 32"><rect x="1.5" y="10.5" width="10" height="8" fill="#f4f4f4" stroke="#b5b5b5"/><rect x="18.5" y="1.5" width="10" height="8" fill="#f4f4f4" stroke="#b5b5b5"/><rect x="18.5" y="19.5" width="10" height="8" fill="#f4f4f4" stroke="#b5b5b5"/><path d="M11.5 14 L18.5 6 M11.5 14 L18.5 23" stroke="#b5b5b5"/></svg><div class="t" style="left:591px;width:1200px;text-align:center;top:100.84px;font-size:12px;color:#a6a6a6;"><span style="transform:scaleX(0.9300);transform-origin:50% 0">Relações</span></div><svg class="s" style="left:1249px;top:64px;" width="32" height="32" viewBox="0 0 32 32"><path d="M1 6 Q14 -1 26 5 L28 25 L17 31 L3 25 Z" fill="#7cb82f"/><path d="M5 10 L17 6 L28 11" stroke="#fff" stroke-width="1" fill="none"/><path d="M17 6 V30" stroke="#fff"/><path d="M18 14 L28 16 M18 19 L28 20.5 M18 24 L28 25 M22.5 9 V28" stroke="#fff" stroke-width="1"/><path d="M7 13 V24 M7 11 V12 M10 22 L12 18 L14 22 M12 18 V26" stroke="#fff" stroke-width="1.2" fill="none"/></svg><div class="t" style="left:664px;width:1200px;text-align:center;top:100.84px;font-size:12px;color:#3c3c3c;"><span style="transform:scaleX(0.9300);transform-origin:50% 0">Gerenciar</span></div><div class="t" style="left:664px;width:1200px;text-align:center;top:116.84px;font-size:12px;color:#3c3c3c;"><span style="transform:scaleX(0.9300);transform-origin:50% 0">Modelo de Dados</span></div><div class="t" style="left:476px;width:1200px;text-align:center;top:135.84px;font-size:12px;color:#666666;"><span style="transform:scaleX(0.9300);transform-origin:50% 0">Ferramentas de Dados</span></div><div class="r" style="left:1319px;top:62px;width:1px;height:84px;background:#d4d4d4;"></div><svg class="s" style="left:1342px;top:65px;" width="32" height="32" viewBox="0 0 32 32"><rect x="1.5" y="1.5" width="24" height="24" fill="#fff" stroke="#8a8a8a"/><path d="M1.5 7.5 h24 M1.5 13.5 h24 M1.5 19.5 h24 M7.5 1.5 v24 M13.5 1.5 v24 M19.5 1.5 v24" stroke="#8a8a8a" stroke-width="0.8"/><rect x="4" y="7" width="6" height="6" fill="#fff" stroke="#e07b39" stroke-width="1.2"/><rect x="4" y="16" width="6" height="6" fill="#fff" stroke="#e07b39" stroke-width="1.2"/><path d="M17 13 a5 5 0 1 1 7 5 q-2 1 -2 4" stroke="#3b77bf" stroke-width="3" fill="none"/><circle cx="22" cy="28" r="1.8" fill="#3b77bf"/></svg><div class="t" style="left:756px;width:1200px;text-align:center;top:100.84px;font-size:12px;color:#3c3c3c;"><span style="transform:scaleX(0.9300);transform-origin:50% 0">Teste de</span></div><div class="t" style="left:751px;width:1200px;text-align:center;top:116.84px;font-size:12px;color:#3c3c3c;"><span style="transform:scaleX(0.9300);transform-origin:50% 0">Hipóteses</span></div><svg class="s" style="left:1379.8135625px;top:122px;" width="6" height="4" viewBox="0 0 6 4"><path d="M0 0 L6 0 L3 3 Z" fill="#666"/></svg><svg class="s" style="left:1406px;top:65px;" width="32" height="32" viewBox="0 0 32 32"><rect x="1.5" y="1.5" width="26" height="22" fill="#fff" stroke="#6d6d6d"/><path d="M1.5 6.5 h26 M1.5 11.5 h26 M1.5 16.5 h26 M8 1.5 v22 M14.5 1.5 v22 M21 1.5 v22" stroke="#9a9a9a" stroke-width="0.8"/><path d="M3 21 L9 14 L14 18 L24 6" stroke="#3b77bf" stroke-width="2" fill="none"/><path d="M14 18 L24 6" stroke="#e0502b" stroke-width="2"/><path d="M19 5 L25 5 L25 11" stroke="#e0502b" stroke-width="2" fill="none"/><path d="M4 24 v3 h8 l2 -3" stroke="#6d6d6d" fill="#fff"/></svg><div class="t" style="left:820px;width:1200px;text-align:center;top:100.84px;font-size:12px;color:#3c3c3c;"><span style="transform:scaleX(0.9300);transform-origin:50% 0">Planilha de</span></div><div class="t" style="left:820px;width:1200px;text-align:center;top:116.84px;font-size:12px;color:#3c3c3c;"><span style="transform:scaleX(0.9300);transform-origin:50% 0">Previsão</span></div><div class="t" style="left:788px;width:1200px;text-align:center;top:135.84px;font-size:12px;color:#666666;"><span style="transform:scaleX(0.9300);transform-origin:50% 0">Previsão</span></div><div class="r" style="left:1457px;top:62px;width:1px;height:84px;background:#d4d4d4;"></div><svg class="s" style="left:1469px;top:66px;" width="32" height="32" viewBox="0 0 32 32"><path d="M1 4 H12 M9 1 L12.5 4 L9 7" stroke="#5fa37a" stroke-width="1.6" fill="none"/><path d="M14 4 h-3 v26 h3" stroke="#6d6d6d" fill="none"/><rect x="7.5" y="13.5" width="8" height="8" fill="#fff" stroke="#6d6d6d"/><path d="M9.5 17.5 h4 M11.5 15.5 v4" stroke="#6d6d6d"/><rect x="18.5" y="4.5" width="10" height="25" fill="#fff" stroke="#6d6d6d"/><path d="M18.5 10.5 h10 M18.5 16.5 h10 M18.5 22.5 h10" stroke="#6d6d6d"/><path d="M21 7.5 h5 M21 13.5 h5 M21 19.5 h5 M21 25.5 h5" stroke="#3b77bf"/></svg><div class="t" style="left:884px;width:1200px;text-align:center;top:100.84px;font-size:12px;color:#3c3c3c;"><span style="transform:scaleX(0.9300);transform-origin:50% 0">Agrupar</span></div><svg class="s" style="left:1481px;top:122px;" width="6" height="4" viewBox="0 0 6 4"><path d="M0 0 L6 0 L3 3 Z" fill="#666"/></svg><svg class="s" style="left:1526px;top:66px;" width="32" height="32" viewBox="0 0 32 32"><path d="M13 4 H2 M5 1 L1.5 4 L5 7" stroke="#5fa37a" stroke-width="1.6" fill="none"/><path d="M14 4 h-3 v26 h3" stroke="#6d6d6d" fill="none"/><rect x="7.5" y="13.5" width="8" height="8" fill="#fff" stroke="#e0502b"/><path d="M8 21 L15 14" stroke="#e0502b"/><rect x="18.5" y="4.5" width="10" height="25" fill="#fff" stroke="#6d6d6d"/><path d="M18.5 10.5 h10 M18.5 16.5 h10 M18.5 22.5 h10" stroke="#6d6d6d"/><path d="M21 7.5 h5 M21 13.5 h5 M21 19.5 h5 M21 25.5 h5" stroke="#3b77bf"/></svg><div class="t" style="left:941px;width:1200px;text-align:center;top:100.84px;font-size:12px;color:#3c3c3c;"><span style="transform:scaleX(0.9300);transform-origin:50% 0">Desagrupar</span></div><svg class="s" style="left:1538px;top:122px;" width="6" height="4" viewBox="0 0 6 4"><path d="M0 0 L6 0 L3 3 Z" fill="#666"/></svg><svg class="s" style="left:1583px;top:65px;" width="32" height="32" viewBox="0 0 32 32"><rect x="2.5" y="4.5" width="10" height="24" fill="#fff" stroke="#6d6d6d"/><path d="M2.5 16.5 h10" stroke="#6d6d6d"/><path d="M5 10.5 h5 M7.5 8 v5 M5 22.5 h5 M7.5 20 v5" stroke="#6d6d6d"/><rect x="12.5" y="4.5" width="17" height="24" fill="#fff" stroke="#6d6d6d"/><path d="M12.5 10.5 h17 M12.5 16.5 h17 M12.5 22.5 h17 M21 4.5 v24" stroke="#6d6d6d"/><path d="M15 7.5 h4 M23 7.5 h4 M15 19.5 h4 M23 19.5 h4" stroke="#3b77bf"/><path d="M15 13.5 h4 M23 13.5 h4 M15 25.5 h4 M23 25.5 h4" stroke="#e07b39"/></svg><div class="t" style="left:998px;width:1200px;text-align:center;top:100.84px;font-size:12px;color:#3c3c3c;"><span style="transform:scaleX(0.9300);transform-origin:50% 0">Subtotal</span></div><svg class="s" style="left:1627px;top:64px;" width="16" height="16" viewBox="0 0 16 16"><path d="M0.5 4.5 h5 M3 2 v5" stroke="#b5b5b5"/><path d="M7 1.5 h5 M7 5.5 h8 M7 9.5 h8 M7 13.5 h8 M14.5 4 v11" stroke="#b5b5b5" fill="none"/></svg><div class="t" style="left:1645px;top:66.84px;font-size:12px;color:#a6a6a6;"><span style="transform:scaleX(0.9300);transform-origin:0 0">Mostrar Detalhe</span></div><svg class="s" style="left:1627px;top:87px;" width="16" height="16" viewBox="0 0 16 16"><path d="M0.5 4.5 h5" stroke="#b5b5b5"/><path d="M7 1.5 h5 M7 5.5 h8 M7 9.5 h8 M7 13.5 h8 M14.5 4 v11" stroke="#b5b5b5" fill="none"/></svg><div class="t" style="left:1645px;top:89.84px;font-size:12px;color:#a6a6a6;"><span style="transform:scaleX(0.9300);transform-origin:0 0">Ocultar Detalhe</span></div><div class="t" style="left:991px;width:1200px;text-align:center;top:135.84px;font-size:12px;color:#666666;"><span style="transform:scaleX(0.9300);transform-origin:50% 0">Estrutura de Tópicos</span></div><svg class="s" style="left:1728px;top:140px;" width="8" height="8" viewBox="0 0 8 8"><path d="M0.5 0.5 H7.5 V7.5 H0.5 Z" fill="none" stroke="#888" stroke-width="0.8"/><path d="M2 2 L6.5 6.5 M6.5 3.5 V6.5 H3.5" stroke="#666" fill="none"/></svg><div class="r" style="left:1741px;top:62px;width:1px;height:84px;background:#d4d4d4;"></div><div class="r" style="left:0px;top:151px;width:1920px;height:86px;background:#e6e6e6;"></div><div class="r" style="left:6px;top:161px;width:102px;height:26px;background:#fff;box-sizing:border-box;border:1px solid #c6c6c6"></div><div class="t" style="left:13px;top:168.0px;font-size:13px;color:#262626;"><span style="transform:scaleX(1.0062);transform-origin:0 0">E2</span></div><svg class="s" style="left:94px;top:172px;" width="6" height="4" viewBox="0 0 6 4"><path d="M0 0 L6 0 L3 3 Z" fill="#555"/></svg><svg class="s" style="left:122px;top:169px;" width="3" height="11" viewBox="0 0 3 11"><circle cx="1.5" cy="1.5" r="1" fill="#a0a0a0"/><circle cx="1.5" cy="5.5" r="1" fill="#a0a0a0"/><circle cx="1.5" cy="9.5" r="1" fill="#a0a0a0"/></svg><div class="r" style="left:138px;top:161px;width:110px;height:26px;background:#fff;box-sizing:border-box;border:1px solid #c6c6c6"></div><svg class="s" style="left:152px;top:169px;" width="10" height="10" viewBox="0 0 10 10"><path d="M0.5 0.5 L9.5 9.5 M9.5 0.5 L0.5 9.5" stroke="#bdbdbd" stroke-width="1.3"/></svg><svg class="s" style="left:187px;top:168px;" width="13" height="11" viewBox="0 0 13 11"><path d="M1 5.5 L4.5 9.5 L12 1" stroke="#c8c8c8" stroke-width="2.4" fill="none"/></svg><div class="t" style="left:224px;top:167.15px;font-size:14px;color:#555;font-weight:bold;font-family:'Liberation Serif';font-style:italic;"><span style="transform-origin:0 0">f</span></div><div class="t" style="left:229px;top:169.69px;font-size:11px;color:#555;font-weight:bold;font-family:'Liberation Serif';font-style:italic;"><span style="transform-origin:0 0">x</span></div><div class="r" style="left:251px;top:161px;width:1669px;height:66px;background:#fff;box-sizing:border-box;border:1px solid #c6c6c6"></div><div class="r" style="left:0px;top:619px;width:1920px;height:27px;background:#e6e6e6;"></div><div class="r" style="left:0px;top:646px;width:1920px;height:1px;background:#c6c6c6;"></div><div class="r" style="left:0px;top:647px;width:1920px;height:21px;background:#f0f0f0;"></div><div class="r" style="left:0px;top:668px;width:1920px;height:1px;background:#217346;"></div><svg class="s" style="left:27px;top:627px;" width="6" height="9" viewBox="0 0 6 9"><path d="M5 0 L0.5 4.5 L5 9 Z" fill="#bdbdbd"/></svg><svg class="s" style="left:56px;top:627px;" width="6" height="9" viewBox="0 0 6 9"><path d="M1 0 L5.5 4.5 L1 9 Z" fill="#bdbdbd"/></svg><div class="r" style="left:101px;top:618px;width:65px;height:25px;background:#fff;"></div><div class="r" style="left:101px;top:641px;width:65px;height:2px;background:#217346;"></div><div class="r" style="left:101px;top:618px;width:1px;height:25px;background:#8f8f8f;"></div><div class="r" style="left:165px;top:618px;width:1px;height:25px;background:#8f8f8f;"></div><div class="t" style="left:-467px;width:1200px;text-align:center;top:624.15px;font-size:14px;color:#217346;font-weight:bold;"><span style="transform:scaleX(0.8930);transform-origin:50% 0">Sheet1</span></div><svg class="s" style="left:198px;top:623px;" width="17" height="17" viewBox="0 0 17 17"><circle cx="8.5" cy="8.5" r="7.5" fill="none" stroke="#6d6d6d" stroke-width="1.2"/><path d="M8.5 4.5 v8 M4.5 8.5 h8" stroke="#6d6d6d" stroke-width="1.6"/></svg><div class="t" style="left:59px;top:650.84px;font-size:12px;color:#3c3c3c;"><span style="transform:scaleX(0.9464);transform-origin:0 0">7798 de 16524 registros localizados.</span></div><svg class="s" style="left:1139px;top:627px;" width="3" height="11" viewBox="0 0 3 11"><circle cx="1.5" cy="1.5" r="1" fill="#a0a0a0"/><circle cx="1.5" cy="5.5" r="1" fill="#a0a0a0"/><circle cx="1.5" cy="9.5" r="1" fill="#a0a0a0"/></svg><div class="r" style="left:1156px;top:625px;width:718px;height:15px;background:#dcdcdc;"></div><div class="r" style="left:1156px;top:625px;width:15px;height:15px;background:#fff;box-sizing:border-box;border:1px solid #ababab"></div><svg class="s" style="left:1161px;top:629px;" width="5" height="7" viewBox="0 0 5 7"><path d="M4.5 0 L0 3.5 L4.5 7 Z" fill="#555"/></svg><div class="r" style="left:1439px;top:625px;width:266px;height:15px;background:#fff;box-sizing:border-box;border:1px solid #ababab"></div><div class="r" style="left:1860px;top:625px;width:15px;height:15px;background:#fff;box-sizing:border-box;border:1px solid #ababab"></div><svg class="s" style="left:1865px;top:629px;" width="5" height="7" viewBox="0 0 5 7"><path d="M0.5 0 L5 3.5 L0.5 7 Z" fill="#555"/></svg><div class="r" style="left:1596px;top:647px;width:38px;height:20px;background:#c8c8c8;"></div><svg class="s" style="left:1607px;top:650px;" width="15" height="14" viewBox="0 0 15 14"><rect x="0.5" y="0.5" width="14" height="13" fill="none" stroke="#555"/><path d="M0.5 4.5 h14 M0.5 9 h14 M5 0.5 v13 M10 0.5 v13" stroke="#555"/></svg><svg class="s" style="left:1645px;top:650px;" width="15" height="14" viewBox="0 0 15 14"><rect x="0.5" y="0.5" width="14" height="13" fill="none" stroke="#555"/><rect x="3.5" y="3" width="8" height="8" fill="none" stroke="#555"/><path d="M5 5.5 h5 M5 8 h5" stroke="#555"/></svg><svg class="s" style="left:1683px;top:650px;" width="15" height="14" viewBox="0 0 15 14"><rect x="0.5" y="0.5" width="14" height="13" fill="none" stroke="#555"/><path d="M7.5 0.5 v7 M3.5 7.5 h8 M3.5 0.5 v7 M11.5 0.5 v7" stroke="#555"/></svg><div class="r" style="left:1712px;top:656px;width:7px;height:2px;background:#555;"></div><div class="r" style="left:1724px;top:657px;width:100px;height:1px;background:#b5b5b5;"></div><div class="r" style="left:1773px;top:651px;width:4px;height:11px;background:#555;"></div><svg class="s" style="left:1829px;top:651px;" width="11" height="11" viewBox="0 0 11 11"><path d="M5.5 0.5 v10 M0.5 5.5 h10" stroke="#555" stroke-width="2"/></svg><div class="t" style="left:1850px;top:651.84px;font-size:12px;color:#3c3c3c;"><span style="transform:scaleX(0.8471);transform-origin:0 0">100%</span></div></div></div></div><div class="clip" style="left:3708px;top:0;width:1288px;height:669px"><div style="position:absolute;left:-3708px;top:0"><div style="position:absolute;left:3668px;top:0;width:0;height:0"><div class="r" style="left:0px;top:0px;width:1328px;height:58px;background:#217346;"></div><svg class="s" style="left:21px;top:9px;" width="15" height="15" viewBox="0 0 15 15"><path d="M1 1 H14 V14 H1 Z" fill="none" stroke="#fff" stroke-width="1.6"/><path d="M4 1.5 V5.5 H11 V1.5" fill="none" stroke="#fff" stroke-width="1.4"/><path d="M4 14 V9 H11 V14" fill="none" stroke="#fff" stroke-width="1.4"/><rect x="6" y="11" width="2" height="3" fill="#fff"/></svg><svg class="s" style="left:63px;top:8px;" width="17" height="16" viewBox="0 0 17 16"><path d="M2 6 H10 a4.5 4.5 0 0 1 0 9 H8" fill="none" stroke="#fff" stroke-width="1.8"/><path d="M6 1.5 L1.8 6 L6 10.5" fill="none" stroke="#fff" stroke-width="1.8"/></svg><svg class="s" style="left:87px;top:14px;" width="6" height="4" viewBox="0 0 6 4"><path d="M0 0 L6 0 L3 3 Z" fill="#fff"/></svg><svg class="s" style="left:107px;top:8px;" width="17" height="16" viewBox="0 0 17 16"><path d="M15 6 H7 a4.5 4.5 0 0 0 0 9 H9" fill="none" stroke="#5a9e78" stroke-width="1.8"/><path d="M11 1.5 L15.2 6 L11 10.5" fill="none" stroke="#5a9e78" stroke-width="1.8"/></svg><svg class="s" style="left:131px;top:14px;" width="6" height="4" viewBox="0 0 6 4"><path d="M0 0 L6 0 L3 3 Z" fill="#5a9e78"/></svg><svg class="s" style="left:157px;top:12px;" width="8" height="9" viewBox="0 0 8 9"><path d="M1 1 H7" stroke="#fff" stroke-width="1.2"/><path d="M1 3.5 H7 L4 7 Z" fill="#fff"/></svg><div class="t" style="left:514px;top:12.84px;font-size:12px;color:#fff;"><span style="transform:scaleX(0.8823);transform-origin:0 0">FULL_PRELDOC20250925073956_SUPERVISOR.xlsx - Excel</span></div><svg class="s" style="left:1159px;top:11px;" width="14" height="11" viewBox="0 0 14 11"><rect x="0.5" y="0.5" width="13" height="10" fill="none" stroke="#fff"/><path d="M0.5 2.5 H13.5" stroke="#fff"/><path d="M7 9 V4.5 M4.8 6.5 L7 4.2 L9.2 6.5" stroke="#fff" fill="none"/></svg><div class="r" style="left:1207px;top:17px;width:10px;height:2px;background:#fff;"></div><svg class="s" style="left:1253px;top:11px;" width="11" height="11" viewBox="0 0 11 11"><rect x="0.5" y="0.5" width="10" height="10" fill="none" stroke="#fff"/><path d="M0.5 1.5 H10.5" stroke="#fff" stroke-width="1.5"/></svg><svg class="s" style="left:1298px;top:11px;" width="11" height="11" viewBox="0 0 11 11"><path d="M0.5 0.5 L10.5 10.5 M10.5 0.5 L0.5 10.5" stroke="#fff" stroke-width="1.3"/></svg><div class="t" style="left:9px;top:39.0px;font-size:13px;color:#ffffff;"><span style="transform:scaleX(0.9528);transform-origin:0 0">Arquivo</span></div><div class="t" style="left:77px;top:39.0px;font-size:13px;color:#ffffff;"><span style="transform:scaleX(0.9052);transform-origin:0 0">Página Inicial</span></div><div class="t" style="left:176px;top:39.0px;font-size:13px;color:#ffffff;"><span style="transform:scaleX(0.8859);transform-origin:0 0">Inserir</span></div><div class="t" style="left:237px;top:39.0px;font-size:13px;color:#ffffff;"><span style="transform:scaleX(0.8992);transform-origin:0 0">Layout da Página</span></div><div class="t" style="left:357px;top:39.0px;font-size:13px;color:#ffffff;"><span style="transform:scaleX(0.9044);transform-origin:0 0">Fórmulas</span></div><div class="t" style="left:497px;top:39.0px;font-size:13px;color:#ffffff;"><span style="transform:scaleX(0.8729);transform-origin:0 0">Revisão</span></div><div class="t" style="left:566px;top:39.0px;font-size:13px;color:#ffffff;"><span style="transform:scaleX(0.8921);transform-origin:0 0">Exibir</span></div><div class="t" style="left:624px;top:39.0px;font-size:13px;color:#ffffff;"><span style="transform:scaleX(0.9374);transform-origin:0 0">Acrobat</span></div><div class="t" style="left:695px;top:39.0px;font-size:13px;color:#ffffff;"><span style="transform:scaleX(0.9083);transform-origin:0 0">Power Pivot</span></div><div class="r" style="left:422px;top:34px;width:60px;height:24px;background:#f3f3f3;"></div><div class="t" style="left:-148.0px;width:1200px;text-align:center;top:39.0px;font-size:13px;color:#217346;"><span style="transform:scaleX(0.9314);transform-origin:50% 0">Dados</span></div><svg class="s" style="left:787px;top:39px;" width="11" height="15" viewBox="0 0 11 15"><path d="M5.5 1 a4.5 4.5 0 0 1 2.5 8.3 V11 H3 V9.3 A4.5 4.5 0 0 1 5.5 1 Z" fill="none" stroke="#c5dccf" stroke-width="1.1"/><path d="M3.5 13 H7.5" stroke="#c5dccf"/></svg><div class="t" style="left:804px;top:39.0px;font-size:13px;color:#c5dccf;"><span style="transform:scaleX(0.8806);transform-origin:0 0">O que você deseja fazer...</span></div><div class="t" style="left:1108px;top:39.0px;font-size:13px;color:#fff;"><span style="transform:scaleX(0.9099);transform-origin:0 0">Camila A. Oliveira</span></div><div class="r" style="left:1212px;top:34px;width:115px;height:23px;background:#1a5c37;"></div><svg class="s" style="left:1219px;top:37px;" width="15" height="18" viewBox="0 0 15 18"><circle cx="7" cy="5.5" r="4.3" fill="none" stroke="#fff" stroke-width="1.3"/><path d="M1 17 a6.5 6.5 0 0 1 10 -6" fill="none" stroke="#fff" stroke-width="1.3"/><path d="M11 11 v6 M8 14 h6" stroke="#fff" stroke-width="1.3"/></svg><div class="t" style="left:1239px;top:39.0px;font-size:13px;color:#fff;"><span style="transform:scaleX(0.9406);transform-origin:0 0">Compartilhar</span></div><div class="r" style="left:0px;top:151px;width:1920px;height:86px;background:#e6e6e6;"></div><div class="r" style="left:6px;top:161px;width:102px;height:26px;background:#fff;box-sizing:border-box;border:1px solid #c6c6c6"></div><div class="t" style="left:13px;top:168.0px;font-size:13px;color:#262626;"><span style="transform:scaleX(1.0062);transform-origin:0 0">E2</span></div><svg class="s" style="left:94px;top:172px;" width="6" height="4" viewBox="0 0 6 4"><path d="M0 0 L6 0 L3 3 Z" fill="#555"/></svg><svg class="s" style="left:122px;top:169px;" width="3" height="11" viewBox="0 0 3 11"><circle cx="1.5" cy="1.5" r="1" fill="#a0a0a0"/><circle cx="1.5" cy="5.5" r="1" fill="#a0a0a0"/><circle cx="1.5" cy="9.5" r="1" fill="#a0a0a0"/></svg><div class="r" style="left:138px;top:161px;width:110px;height:26px;background:#fff;box-sizing:border-box;border:1px solid #c6c6c6"></div><svg class="s" style="left:152px;top:169px;" width="10" height="10" viewBox="0 0 10 10"><path d="M0.5 0.5 L9.5 9.5 M9.5 0.5 L0.5 9.5" stroke="#bdbdbd" stroke-width="1.3"/></svg><svg class="s" style="left:187px;top:168px;" width="13" height="11" viewBox="0 0 13 11"><path d="M1 5.5 L4.5 9.5 L12 1" stroke="#c8c8c8" stroke-width="2.4" fill="none"/></svg><div class="t" style="left:224px;top:167.15px;font-size:14px;color:#555;font-weight:bold;font-family:'Liberation Serif';font-style:italic;"><span style="transform-origin:0 0">f</span></div><div class="t" style="left:229px;top:169.69px;font-size:11px;color:#555;font-weight:bold;font-family:'Liberation Serif';font-style:italic;"><span style="transform-origin:0 0">x</span></div><div class="r" style="left:251px;top:161px;width:1070px;height:66px;background:#fff;box-sizing:border-box;border:1px solid #c6c6c6"></div><div class="r" style="left:0px;top:619px;width:1920px;height:27px;background:#e6e6e6;"></div><div class="r" style="left:0px;top:646px;width:1920px;height:1px;background:#c6c6c6;"></div><div class="r" style="left:0px;top:647px;width:1920px;height:21px;background:#f0f0f0;"></div><div class="r" style="left:0px;top:668px;width:1920px;height:1px;background:#217346;"></div><svg class="s" style="left:27px;top:627px;" width="6" height="9" viewBox="0 0 6 9"><path d="M5 0 L0.5 4.5 L5 9 Z" fill="#bdbdbd"/></svg><svg class="s" style="left:56px;top:627px;" width="6" height="9" viewBox="0 0 6 9"><path d="M1 0 L5.5 4.5 L1 9 Z" fill="#bdbdbd"/></svg><div class="r" style="left:101px;top:618px;width:65px;height:25px;background:#fff;"></div><div class="r" style="left:101px;top:641px;width:65px;height:2px;background:#217346;"></div><div class="r" style="left:101px;top:618px;width:1px;height:25px;background:#8f8f8f;"></div><div class="r" style="left:165px;top:618px;width:1px;height:25px;background:#8f8f8f;"></div><div class="t" style="left:-467px;width:1200px;text-align:center;top:624.15px;font-size:14px;color:#217346;font-weight:bold;"><span style="transform:scaleX(0.8930);transform-origin:50% 0">Sheet1</span></div><svg class="s" style="left:198px;top:623px;" width="17" height="17" viewBox="0 0 17 17"><circle cx="8.5" cy="8.5" r="7.5" fill="none" stroke="#6d6d6d" stroke-width="1.2"/><path d="M8.5 4.5 v8 M4.5 8.5 h8" stroke="#6d6d6d" stroke-width="1.6"/></svg><div class="t" style="left:59px;top:650.84px;font-size:12px;color:#3c3c3c;"><span style="transform:scaleX(0.9464);transform-origin:0 0">7798 de 16524 registros localizados.</span></div><svg class="s" style="left:796px;top:627px;" width="3" height="11" viewBox="0 0 3 11"><circle cx="1.5" cy="1.5" r="1" fill="#a0a0a0"/><circle cx="1.5" cy="5.5" r="1" fill="#a0a0a0"/><circle cx="1.5" cy="9.5" r="1" fill="#a0a0a0"/></svg><div class="r" style="left:813px;top:625px;width:488px;height:15px;background:#dcdcdc;"></div><div class="r" style="left:813px;top:625px;width:15px;height:15px;background:#fff;box-sizing:border-box;border:1px solid #ababab"></div><svg class="s" style="left:818px;top:629px;" width="5" height="7" viewBox="0 0 5 7"><path d="M4.5 0 L0 3.5 L4.5 7 Z" fill="#555"/></svg><div class="r" style="left:1173px;top:625px;width:114px;height:15px;background:#fff;box-sizing:border-box;border:1px solid #ababab"></div><div class="r" style="left:1287px;top:625px;width:15px;height:15px;background:#fff;box-sizing:border-box;border:1px solid #ababab"></div><svg class="s" style="left:1292px;top:629px;" width="5" height="7" viewBox="0 0 5 7"><path d="M0.5 0 L5 3.5 L0.5 7 Z" fill="#555"/></svg><div class="r" style="left:1024px;top:647px;width:38px;height:20px;background:#c8c8c8;"></div><svg class="s" style="left:1035px;top:650px;" width="15" height="14" viewBox="0 0 15 14"><rect x="0.5" y="0.5" width="14" height="13" fill="none" stroke="#555"/><path d="M0.5 4.5 h14 M0.5 9 h14 M5 0.5 v13 M10 0.5 v13" stroke="#555"/></svg><svg class="s" style="left:1073px;top:650px;" width="15" height="14" viewBox="0 0 15 14"><rect x="0.5" y="0.5" width="14" height="13" fill="none" stroke="#555"/><rect x="3.5" y="3" width="8" height="8" fill="none" stroke="#555"/><path d="M5 5.5 h5 M5 8 h5" stroke="#555"/></svg><svg class="s" style="left:1111px;top:650px;" width="15" height="14" viewBox="0 0 15 14"><rect x="0.5" y="0.5" width="14" height="13" fill="none" stroke="#555"/><path d="M7.5 0.5 v7 M3.5 7.5 h8 M3.5 0.5 v7 M11.5 0.5 v7" stroke="#555"/></svg><div class="r" style="left:1140px;top:656px;width:7px;height:2px;background:#555;"></div><div class="r" style="left:1152px;top:657px;width:100px;height:1px;background:#b5b5b5;"></div><div class="r" style="left:1201px;top:651px;width:4px;height:11px;background:#555;"></div><svg class="s" style="left:1257px;top:651px;" width="11" height="11" viewBox="0 0 11 11"><path d="M5.5 0.5 v10 M0.5 5.5 h10" stroke="#555" stroke-width="2"/></svg><div class="t" style="left:1278px;top:651.84px;font-size:12px;color:#3c3c3c;"><span style="transform:scaleX(0.8471);transform-origin:0 0">100%</span></div><svg class="s" style="left:1313px;top:169px;" width="11" height="7" viewBox="0 0 11 7"><path d="M1 6 L5.5 1.5 L10 6" stroke="#555" stroke-width="1.4" fill="none"/></svg></div><div class="r" style="left:3668px;top:58px;width:1328px;height:92px;background:#f3f3f3;"></div><div class="r" style="left:3668px;top:150px;width:1328px;height:1px;background:#d4d4d4;"></div><svg class="s" style="left:3692px;top:66px;" width="32" height="32" viewBox="0 0 32 32"><path d="M3.5 0.5 L17.5 0.5 L24.5 7.5 L24.5 27.5 L3.5 27.5 Z" fill="#fff" stroke="#6d6d6d"/><path d="M17.5 0.5 L17.5 7.5 L24.5 7.5" fill="none" stroke="#6d6d6d"/><path d="M7 8 h10 M7 11 h12 M7 14 h12 M7 17 h10 M7 20 h8" stroke="#8a8a8a"/><rect x="17" y="16" width="10" height="14" rx="2" fill="#e8c27a"/><ellipse cx="22" cy="16.5" rx="5" ry="2" fill="#d4a84e"/></svg><div class="t" style="left:3107px;width:1200px;text-align:center;top:100.84px;font-size:12px;color:#3c3c3c;"><span style="transform:scaleX(0.9300);transform-origin:50% 0">Obter Dados</span></div><div class="t" style="left:3104px;width:1200px;text-align:center;top:116.84px;font-size:12px;color:#3c3c3c;"><span style="transform:scaleX(0.9300);transform-origin:50% 0">Externos</span></div><svg class="s" style="left:3727px;top:122px;" width="6" height="4" viewBox="0 0 6 4"><path d="M0 0 L6 0 L3 3 Z" fill="#666"/></svg><div class="r" style="left:3742px;top:62px;width:1px;height:84px;background:#d4d4d4;"></div><div style="position:absolute;left:3483px;top:0;width:0;height:0"><svg class="s" style="left:275px;top:64px;" width="32" height="32" viewBox="0 0 32 32"><path d="M8 2 L3 13 L8 13 L5 22 L13 9 L8 9 L11 2 Z" fill="#f0b54a"/><rect x="9" y="7" width="13" height="20" rx="3" fill="#777"/><ellipse cx="15.5" cy="8" rx="6.5" ry="2.5" fill="#999"/><rect x="14.5" y="16.5" width="16" height="13" fill="#fff" stroke="#6d6d6d"/><rect x="14.5" y="16.5" width="16" height="3" fill="#3b77bf"/><path d="M14.5 23 h16 M14.5 26 h16 M20 19.5 v10 M25 19.5 v10" stroke="#8a8a8a" stroke-width="0.8"/></svg><div class="t" style="left:-308px;width:1200px;text-align:center;top:100.84px;font-size:12px;color:#3c3c3c;"><span style="transform:scaleX(0.9300);transform-origin:50% 0">Nova</span></div><div class="t" style="left:-313px;width:1200px;text-align:center;top:116.84px;font-size:12px;color:#3c3c3c;"><span style="transform:scaleX(0.9300);transform-origin:50% 0">Consulta</span></div><svg class="s" style="left:313.0235625px;top:122px;" width="6" height="4" viewBox="0 0 6 4"><path d="M0 0 L6 0 L3 3 Z" fill="#666"/></svg><svg class="s" style="left:326px;top:64px;" width="16" height="16" viewBox="0 0 16 16"><rect x="0.5" y="0.5" width="15" height="14" fill="#fff" stroke="#6d6d6d"/><rect x="1" y="1" width="14" height="2" fill="#3b77bf"/><path d="M11 3 v11" stroke="#6d6d6d"/><path d="M12.5 6 h1.5 M12.5 8.5 h1.5 M12.5 11 h1.5" stroke="#6d6d6d"/></svg><div class="t" style="left:345px;top:66.84px;font-size:12px;color:#3c3c3c;"><span style="transform:scaleX(0.9300);transform-origin:0 0">Mostrar Consultas</span></div><svg class="s" style="left:326px;top:87px;" width="16" height="16" viewBox="0 0 16 16"><rect x="0.5" y="0.5" width="15" height="14" fill="#fff" stroke="#6d6d6d"/><rect x="1" y="1" width="14" height="2.5" fill="#3b77bf"/><path d="M1 6.5 h14 M1 9.5 h14 M1 12.5 h14 M5.5 3.5 v11 M10.5 3.5 v11" stroke="#8a8a8a" stroke-width="0.8"/></svg><div class="t" style="left:345px;top:89.84px;font-size:12px;color:#3c3c3c;"><span style="transform:scaleX(0.9300);transform-origin:0 0">Da Tabela</span></div><svg class="s" style="left:326px;top:110px;" width="16" height="16" viewBox="0 0 16 16"><path d="M1.0 1.0 L7.0 1.0 L11.0 5.0 L11.0 14.0 L1.0 14.0 Z" fill="#fff" stroke="#6d6d6d"/><path d="M7.0 1.0 L7.0 5.0 L11.0 5.0" fill="none" stroke="#6d6d6d"/><circle cx="11" cy="12" r="4.3" fill="#fff" stroke="#3b77bf" stroke-width="1.2"/><path d="M11 9.5 v2.8 h2" stroke="#3b77bf" fill="none"/></svg><div class="t" style="left:345px;top:112.84px;font-size:12px;color:#3c3c3c;"><span style="transform:scaleX(0.9300);transform-origin:0 0">Fontes Recentes</span></div><div class="t" style="left:-244px;width:1200px;text-align:center;top:135.84px;font-size:12px;color:#666666;"><span style="transform:scaleX(0.9300);transform-origin:50% 0">Obter e Transformar</span></div><div class="r" style="left:453px;top:62px;width:1px;height:84px;background:#d4d4d4;"></div><svg class="s" style="left:468px;top:64px;" width="32" height="32" viewBox="0 0 32 32"><rect x="2.5" y="1.5" width="16" height="22" fill="#fff" stroke="#6d6d6d"/><rect x="5.5" y="3.5" width="16" height="22" fill="#fff" stroke="#6d6d6d"/><path d="M8.5 5.5 L20.5 5.5 L25.5 10.5 L25.5 27.5 L8.5 27.5 Z" fill="#fff" stroke="#6d6d6d"/><path d="M20.5 5.5 L20.5 10.5 L25.5 10.5" fill="none" stroke="#6d6d6d"/><path d="M17 24 a6 6 0 0 1 10 -5" stroke="#5fa37a" stroke-width="2.6" fill="none"/><path d="M29 26 a6 6 0 0 1 -10 4" stroke="#5fa37a" stroke-width="2.6" fill="none"/></svg><div class="t" style="left:-118px;width:1200px;text-align:center;top:100.84px;font-size:12px;color:#3c3c3c;"><span style="transform:scaleX(0.9300);transform-origin:50% 0">Atualizar</span></div><div class="t" style="left:-123px;width:1200px;text-align:center;top:116.84px;font-size:12px;color:#3c3c3c;"><span style="transform:scaleX(0.9300);transform-origin:50% 0">Tudo</span></div><svg class="s" style="left:493.5118421875px;top:122px;" width="6" height="4" viewBox="0 0 6 4"><path d="M0 0 L6 0 L3 3 Z" fill="#666"/></svg><svg class="s" style="left:511px;top:64px;" width="16" height="16" viewBox="0 0 16 16"><rect x="0.5" y="0.5" width="15" height="11" fill="#fff" stroke="#6d6d6d"/><path d="M3 14 h10" stroke="#6d6d6d"/><path d="M8 3 L11 6 L8 9 L5 6 Z" fill="none" stroke="#3b77bf" stroke-width="1.2"/></svg><div class="t" style="left:530px;top:66.84px;font-size:12px;color:#3c3c3c;"><span style="transform:scaleX(0.9300);transform-origin:0 0">Conexões</span></div><svg class="s" style="left:511px;top:87px;" width="16" height="16" viewBox="0 0 16 16"><rect x="0.5" y="0.5" width="13" height="14" fill="#fafafa" stroke="#b5b5b5"/><rect x="1" y="1" width="12" height="2" fill="#c8c8c8"/><path d="M3 6 h2 M3 10 h2 M7 6 h4 M7 10 h4" stroke="#b5b5b5"/></svg><div class="t" style="left:530px;top:89.84px;font-size:12px;color:#a6a6a6;"><span style="transform:scaleX(0.9300);transform-origin:0 0">Propriedades</span></div><svg class="s" style="left:511px;top:110px;" width="16" height="16" viewBox="0 0 16 16"><path d="M1.0 1.0 L7.0 1.0 L11.0 5.0 L11.0 14.0 L1.0 14.0 Z" fill="#fafafa" stroke="#b5b5b5"/><path d="M7.0 1.0 L7.0 5.0 L11.0 5.0" fill="none" stroke="#b5b5b5"/><path d="M4 12 a2 2 0 0 1 4 0 M7 13 a2 2 0 0 0 4 0" stroke="#b5b5b5" fill="none"/></svg><div class="t" style="left:530px;top:112.84px;font-size:12px;color:#a6a6a6;"><span style="transform:scaleX(0.9300);transform-origin:0 0">Editar Links</span></div><div class="t" style="left:-69px;width:1200px;text-align:center;top:135.84px;font-size:12px;color:#666666;"><span style="transform:scaleX(0.9300);transform-origin:50% 0">Conexões</span></div><div class="r" style="left:611px;top:62px;width:1px;height:84px;background:#d4d4d4;"></div><svg class="s" style="left:620px;top:70px;" width="15" height="16" viewBox="0 0 15 16"><text x="0" y="8" font-size="9.5" font-family="Liberation Sans" fill="#3b77bf">A</text><text x="0" y="16" font-size="9.5" font-family="Liberation Sans" fill="#7a4fb5">Z</text><path d="M10.5 1 v14 M7.8 12 L10.5 15.2 L13.2 12" stroke="#444" stroke-width="1.2" fill="none"/></svg><svg class="s" style="left:620px;top:101px;" width="15" height="16" viewBox="0 0 15 16"><text x="0" y="8" font-size="9.5" font-family="Liberation Sans" fill="#7a4fb5">Z</text><text x="0" y="16" font-size="9.5" font-family="Liberation Sans" fill="#3b77bf">A</text><path d="M10.5 1 v14 M7.8 12 L10.5 15.2 L13.2 12" stroke="#444" stroke-width="1.2" fill="none"/></svg><svg class="s" style="left:651px;top:64px;" width="30" height="28" viewBox="0 0 30 28"><rect x="0.5" y="2.5" width="28" height="24" fill="#fff" stroke="#6d6d6d"/><rect x="0" y="2" width="29" height="3" fill="#3b77bf"/><path d="M14.5 5 v21" stroke="#6d6d6d"/><text x="3" y="15" font-size="11" font-family="Liberation Sans" fill="#7a4fb5">Z</text><text x="3" y="25" font-size="11" font-family="Liberation Sans" fill="#3b77bf">A</text><text x="17" y="15" font-size="11" font-family="Liberation Sans" fill="#3b77bf">A</text><text x="17" y="25" font-size="11" font-family="Liberation Sans" fill="#7a4fb5">Z</text></svg><div class="t" style="left:66px;width:1200px;text-align:center;top:100.84px;font-size:12px;color:#3c3c3c;"><span style="transform:scaleX(0.9300);transform-origin:50% 0">Classificar</span></div><div class="r" style="left:700px;top:66px;width:1px;height:60px;background:#d4d4d4;"></div><div class="r" style="left:704px;top:61px;width:42px;height:69px;background:#c6c6c6;"></div><svg class="s" style="left:710px;top:65px;" width="30" height="31" viewBox="0 0 30 31"><path d="M1 1 L29 1 L29 4 L18 15 L18 29 L12 29 L12 15 L1 4 Z" fill="#6d6d6d"/><path d="M3.5 4 L8 4 L15 11 L15 28 L14 28 L14 14 Z" fill="#f0f0f0" opacity="0.7"/></svg><div class="t" style="left:125px;width:1200px;text-align:center;top:100.84px;font-size:12px;color:#3c3c3c;"><span style="transform:scaleX(0.9300);transform-origin:50% 0">Filtro</span></div><svg class="s" style="left:749px;top:64px;" width="16" height="16" viewBox="0 0 16 16"><path d="M0 0 L15 0 L15 2 L9 8 L9 14 L6 14 L6 8 L0 2 Z" fill="#5a5a5a"/><path d="M9 9 L15 15 M15 9 L9 15" stroke="#d24726" stroke-width="1.8"/></svg><div class="t" style="left:768px;top:66.84px;font-size:12px;color:#3c3c3c;"><span style="transform:scaleX(0.9300);transform-origin:0 0">Limpar</span></div><svg class="s" style="left:749px;top:87px;" width="16" height="16" viewBox="0 0 16 16"><path d="M0 0 L15 0 L15 2 L9 8 L9 14 L6 14 L6 8 L0 2 Z" fill="#5a5a5a"/><path d="M9 12 a3.5 3.5 0 0 1 6 -2 M15 13 a3.5 3.5 0 0 1 -6 2" stroke="#3a9e6a" stroke-width="1.5" fill="none"/></svg><div class="t" style="left:768px;top:89.84px;font-size:12px;color:#3c3c3c;"><span style="transform:scaleX(0.9300);transform-origin:0 0">Reaplicar</span></div><svg class="s" style="left:749px;top:110px;" width="16" height="16" viewBox="0 0 16 16"><path d="M0 0 L15 0 L15 2 L9 8 L9 14 L6 14 L6 8 L0 2 Z" fill="#5a5a5a"/><path d="M7 16 L14 9 L16 11 L9 18 Z" fill="#3b77bf"/></svg><div class="t" style="left:768px;top:112.84px;font-size:12px;color:#3c3c3c;"><span style="transform:scaleX(0.9300);transform-origin:0 0">Avançado</span></div><div class="t" style="left:122px;width:1200px;text-align:center;top:135.84px;font-size:12px;color:#666666;"><span style="transform:scaleX(0.9300);transform-origin:50% 0">Classificar e Filtrar</span></div><div class="r" style="left:833px;top:62px;width:1px;height:84px;background:#d4d4d4;"></div></div><svg class="s" style="left:4334px;top:64px;" width="32" height="32" viewBox="0 0 32 32"><path d="M10 10 a6.5 6 0 0 1 12 0" stroke="#3b77bf" stroke-width="2" fill="none"/><path d="M18.5 8 L22 12 L25.5 8" stroke="#3b77bf" stroke-width="2" fill="none"/><rect x="0.5" y="11.5" width="14" height="16" fill="#fff" stroke="#6d6d6d"/><path d="M3 15.5 h9 M3 18.5 h9 M3 21.5 h9 M3 24.5 h9" stroke="#3b77bf"/><rect x="17.5" y="14.5" width="12" height="11" fill="#fff" stroke="#6d6d6d"/><rect x="17.5" y="14.5" width="12" height="2" fill="#6d6d6d"/><path d="M19.5 19.5 h3 M24.5 19.5 h3 M19.5 23 h3 M24.5 23 h3" stroke="#3b77bf"/></svg><div class="t" style="left:3749px;width:1200px;text-align:center;top:100.84px;font-size:12px;color:#3c3c3c;"><span style="transform:scaleX(0.9300);transform-origin:50% 0">Texto para</span></div><div class="t" style="left:3749px;width:1200px;text-align:center;top:116.84px;font-size:12px;color:#3c3c3c;"><span style="transform:scaleX(0.9300);transform-origin:50% 0">Colunas</span></div><svg class="s" style="left:4382px;top:64px" width="16" height="16" viewBox="0 0 32 32"><rect x="1.5" y="2.5" width="26" height="22" fill="#fff" stroke="#8a8a8a"/><path d="M1.5 8 h26 M1.5 13 h26 M1.5 19 h26 M8 2.5 v22" stroke="#8a8a8a" stroke-width="0.8"/><rect x="9" y="9" width="12" height="4" fill="#fff" stroke="#5fa37a"/><rect x="9" y="14" width="12" height="4" fill="#d9d9d9"/><path d="M24 12 L18 22 L22 22 L19 31 L27 19 L23 19 L26 12 Z" fill="#f0b54a"/></svg><svg class="s" style="left:4382px;top:87px" width="16" height="16" viewBox="0 0 32 32"><rect x="0.5" y="1.5" width="10" height="26" fill="#fff" stroke="#6d6d6d"/><rect x="1" y="2.0" width="9" height="5" fill="#3b77bf"/><rect x="1" y="7.2" width="9" height="5" fill="#f0c36a"/><rect x="1" y="12.4" width="9" height="5" fill="#3b77bf"/><rect x="1" y="17.6" width="9" height="5" fill="#f0c36a"/><rect x="1" y="22.8" width="9" height="5" fill="#3b77bf"/><rect x="20.5" y="1.5" width="10" height="26" fill="#fff" stroke="#6d6d6d"/><rect x="21" y="2.0" width="9" height="5" fill="#3b77bf"/><rect x="21" y="7.2" width="9" height="5" fill="#f0c36a"/><path d="M21 17.5 h9 M21 22.5 h9" stroke="#6d6d6d"/><path d="M12 14 h6 M15.5 11 L18.5 14 L15.5 17" stroke="#3b77bf" stroke-width="1.8" fill="none"/></svg><svg class="s" style="left:4382px;top:110px" width="16" height="16" viewBox="0 0 32 32"><rect x="1.5" y="9.5" width="18" height="6" fill="#fff" stroke="#6d6d6d"/><rect x="1.5" y="19.5" width="16" height="6" fill="#fff" stroke="#6d6d6d"/><path d="M14 8 L18 12 L27 2" stroke="#5fa37a" stroke-width="2.4" fill="none"/><circle cx="23" cy="23" r="5" fill="#fff" stroke="#d24726" stroke-width="2"/><path d="M19.5 19.5 L26.5 26.5" stroke="#d24726" stroke-width="2"/></svg><svg class="s" style="left:4404px;top:121px;" width="6" height="4" viewBox="0 0 6 4"><path d="M0 0 L6 0 L3 3 Z" fill="#666"/></svg><svg class="s" style="left:4417px;top:64px" width="16" height="16" viewBox="0 0 32 32"><rect x="1.5" y="1.5" width="10" height="26" fill="#fff" stroke="#6d6d6d"/><path d="M1.5 7 h10 M1.5 12 h10 M1.5 17 h10 M1.5 22 h10" stroke="#6d6d6d"/><path d="M13 14 h7 M17 11 L20 14 L17 17" stroke="#3b77bf" stroke-width="1.6" fill="none"/><rect x="21.5" y="11.5" width="8" height="5" fill="#fff" stroke="#d24726"/></svg><svg class="s" style="left:4417px;top:87px" width="16" height="16" viewBox="0 0 32 32"><rect x="1.5" y="10.5" width="10" height="8" fill="#f4f4f4" stroke="#b5b5b5"/><rect x="18.5" y="1.5" width="10" height="8" fill="#f4f4f4" stroke="#b5b5b5"/><rect x="18.5" y="19.5" width="10" height="8" fill="#f4f4f4" stroke="#b5b5b5"/><path d="M11.5 14 L18.5 6 M11.5 14 L18.5 23" stroke="#b5b5b5"/></svg><svg class="s" style="left:4417px;top:110px" width="16" height="16" viewBox="0 0 32 32"><path d="M1 6 Q14 -1 26 5 L28 25 L17 31 L3 25 Z" fill="#7cb82f"/><path d="M5 10 L17 6 L28 11" stroke="#fff" stroke-width="1" fill="none"/><path d="M17 6 V30" stroke="#fff"/><path d="M18 14 L28 16 M18 19 L28 20.5 M18 24 L28 25 M22.5 9 V28" stroke="#fff" stroke-width="1"/><path d="M7 13 V24 M7 11 V12 M10 22 L12 18 L14 22 M12 18 V26" stroke="#fff" stroke-width="1.2" fill="none"/></svg><div class="t" style="left:3778px;width:1200px;text-align:center;top:135.84px;font-size:12px;color:#666666;"><span style="transform:scaleX(0.9300);transform-origin:50% 0">Ferramentas de Dados</span></div><div class="r" style="left:4440px;top:62px;width:1px;height:84px;background:#d4d4d4;"></div><svg class="s" style="left:4463px;top:65px;" width="32" height="32" viewBox="0 0 32 32"><rect x="1.5" y="1.5" width="24" height="24" fill="#fff" stroke="#8a8a8a"/><path d="M1.5 7.5 h24 M1.5 13.5 h24 M1.5 19.5 h24 M7.5 1.5 v24 M13.5 1.5 v24 M19.5 1.5 v24" stroke="#8a8a8a" stroke-width="0.8"/><rect x="4" y="7" width="6" height="6" fill="#fff" stroke="#e07b39" stroke-width="1.2"/><rect x="4" y="16" width="6" height="6" fill="#fff" stroke="#e07b39" stroke-width="1.2"/><path d="M17 13 a5 5 0 1 1 7 5 q-2 1 -2 4" stroke="#3b77bf" stroke-width="3" fill="none"/><circle cx="22" cy="28" r="1.8" fill="#3b77bf"/></svg><div class="t" style="left:3877px;width:1200px;text-align:center;top:100.84px;font-size:12px;color:#3c3c3c;"><span style="transform:scaleX(0.9300);transform-origin:50% 0">Teste de</span></div><div class="t" style="left:3872px;width:1200px;text-align:center;top:116.84px;font-size:12px;color:#3c3c3c;"><span style="transform:scaleX(0.9300);transform-origin:50% 0">Hipóteses</span></div><svg class="s" style="left:4500.8135625px;top:122px;" width="6" height="4" viewBox="0 0 6 4"><path d="M0 0 L6 0 L3 3 Z" fill="#666"/></svg><svg class="s" style="left:4527px;top:65px;" width="32" height="32" viewBox="0 0 32 32"><rect x="1.5" y="1.5" width="26" height="22" fill="#fff" stroke="#6d6d6d"/><path d="M1.5 6.5 h26 M1.5 11.5 h26 M1.5 16.5 h26 M8 1.5 v22 M14.5 1.5 v22 M21 1.5 v22" stroke="#9a9a9a" stroke-width="0.8"/><path d="M3 21 L9 14 L14 18 L24 6" stroke="#3b77bf" stroke-width="2" fill="none"/><path d="M14 18 L24 6" stroke="#e0502b" stroke-width="2"/><path d="M19 5 L25 5 L25 11" stroke="#e0502b" stroke-width="2" fill="none"/><path d="M4 24 v3 h8 l2 -3" stroke="#6d6d6d" fill="#fff"/></svg><div class="t" style="left:3941px;width:1200px;text-align:center;top:100.84px;font-size:12px;color:#3c3c3c;"><span style="transform:scaleX(0.9300);transform-origin:50% 0">Planilha de</span></div><div class="t" style="left:3941px;width:1200px;text-align:center;top:116.84px;font-size:12px;color:#3c3c3c;"><span style="transform:scaleX(0.9300);transform-origin:50% 0">Previsão</span></div><div class="t" style="left:3909px;width:1200px;text-align:center;top:135.84px;font-size:12px;color:#666666;"><span style="transform:scaleX(0.9300);transform-origin:50% 0">Previsão</span></div><div class="r" style="left:4577px;top:62px;width:1px;height:84px;background:#d4d4d4;"></div><svg class="s" style="left:4584px;top:64px" width="17" height="17" viewBox="0 0 32 32"><path d="M1 4 H12 M9 1 L12.5 4 L9 7" stroke="#5fa37a" stroke-width="1.6" fill="none"/><path d="M14 4 h-3 v26 h3" stroke="#6d6d6d" fill="none"/><rect x="7.5" y="13.5" width="8" height="8" fill="#fff" stroke="#6d6d6d"/><path d="M9.5 17.5 h4 M11.5 15.5 v4" stroke="#6d6d6d"/><rect x="18.5" y="4.5" width="10" height="25" fill="#fff" stroke="#6d6d6d"/><path d="M18.5 10.5 h10 M18.5 16.5 h10 M18.5 22.5 h10" stroke="#6d6d6d"/><path d="M21 7.5 h5 M21 13.5 h5 M21 19.5 h5 M21 25.5 h5" stroke="#3b77bf"/></svg><div class="t" style="left:4604px;top:66.84px;font-size:12px;color:#3c3c3c;"><span style="transform:scaleX(0.9300);transform-origin:0 0">Agrupar</span></div><svg class="s" style="left:4656px;top:72px;" width="6" height="4" viewBox="0 0 6 4"><path d="M0 0 L6 0 L3 3 Z" fill="#666"/></svg><svg class="s" style="left:4584px;top:87px" width="17" height="17" viewBox="0 0 32 32"><path d="M13 4 H2 M5 1 L1.5 4 L5 7" stroke="#5fa37a" stroke-width="1.6" fill="none"/><path d="M14 4 h-3 v26 h3" stroke="#6d6d6d" fill="none"/><rect x="7.5" y="13.5" width="8" height="8" fill="#fff" stroke="#e0502b"/><path d="M8 21 L15 14" stroke="#e0502b"/><rect x="18.5" y="4.5" width="10" height="25" fill="#fff" stroke="#6d6d6d"/><path d="M18.5 10.5 h10 M18.5 16.5 h10 M18.5 22.5 h10" stroke="#6d6d6d"/><path d="M21 7.5 h5 M21 13.5 h5 M21 19.5 h5 M21 25.5 h5" stroke="#3b77bf"/></svg><div class="t" style="left:4604px;top:89.84px;font-size:12px;color:#3c3c3c;"><span style="transform:scaleX(0.9300);transform-origin:0 0">Desagrupar</span></div><svg class="s" style="left:4673px;top:95px;" width="6" height="4" viewBox="0 0 6 4"><path d="M0 0 L6 0 L3 3 Z" fill="#666"/></svg><svg class="s" style="left:4584px;top:110px" width="17" height="17" viewBox="0 0 32 32"><rect x="2.5" y="4.5" width="10" height="24" fill="#fff" stroke="#6d6d6d"/><path d="M2.5 16.5 h10" stroke="#6d6d6d"/><path d="M5 10.5 h5 M7.5 8 v5 M5 22.5 h5 M7.5 20 v5" stroke="#6d6d6d"/><rect x="12.5" y="4.5" width="17" height="24" fill="#fff" stroke="#6d6d6d"/><path d="M12.5 10.5 h17 M12.5 16.5 h17 M12.5 22.5 h17 M21 4.5 v24" stroke="#6d6d6d"/><path d="M15 7.5 h4 M23 7.5 h4 M15 19.5 h4 M23 19.5 h4" stroke="#3b77bf"/><path d="M15 13.5 h4 M23 13.5 h4 M15 25.5 h4 M23 25.5 h4" stroke="#e07b39"/></svg><div class="t" style="left:4604px;top:112.84px;font-size:12px;color:#3c3c3c;"><span style="transform:scaleX(0.9300);transform-origin:0 0">Subtotal</span></div><svg class="s" style="left:4688px;top:64px;" width="16" height="16" viewBox="0 0 16 16"><path d="M0.5 4.5 h5 M3 2 v5" stroke="#b5b5b5"/><path d="M7 1.5 h5 M7 5.5 h8 M7 9.5 h8 M7 13.5 h8 M14.5 4 v11" stroke="#b5b5b5" fill="none"/></svg><svg class="s" style="left:4688px;top:87px;" width="16" height="16" viewBox="0 0 16 16"><path d="M0.5 4.5 h5" stroke="#b5b5b5"/><path d="M7 1.5 h5 M7 5.5 h8 M7 9.5 h8 M7 13.5 h8 M14.5 4 v11" stroke="#b5b5b5" fill="none"/></svg><div class="t" style="left:4035px;width:1200px;text-align:center;top:135.84px;font-size:12px;color:#666666;"><span style="transform:scaleX(0.9300);transform-origin:50% 0">Estrutura de Tópicos</span></div><svg class="s" style="left:4699px;top:140px;" width="8" height="8" viewBox="0 0 8 8"><path d="M0.5 0.5 H7.5 V7.5 H0.5 Z" fill="none" stroke="#888" stroke-width="0.8"/><path d="M2 2 L6.5 6.5 M6.5 3.5 V6.5 H3.5" stroke="#666" fill="none"/></svg><div class="r" style="left:4711px;top:62px;width:1px;height:84px;background:#d4d4d4;"></div><svg class="s" style="left:4975px;top:138px;" width="11" height="7" viewBox="0 0 11 7"><path d="M1 6 L5.5 1.5 L10 6" stroke="#555" stroke-width="1.4" fill="none"/></svg><div class="r" style="left:4974px;top:237px;width:21px;height:381px;background:#e6e6e6;"></div><div class="r" style="left:4977px;top:254px;width:15px;height:349px;background:#dcdcdc;"></div><div class="r" style="left:4973px;top:256px;width:1px;height:363px;background:#ababab;"></div><div class="r" style="left:4977px;top:239px;width:15px;height:15px;background:#fff;box-sizing:border-box;border:1px solid #ababab"></div><svg class="s" style="left:4981px;top:244px;" width="7" height="5" viewBox="0 0 7 5"><path d="M0 4.5 L3.5 0 L7 4.5 Z" fill="#555"/></svg><div class="r" style="left:4977px;top:418px;width:15px;height:17px;background:#fff;box-sizing:border-box;border:1px solid #ababab"></div><div class="r" style="left:4977px;top:603px;width:15px;height:15px;background:#fff;box-sizing:border-box;border:1px solid #ababab"></div><svg class="s" style="left:4981px;top:608px;" width="7" height="5" viewBox="0 0 7 5"><path d="M0 0 L3.5 4.5 L7 0 Z" fill="#555"/></svg><div class="r" style="left:4995px;top:0px;width:1px;height:669px;background:#217346;"></div></div></div></body></html>
